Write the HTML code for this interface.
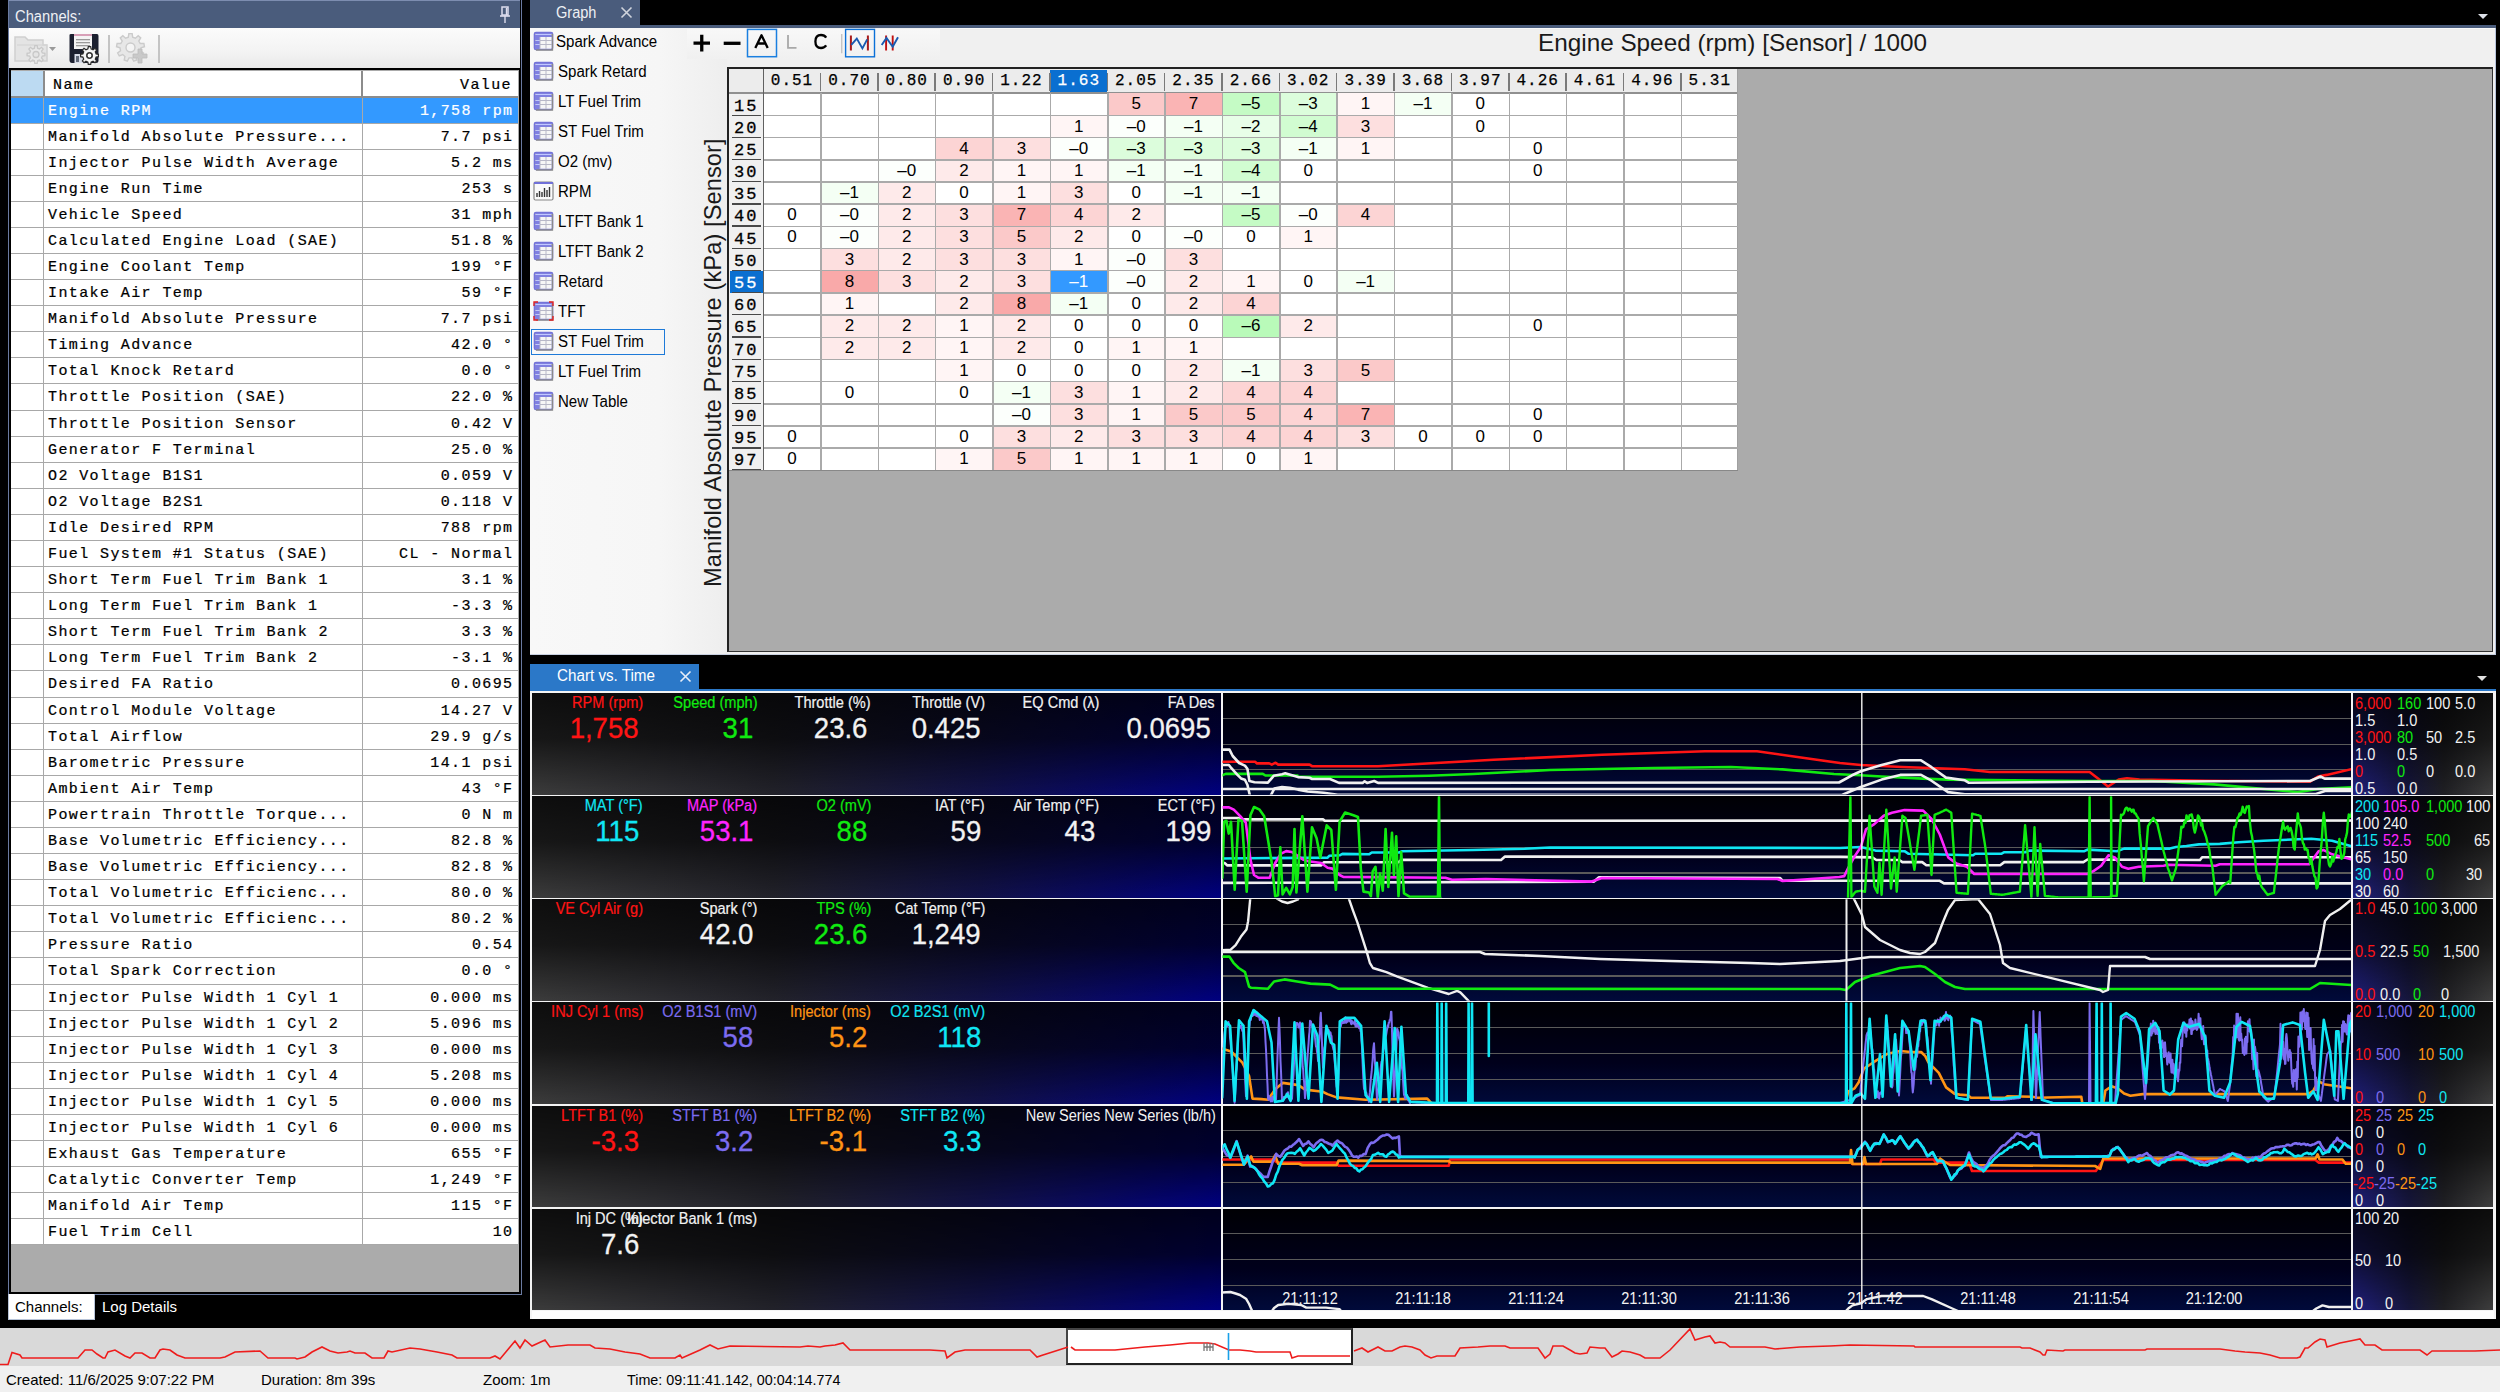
<!DOCTYPE html><html><head><meta charset="utf-8"><style>
*{box-sizing:border-box;margin:0;padding:0}
html,body{width:2500px;height:1392px;overflow:hidden;background:#000;position:relative;font-family:"Liberation Sans",sans-serif}
.a{position:absolute}
.mono{font-family:"Liberation Mono",monospace}
.nw{white-space:pre}
</style></head><body><div class="a" style="left:8px;top:0;width:512px;height:28px;background:#4a5c7c"></div><div class="a" style="left:8.3px;top:0;width:513.7px;height:1295px;border:1.5px solid #6a7aa0;border-top:none"></div><div class="a" style="left:9px;top:0;width:511px;height:1px;background:#7d8db0"></div><div class="a" style="left:9.8px;top:70px;width:510.2px;height:1223.5px;background:#000"></div><div class="a nw" style="left:15px;top:7.5px;font-size:16px;line-height:18px;color:#eef0f4;transform-origin:0 50%;transform:scaleX(0.92)">Channels:</div><svg class="a" style="left:498px;top:6px" width="14" height="18" viewBox="0 0 14 18"><rect x="4" y="1" width="6" height="8" fill="none" stroke="#dde" stroke-width="1.5"/><line x1="2" y1="10" x2="12" y2="10" stroke="#dde" stroke-width="1.6"/><line x1="7" y1="10" x2="7" y2="17" stroke="#dde" stroke-width="1.4"/><line x1="8.5" y1="2" x2="8.5" y2="9" stroke="#dde" stroke-width="1.4"/></svg><div class="a" style="left:9px;top:28px;width:511px;height:39.5px;background:linear-gradient(#fbfbfb,#f3f3f3 60%,#e9e9e9)"></div><div class="a" style="left:9px;top:67.5px;width:511px;height:3.5px;background:#000"></div><div class="a" style="left:11px;top:70px;width:507.8px;height:1221.7px;background:#ababab"></div><div class="a" style="left:11px;top:71px;width:507px;height:26px;background:#fff"></div><div class="a" style="left:11px;top:71px;width:32px;height:25px;background:#bcdaf2"></div><div class="a" style="left:43px;top:71px;width:2px;height:26px;background:#8c8c8c"></div><div class="a" style="left:361px;top:71px;width:2px;height:26px;background:#8c8c8c"></div><div class="a" style="left:11px;top:96px;width:507px;height:2px;background:#8c8c8c"></div><div class="a nw mono" style="left:53px;top:76px;font-size:15px;letter-spacing:1.4px;color:#000;line-height:20px;-webkit-text-stroke:0.22px #000">Name</div><div class="a nw mono" style="right:1988px;top:76px;font-size:15px;letter-spacing:1.4px;color:#000;line-height:20px;-webkit-text-stroke:0.22px #000">Value</div><div class="a" style="left:11px;top:97.50px;width:507px;height:26.09px;background:#3399ff;border-bottom:1px solid #a8a8a8"></div><div class="a" style="left:43px;top:97.50px;width:1px;height:26.09px;background:#a8a8a8"></div><div class="a" style="left:362px;top:97.50px;width:1px;height:26.09px;background:#a8a8a8"></div><div class="a nw mono" style="left:48px;top:101.50px;font-size:15px;letter-spacing:1.4px;color:#fff;line-height:20px;-webkit-text-stroke:0.22px #fff">Engine RPM</div><div class="a nw mono" style="right:1986.5px;top:101.50px;font-size:15px;letter-spacing:1.4px;color:#fff;line-height:20px;text-align:right;-webkit-text-stroke:0.22px #fff">1,758 rpm</div><div class="a" style="left:11px;top:123.59px;width:507px;height:26.09px;background:#fff;border-bottom:1px solid #a8a8a8"></div><div class="a" style="left:43px;top:123.59px;width:1px;height:26.09px;background:#a8a8a8"></div><div class="a" style="left:362px;top:123.59px;width:1px;height:26.09px;background:#a8a8a8"></div><div class="a nw mono" style="left:48px;top:127.59px;font-size:15px;letter-spacing:1.4px;color:#000;line-height:20px;-webkit-text-stroke:0.22px #000">Manifold Absolute Pressure...</div><div class="a nw mono" style="right:1986.5px;top:127.59px;font-size:15px;letter-spacing:1.4px;color:#000;line-height:20px;text-align:right;-webkit-text-stroke:0.22px #000">7.7 psi</div><div class="a" style="left:11px;top:149.68px;width:507px;height:26.09px;background:#fff;border-bottom:1px solid #a8a8a8"></div><div class="a" style="left:43px;top:149.68px;width:1px;height:26.09px;background:#a8a8a8"></div><div class="a" style="left:362px;top:149.68px;width:1px;height:26.09px;background:#a8a8a8"></div><div class="a nw mono" style="left:48px;top:153.68px;font-size:15px;letter-spacing:1.4px;color:#000;line-height:20px;-webkit-text-stroke:0.22px #000">Injector Pulse Width Average</div><div class="a nw mono" style="right:1986.5px;top:153.68px;font-size:15px;letter-spacing:1.4px;color:#000;line-height:20px;text-align:right;-webkit-text-stroke:0.22px #000">5.2 ms</div><div class="a" style="left:11px;top:175.77px;width:507px;height:26.09px;background:#fff;border-bottom:1px solid #a8a8a8"></div><div class="a" style="left:43px;top:175.77px;width:1px;height:26.09px;background:#a8a8a8"></div><div class="a" style="left:362px;top:175.77px;width:1px;height:26.09px;background:#a8a8a8"></div><div class="a nw mono" style="left:48px;top:179.77px;font-size:15px;letter-spacing:1.4px;color:#000;line-height:20px;-webkit-text-stroke:0.22px #000">Engine Run Time</div><div class="a nw mono" style="right:1986.5px;top:179.77px;font-size:15px;letter-spacing:1.4px;color:#000;line-height:20px;text-align:right;-webkit-text-stroke:0.22px #000">253 s</div><div class="a" style="left:11px;top:201.86px;width:507px;height:26.09px;background:#fff;border-bottom:1px solid #a8a8a8"></div><div class="a" style="left:43px;top:201.86px;width:1px;height:26.09px;background:#a8a8a8"></div><div class="a" style="left:362px;top:201.86px;width:1px;height:26.09px;background:#a8a8a8"></div><div class="a nw mono" style="left:48px;top:205.86px;font-size:15px;letter-spacing:1.4px;color:#000;line-height:20px;-webkit-text-stroke:0.22px #000">Vehicle Speed</div><div class="a nw mono" style="right:1986.5px;top:205.86px;font-size:15px;letter-spacing:1.4px;color:#000;line-height:20px;text-align:right;-webkit-text-stroke:0.22px #000">31 mph</div><div class="a" style="left:11px;top:227.95px;width:507px;height:26.09px;background:#fff;border-bottom:1px solid #a8a8a8"></div><div class="a" style="left:43px;top:227.95px;width:1px;height:26.09px;background:#a8a8a8"></div><div class="a" style="left:362px;top:227.95px;width:1px;height:26.09px;background:#a8a8a8"></div><div class="a nw mono" style="left:48px;top:231.95px;font-size:15px;letter-spacing:1.4px;color:#000;line-height:20px;-webkit-text-stroke:0.22px #000">Calculated Engine Load (SAE)</div><div class="a nw mono" style="right:1986.5px;top:231.95px;font-size:15px;letter-spacing:1.4px;color:#000;line-height:20px;text-align:right;-webkit-text-stroke:0.22px #000">51.8 %</div><div class="a" style="left:11px;top:254.04px;width:507px;height:26.09px;background:#fff;border-bottom:1px solid #a8a8a8"></div><div class="a" style="left:43px;top:254.04px;width:1px;height:26.09px;background:#a8a8a8"></div><div class="a" style="left:362px;top:254.04px;width:1px;height:26.09px;background:#a8a8a8"></div><div class="a nw mono" style="left:48px;top:258.04px;font-size:15px;letter-spacing:1.4px;color:#000;line-height:20px;-webkit-text-stroke:0.22px #000">Engine Coolant Temp</div><div class="a nw mono" style="right:1986.5px;top:258.04px;font-size:15px;letter-spacing:1.4px;color:#000;line-height:20px;text-align:right;-webkit-text-stroke:0.22px #000">199 °F</div><div class="a" style="left:11px;top:280.13px;width:507px;height:26.09px;background:#fff;border-bottom:1px solid #a8a8a8"></div><div class="a" style="left:43px;top:280.13px;width:1px;height:26.09px;background:#a8a8a8"></div><div class="a" style="left:362px;top:280.13px;width:1px;height:26.09px;background:#a8a8a8"></div><div class="a nw mono" style="left:48px;top:284.13px;font-size:15px;letter-spacing:1.4px;color:#000;line-height:20px;-webkit-text-stroke:0.22px #000">Intake Air Temp</div><div class="a nw mono" style="right:1986.5px;top:284.13px;font-size:15px;letter-spacing:1.4px;color:#000;line-height:20px;text-align:right;-webkit-text-stroke:0.22px #000">59 °F</div><div class="a" style="left:11px;top:306.22px;width:507px;height:26.09px;background:#fff;border-bottom:1px solid #a8a8a8"></div><div class="a" style="left:43px;top:306.22px;width:1px;height:26.09px;background:#a8a8a8"></div><div class="a" style="left:362px;top:306.22px;width:1px;height:26.09px;background:#a8a8a8"></div><div class="a nw mono" style="left:48px;top:310.22px;font-size:15px;letter-spacing:1.4px;color:#000;line-height:20px;-webkit-text-stroke:0.22px #000">Manifold Absolute Pressure</div><div class="a nw mono" style="right:1986.5px;top:310.22px;font-size:15px;letter-spacing:1.4px;color:#000;line-height:20px;text-align:right;-webkit-text-stroke:0.22px #000">7.7 psi</div><div class="a" style="left:11px;top:332.31px;width:507px;height:26.09px;background:#fff;border-bottom:1px solid #a8a8a8"></div><div class="a" style="left:43px;top:332.31px;width:1px;height:26.09px;background:#a8a8a8"></div><div class="a" style="left:362px;top:332.31px;width:1px;height:26.09px;background:#a8a8a8"></div><div class="a nw mono" style="left:48px;top:336.31px;font-size:15px;letter-spacing:1.4px;color:#000;line-height:20px;-webkit-text-stroke:0.22px #000">Timing Advance</div><div class="a nw mono" style="right:1986.5px;top:336.31px;font-size:15px;letter-spacing:1.4px;color:#000;line-height:20px;text-align:right;-webkit-text-stroke:0.22px #000">42.0 °</div><div class="a" style="left:11px;top:358.40px;width:507px;height:26.09px;background:#fff;border-bottom:1px solid #a8a8a8"></div><div class="a" style="left:43px;top:358.40px;width:1px;height:26.09px;background:#a8a8a8"></div><div class="a" style="left:362px;top:358.40px;width:1px;height:26.09px;background:#a8a8a8"></div><div class="a nw mono" style="left:48px;top:362.40px;font-size:15px;letter-spacing:1.4px;color:#000;line-height:20px;-webkit-text-stroke:0.22px #000">Total Knock Retard</div><div class="a nw mono" style="right:1986.5px;top:362.40px;font-size:15px;letter-spacing:1.4px;color:#000;line-height:20px;text-align:right;-webkit-text-stroke:0.22px #000">0.0 °</div><div class="a" style="left:11px;top:384.49px;width:507px;height:26.09px;background:#fff;border-bottom:1px solid #a8a8a8"></div><div class="a" style="left:43px;top:384.49px;width:1px;height:26.09px;background:#a8a8a8"></div><div class="a" style="left:362px;top:384.49px;width:1px;height:26.09px;background:#a8a8a8"></div><div class="a nw mono" style="left:48px;top:388.49px;font-size:15px;letter-spacing:1.4px;color:#000;line-height:20px;-webkit-text-stroke:0.22px #000">Throttle Position (SAE)</div><div class="a nw mono" style="right:1986.5px;top:388.49px;font-size:15px;letter-spacing:1.4px;color:#000;line-height:20px;text-align:right;-webkit-text-stroke:0.22px #000">22.0 %</div><div class="a" style="left:11px;top:410.58px;width:507px;height:26.09px;background:#fff;border-bottom:1px solid #a8a8a8"></div><div class="a" style="left:43px;top:410.58px;width:1px;height:26.09px;background:#a8a8a8"></div><div class="a" style="left:362px;top:410.58px;width:1px;height:26.09px;background:#a8a8a8"></div><div class="a nw mono" style="left:48px;top:414.58px;font-size:15px;letter-spacing:1.4px;color:#000;line-height:20px;-webkit-text-stroke:0.22px #000">Throttle Position Sensor</div><div class="a nw mono" style="right:1986.5px;top:414.58px;font-size:15px;letter-spacing:1.4px;color:#000;line-height:20px;text-align:right;-webkit-text-stroke:0.22px #000">0.42 V</div><div class="a" style="left:11px;top:436.67px;width:507px;height:26.09px;background:#fff;border-bottom:1px solid #a8a8a8"></div><div class="a" style="left:43px;top:436.67px;width:1px;height:26.09px;background:#a8a8a8"></div><div class="a" style="left:362px;top:436.67px;width:1px;height:26.09px;background:#a8a8a8"></div><div class="a nw mono" style="left:48px;top:440.67px;font-size:15px;letter-spacing:1.4px;color:#000;line-height:20px;-webkit-text-stroke:0.22px #000">Generator F Terminal</div><div class="a nw mono" style="right:1986.5px;top:440.67px;font-size:15px;letter-spacing:1.4px;color:#000;line-height:20px;text-align:right;-webkit-text-stroke:0.22px #000">25.0 %</div><div class="a" style="left:11px;top:462.76px;width:507px;height:26.09px;background:#fff;border-bottom:1px solid #a8a8a8"></div><div class="a" style="left:43px;top:462.76px;width:1px;height:26.09px;background:#a8a8a8"></div><div class="a" style="left:362px;top:462.76px;width:1px;height:26.09px;background:#a8a8a8"></div><div class="a nw mono" style="left:48px;top:466.76px;font-size:15px;letter-spacing:1.4px;color:#000;line-height:20px;-webkit-text-stroke:0.22px #000">O2 Voltage B1S1</div><div class="a nw mono" style="right:1986.5px;top:466.76px;font-size:15px;letter-spacing:1.4px;color:#000;line-height:20px;text-align:right;-webkit-text-stroke:0.22px #000">0.059 V</div><div class="a" style="left:11px;top:488.85px;width:507px;height:26.09px;background:#fff;border-bottom:1px solid #a8a8a8"></div><div class="a" style="left:43px;top:488.85px;width:1px;height:26.09px;background:#a8a8a8"></div><div class="a" style="left:362px;top:488.85px;width:1px;height:26.09px;background:#a8a8a8"></div><div class="a nw mono" style="left:48px;top:492.85px;font-size:15px;letter-spacing:1.4px;color:#000;line-height:20px;-webkit-text-stroke:0.22px #000">O2 Voltage B2S1</div><div class="a nw mono" style="right:1986.5px;top:492.85px;font-size:15px;letter-spacing:1.4px;color:#000;line-height:20px;text-align:right;-webkit-text-stroke:0.22px #000">0.118 V</div><div class="a" style="left:11px;top:514.94px;width:507px;height:26.09px;background:#fff;border-bottom:1px solid #a8a8a8"></div><div class="a" style="left:43px;top:514.94px;width:1px;height:26.09px;background:#a8a8a8"></div><div class="a" style="left:362px;top:514.94px;width:1px;height:26.09px;background:#a8a8a8"></div><div class="a nw mono" style="left:48px;top:518.94px;font-size:15px;letter-spacing:1.4px;color:#000;line-height:20px;-webkit-text-stroke:0.22px #000">Idle Desired RPM</div><div class="a nw mono" style="right:1986.5px;top:518.94px;font-size:15px;letter-spacing:1.4px;color:#000;line-height:20px;text-align:right;-webkit-text-stroke:0.22px #000">788 rpm</div><div class="a" style="left:11px;top:541.03px;width:507px;height:26.09px;background:#fff;border-bottom:1px solid #a8a8a8"></div><div class="a" style="left:43px;top:541.03px;width:1px;height:26.09px;background:#a8a8a8"></div><div class="a" style="left:362px;top:541.03px;width:1px;height:26.09px;background:#a8a8a8"></div><div class="a nw mono" style="left:48px;top:545.03px;font-size:15px;letter-spacing:1.4px;color:#000;line-height:20px;-webkit-text-stroke:0.22px #000">Fuel System #1 Status (SAE)</div><div class="a nw mono" style="right:1986.5px;top:545.03px;font-size:15px;letter-spacing:1.4px;color:#000;line-height:20px;text-align:right;-webkit-text-stroke:0.22px #000">CL - Normal</div><div class="a" style="left:11px;top:567.12px;width:507px;height:26.09px;background:#fff;border-bottom:1px solid #a8a8a8"></div><div class="a" style="left:43px;top:567.12px;width:1px;height:26.09px;background:#a8a8a8"></div><div class="a" style="left:362px;top:567.12px;width:1px;height:26.09px;background:#a8a8a8"></div><div class="a nw mono" style="left:48px;top:571.12px;font-size:15px;letter-spacing:1.4px;color:#000;line-height:20px;-webkit-text-stroke:0.22px #000">Short Term Fuel Trim Bank 1</div><div class="a nw mono" style="right:1986.5px;top:571.12px;font-size:15px;letter-spacing:1.4px;color:#000;line-height:20px;text-align:right;-webkit-text-stroke:0.22px #000">3.1 %</div><div class="a" style="left:11px;top:593.21px;width:507px;height:26.09px;background:#fff;border-bottom:1px solid #a8a8a8"></div><div class="a" style="left:43px;top:593.21px;width:1px;height:26.09px;background:#a8a8a8"></div><div class="a" style="left:362px;top:593.21px;width:1px;height:26.09px;background:#a8a8a8"></div><div class="a nw mono" style="left:48px;top:597.21px;font-size:15px;letter-spacing:1.4px;color:#000;line-height:20px;-webkit-text-stroke:0.22px #000">Long Term Fuel Trim Bank 1</div><div class="a nw mono" style="right:1986.5px;top:597.21px;font-size:15px;letter-spacing:1.4px;color:#000;line-height:20px;text-align:right;-webkit-text-stroke:0.22px #000">-3.3 %</div><div class="a" style="left:11px;top:619.30px;width:507px;height:26.09px;background:#fff;border-bottom:1px solid #a8a8a8"></div><div class="a" style="left:43px;top:619.30px;width:1px;height:26.09px;background:#a8a8a8"></div><div class="a" style="left:362px;top:619.30px;width:1px;height:26.09px;background:#a8a8a8"></div><div class="a nw mono" style="left:48px;top:623.30px;font-size:15px;letter-spacing:1.4px;color:#000;line-height:20px;-webkit-text-stroke:0.22px #000">Short Term Fuel Trim Bank 2</div><div class="a nw mono" style="right:1986.5px;top:623.30px;font-size:15px;letter-spacing:1.4px;color:#000;line-height:20px;text-align:right;-webkit-text-stroke:0.22px #000">3.3 %</div><div class="a" style="left:11px;top:645.39px;width:507px;height:26.09px;background:#fff;border-bottom:1px solid #a8a8a8"></div><div class="a" style="left:43px;top:645.39px;width:1px;height:26.09px;background:#a8a8a8"></div><div class="a" style="left:362px;top:645.39px;width:1px;height:26.09px;background:#a8a8a8"></div><div class="a nw mono" style="left:48px;top:649.39px;font-size:15px;letter-spacing:1.4px;color:#000;line-height:20px;-webkit-text-stroke:0.22px #000">Long Term Fuel Trim Bank 2</div><div class="a nw mono" style="right:1986.5px;top:649.39px;font-size:15px;letter-spacing:1.4px;color:#000;line-height:20px;text-align:right;-webkit-text-stroke:0.22px #000">-3.1 %</div><div class="a" style="left:11px;top:671.48px;width:507px;height:26.09px;background:#fff;border-bottom:1px solid #a8a8a8"></div><div class="a" style="left:43px;top:671.48px;width:1px;height:26.09px;background:#a8a8a8"></div><div class="a" style="left:362px;top:671.48px;width:1px;height:26.09px;background:#a8a8a8"></div><div class="a nw mono" style="left:48px;top:675.48px;font-size:15px;letter-spacing:1.4px;color:#000;line-height:20px;-webkit-text-stroke:0.22px #000">Desired FA Ratio</div><div class="a nw mono" style="right:1986.5px;top:675.48px;font-size:15px;letter-spacing:1.4px;color:#000;line-height:20px;text-align:right;-webkit-text-stroke:0.22px #000">0.0695</div><div class="a" style="left:11px;top:697.57px;width:507px;height:26.09px;background:#fff;border-bottom:1px solid #a8a8a8"></div><div class="a" style="left:43px;top:697.57px;width:1px;height:26.09px;background:#a8a8a8"></div><div class="a" style="left:362px;top:697.57px;width:1px;height:26.09px;background:#a8a8a8"></div><div class="a nw mono" style="left:48px;top:701.57px;font-size:15px;letter-spacing:1.4px;color:#000;line-height:20px;-webkit-text-stroke:0.22px #000">Control Module Voltage</div><div class="a nw mono" style="right:1986.5px;top:701.57px;font-size:15px;letter-spacing:1.4px;color:#000;line-height:20px;text-align:right;-webkit-text-stroke:0.22px #000">14.27 V</div><div class="a" style="left:11px;top:723.66px;width:507px;height:26.09px;background:#fff;border-bottom:1px solid #a8a8a8"></div><div class="a" style="left:43px;top:723.66px;width:1px;height:26.09px;background:#a8a8a8"></div><div class="a" style="left:362px;top:723.66px;width:1px;height:26.09px;background:#a8a8a8"></div><div class="a nw mono" style="left:48px;top:727.66px;font-size:15px;letter-spacing:1.4px;color:#000;line-height:20px;-webkit-text-stroke:0.22px #000">Total Airflow</div><div class="a nw mono" style="right:1986.5px;top:727.66px;font-size:15px;letter-spacing:1.4px;color:#000;line-height:20px;text-align:right;-webkit-text-stroke:0.22px #000">29.9 g/s</div><div class="a" style="left:11px;top:749.75px;width:507px;height:26.09px;background:#fff;border-bottom:1px solid #a8a8a8"></div><div class="a" style="left:43px;top:749.75px;width:1px;height:26.09px;background:#a8a8a8"></div><div class="a" style="left:362px;top:749.75px;width:1px;height:26.09px;background:#a8a8a8"></div><div class="a nw mono" style="left:48px;top:753.75px;font-size:15px;letter-spacing:1.4px;color:#000;line-height:20px;-webkit-text-stroke:0.22px #000">Barometric Pressure</div><div class="a nw mono" style="right:1986.5px;top:753.75px;font-size:15px;letter-spacing:1.4px;color:#000;line-height:20px;text-align:right;-webkit-text-stroke:0.22px #000">14.1 psi</div><div class="a" style="left:11px;top:775.84px;width:507px;height:26.09px;background:#fff;border-bottom:1px solid #a8a8a8"></div><div class="a" style="left:43px;top:775.84px;width:1px;height:26.09px;background:#a8a8a8"></div><div class="a" style="left:362px;top:775.84px;width:1px;height:26.09px;background:#a8a8a8"></div><div class="a nw mono" style="left:48px;top:779.84px;font-size:15px;letter-spacing:1.4px;color:#000;line-height:20px;-webkit-text-stroke:0.22px #000">Ambient Air Temp</div><div class="a nw mono" style="right:1986.5px;top:779.84px;font-size:15px;letter-spacing:1.4px;color:#000;line-height:20px;text-align:right;-webkit-text-stroke:0.22px #000">43 °F</div><div class="a" style="left:11px;top:801.93px;width:507px;height:26.09px;background:#fff;border-bottom:1px solid #a8a8a8"></div><div class="a" style="left:43px;top:801.93px;width:1px;height:26.09px;background:#a8a8a8"></div><div class="a" style="left:362px;top:801.93px;width:1px;height:26.09px;background:#a8a8a8"></div><div class="a nw mono" style="left:48px;top:805.93px;font-size:15px;letter-spacing:1.4px;color:#000;line-height:20px;-webkit-text-stroke:0.22px #000">Powertrain Throttle Torque...</div><div class="a nw mono" style="right:1986.5px;top:805.93px;font-size:15px;letter-spacing:1.4px;color:#000;line-height:20px;text-align:right;-webkit-text-stroke:0.22px #000">0 N m</div><div class="a" style="left:11px;top:828.02px;width:507px;height:26.09px;background:#fff;border-bottom:1px solid #a8a8a8"></div><div class="a" style="left:43px;top:828.02px;width:1px;height:26.09px;background:#a8a8a8"></div><div class="a" style="left:362px;top:828.02px;width:1px;height:26.09px;background:#a8a8a8"></div><div class="a nw mono" style="left:48px;top:832.02px;font-size:15px;letter-spacing:1.4px;color:#000;line-height:20px;-webkit-text-stroke:0.22px #000">Base Volumetric Efficiency...</div><div class="a nw mono" style="right:1986.5px;top:832.02px;font-size:15px;letter-spacing:1.4px;color:#000;line-height:20px;text-align:right;-webkit-text-stroke:0.22px #000">82.8 %</div><div class="a" style="left:11px;top:854.11px;width:507px;height:26.09px;background:#fff;border-bottom:1px solid #a8a8a8"></div><div class="a" style="left:43px;top:854.11px;width:1px;height:26.09px;background:#a8a8a8"></div><div class="a" style="left:362px;top:854.11px;width:1px;height:26.09px;background:#a8a8a8"></div><div class="a nw mono" style="left:48px;top:858.11px;font-size:15px;letter-spacing:1.4px;color:#000;line-height:20px;-webkit-text-stroke:0.22px #000">Base Volumetric Efficiency...</div><div class="a nw mono" style="right:1986.5px;top:858.11px;font-size:15px;letter-spacing:1.4px;color:#000;line-height:20px;text-align:right;-webkit-text-stroke:0.22px #000">82.8 %</div><div class="a" style="left:11px;top:880.20px;width:507px;height:26.09px;background:#fff;border-bottom:1px solid #a8a8a8"></div><div class="a" style="left:43px;top:880.20px;width:1px;height:26.09px;background:#a8a8a8"></div><div class="a" style="left:362px;top:880.20px;width:1px;height:26.09px;background:#a8a8a8"></div><div class="a nw mono" style="left:48px;top:884.20px;font-size:15px;letter-spacing:1.4px;color:#000;line-height:20px;-webkit-text-stroke:0.22px #000">Total Volumetric Efficienc...</div><div class="a nw mono" style="right:1986.5px;top:884.20px;font-size:15px;letter-spacing:1.4px;color:#000;line-height:20px;text-align:right;-webkit-text-stroke:0.22px #000">80.0 %</div><div class="a" style="left:11px;top:906.29px;width:507px;height:26.09px;background:#fff;border-bottom:1px solid #a8a8a8"></div><div class="a" style="left:43px;top:906.29px;width:1px;height:26.09px;background:#a8a8a8"></div><div class="a" style="left:362px;top:906.29px;width:1px;height:26.09px;background:#a8a8a8"></div><div class="a nw mono" style="left:48px;top:910.29px;font-size:15px;letter-spacing:1.4px;color:#000;line-height:20px;-webkit-text-stroke:0.22px #000">Total Volumetric Efficienc...</div><div class="a nw mono" style="right:1986.5px;top:910.29px;font-size:15px;letter-spacing:1.4px;color:#000;line-height:20px;text-align:right;-webkit-text-stroke:0.22px #000">80.2 %</div><div class="a" style="left:11px;top:932.38px;width:507px;height:26.09px;background:#fff;border-bottom:1px solid #a8a8a8"></div><div class="a" style="left:43px;top:932.38px;width:1px;height:26.09px;background:#a8a8a8"></div><div class="a" style="left:362px;top:932.38px;width:1px;height:26.09px;background:#a8a8a8"></div><div class="a nw mono" style="left:48px;top:936.38px;font-size:15px;letter-spacing:1.4px;color:#000;line-height:20px;-webkit-text-stroke:0.22px #000">Pressure Ratio</div><div class="a nw mono" style="right:1986.5px;top:936.38px;font-size:15px;letter-spacing:1.4px;color:#000;line-height:20px;text-align:right;-webkit-text-stroke:0.22px #000">0.54</div><div class="a" style="left:11px;top:958.47px;width:507px;height:26.09px;background:#fff;border-bottom:1px solid #a8a8a8"></div><div class="a" style="left:43px;top:958.47px;width:1px;height:26.09px;background:#a8a8a8"></div><div class="a" style="left:362px;top:958.47px;width:1px;height:26.09px;background:#a8a8a8"></div><div class="a nw mono" style="left:48px;top:962.47px;font-size:15px;letter-spacing:1.4px;color:#000;line-height:20px;-webkit-text-stroke:0.22px #000">Total Spark Correction</div><div class="a nw mono" style="right:1986.5px;top:962.47px;font-size:15px;letter-spacing:1.4px;color:#000;line-height:20px;text-align:right;-webkit-text-stroke:0.22px #000">0.0 °</div><div class="a" style="left:11px;top:984.56px;width:507px;height:26.09px;background:#fff;border-bottom:1px solid #a8a8a8"></div><div class="a" style="left:43px;top:984.56px;width:1px;height:26.09px;background:#a8a8a8"></div><div class="a" style="left:362px;top:984.56px;width:1px;height:26.09px;background:#a8a8a8"></div><div class="a nw mono" style="left:48px;top:988.56px;font-size:15px;letter-spacing:1.4px;color:#000;line-height:20px;-webkit-text-stroke:0.22px #000">Injector Pulse Width 1 Cyl 1</div><div class="a nw mono" style="right:1986.5px;top:988.56px;font-size:15px;letter-spacing:1.4px;color:#000;line-height:20px;text-align:right;-webkit-text-stroke:0.22px #000">0.000 ms</div><div class="a" style="left:11px;top:1010.65px;width:507px;height:26.09px;background:#fff;border-bottom:1px solid #a8a8a8"></div><div class="a" style="left:43px;top:1010.65px;width:1px;height:26.09px;background:#a8a8a8"></div><div class="a" style="left:362px;top:1010.65px;width:1px;height:26.09px;background:#a8a8a8"></div><div class="a nw mono" style="left:48px;top:1014.65px;font-size:15px;letter-spacing:1.4px;color:#000;line-height:20px;-webkit-text-stroke:0.22px #000">Injector Pulse Width 1 Cyl 2</div><div class="a nw mono" style="right:1986.5px;top:1014.65px;font-size:15px;letter-spacing:1.4px;color:#000;line-height:20px;text-align:right;-webkit-text-stroke:0.22px #000">5.096 ms</div><div class="a" style="left:11px;top:1036.74px;width:507px;height:26.09px;background:#fff;border-bottom:1px solid #a8a8a8"></div><div class="a" style="left:43px;top:1036.74px;width:1px;height:26.09px;background:#a8a8a8"></div><div class="a" style="left:362px;top:1036.74px;width:1px;height:26.09px;background:#a8a8a8"></div><div class="a nw mono" style="left:48px;top:1040.74px;font-size:15px;letter-spacing:1.4px;color:#000;line-height:20px;-webkit-text-stroke:0.22px #000">Injector Pulse Width 1 Cyl 3</div><div class="a nw mono" style="right:1986.5px;top:1040.74px;font-size:15px;letter-spacing:1.4px;color:#000;line-height:20px;text-align:right;-webkit-text-stroke:0.22px #000">0.000 ms</div><div class="a" style="left:11px;top:1062.83px;width:507px;height:26.09px;background:#fff;border-bottom:1px solid #a8a8a8"></div><div class="a" style="left:43px;top:1062.83px;width:1px;height:26.09px;background:#a8a8a8"></div><div class="a" style="left:362px;top:1062.83px;width:1px;height:26.09px;background:#a8a8a8"></div><div class="a nw mono" style="left:48px;top:1066.83px;font-size:15px;letter-spacing:1.4px;color:#000;line-height:20px;-webkit-text-stroke:0.22px #000">Injector Pulse Width 1 Cyl 4</div><div class="a nw mono" style="right:1986.5px;top:1066.83px;font-size:15px;letter-spacing:1.4px;color:#000;line-height:20px;text-align:right;-webkit-text-stroke:0.22px #000">5.208 ms</div><div class="a" style="left:11px;top:1088.92px;width:507px;height:26.09px;background:#fff;border-bottom:1px solid #a8a8a8"></div><div class="a" style="left:43px;top:1088.92px;width:1px;height:26.09px;background:#a8a8a8"></div><div class="a" style="left:362px;top:1088.92px;width:1px;height:26.09px;background:#a8a8a8"></div><div class="a nw mono" style="left:48px;top:1092.92px;font-size:15px;letter-spacing:1.4px;color:#000;line-height:20px;-webkit-text-stroke:0.22px #000">Injector Pulse Width 1 Cyl 5</div><div class="a nw mono" style="right:1986.5px;top:1092.92px;font-size:15px;letter-spacing:1.4px;color:#000;line-height:20px;text-align:right;-webkit-text-stroke:0.22px #000">0.000 ms</div><div class="a" style="left:11px;top:1115.01px;width:507px;height:26.09px;background:#fff;border-bottom:1px solid #a8a8a8"></div><div class="a" style="left:43px;top:1115.01px;width:1px;height:26.09px;background:#a8a8a8"></div><div class="a" style="left:362px;top:1115.01px;width:1px;height:26.09px;background:#a8a8a8"></div><div class="a nw mono" style="left:48px;top:1119.01px;font-size:15px;letter-spacing:1.4px;color:#000;line-height:20px;-webkit-text-stroke:0.22px #000">Injector Pulse Width 1 Cyl 6</div><div class="a nw mono" style="right:1986.5px;top:1119.01px;font-size:15px;letter-spacing:1.4px;color:#000;line-height:20px;text-align:right;-webkit-text-stroke:0.22px #000">0.000 ms</div><div class="a" style="left:11px;top:1141.10px;width:507px;height:26.09px;background:#fff;border-bottom:1px solid #a8a8a8"></div><div class="a" style="left:43px;top:1141.10px;width:1px;height:26.09px;background:#a8a8a8"></div><div class="a" style="left:362px;top:1141.10px;width:1px;height:26.09px;background:#a8a8a8"></div><div class="a nw mono" style="left:48px;top:1145.10px;font-size:15px;letter-spacing:1.4px;color:#000;line-height:20px;-webkit-text-stroke:0.22px #000">Exhaust Gas Temperature</div><div class="a nw mono" style="right:1986.5px;top:1145.10px;font-size:15px;letter-spacing:1.4px;color:#000;line-height:20px;text-align:right;-webkit-text-stroke:0.22px #000">655 °F</div><div class="a" style="left:11px;top:1167.19px;width:507px;height:26.09px;background:#fff;border-bottom:1px solid #a8a8a8"></div><div class="a" style="left:43px;top:1167.19px;width:1px;height:26.09px;background:#a8a8a8"></div><div class="a" style="left:362px;top:1167.19px;width:1px;height:26.09px;background:#a8a8a8"></div><div class="a nw mono" style="left:48px;top:1171.19px;font-size:15px;letter-spacing:1.4px;color:#000;line-height:20px;-webkit-text-stroke:0.22px #000">Catalytic Converter Temp</div><div class="a nw mono" style="right:1986.5px;top:1171.19px;font-size:15px;letter-spacing:1.4px;color:#000;line-height:20px;text-align:right;-webkit-text-stroke:0.22px #000">1,249 °F</div><div class="a" style="left:11px;top:1193.28px;width:507px;height:26.09px;background:#fff;border-bottom:1px solid #a8a8a8"></div><div class="a" style="left:43px;top:1193.28px;width:1px;height:26.09px;background:#a8a8a8"></div><div class="a" style="left:362px;top:1193.28px;width:1px;height:26.09px;background:#a8a8a8"></div><div class="a nw mono" style="left:48px;top:1197.28px;font-size:15px;letter-spacing:1.4px;color:#000;line-height:20px;-webkit-text-stroke:0.22px #000">Manifold Air Temp</div><div class="a nw mono" style="right:1986.5px;top:1197.28px;font-size:15px;letter-spacing:1.4px;color:#000;line-height:20px;text-align:right;-webkit-text-stroke:0.22px #000">115 °F</div><div class="a" style="left:11px;top:1219.37px;width:507px;height:26.09px;background:#fff;border-bottom:1px solid #a8a8a8"></div><div class="a" style="left:43px;top:1219.37px;width:1px;height:26.09px;background:#a8a8a8"></div><div class="a" style="left:362px;top:1219.37px;width:1px;height:26.09px;background:#a8a8a8"></div><div class="a nw mono" style="left:48px;top:1223.37px;font-size:15px;letter-spacing:1.4px;color:#000;line-height:20px;-webkit-text-stroke:0.22px #000">Fuel Trim Cell</div><div class="a nw mono" style="right:1986.5px;top:1223.37px;font-size:15px;letter-spacing:1.4px;color:#000;line-height:20px;text-align:right;-webkit-text-stroke:0.22px #000">10</div><svg class="a" style="left:13px;top:33px" width="44" height="32" viewBox="0 0 44 32"><path d="M2,4 L12,4 L15,7 L30,7 L30,12 L34,12 L34,28 L2,28 Z" fill="#e4e4e4" stroke="#cfcfcf" stroke-width="1.5"/><path d="M4,12 L34,12" stroke="#d6d6d6" stroke-width="1.2"/><path d="M21.48,15.18 L21.80,12.58 L24.20,12.58 L24.52,15.18 L26.40,15.96 L28.46,14.35 L30.15,16.04 L28.54,18.10 L29.32,19.98 L31.92,20.30 L31.92,22.70 L29.32,23.02 L28.54,24.90 L30.15,26.96 L28.46,28.65 L26.40,27.04 L24.52,27.82 L24.20,30.42 L21.80,30.42 L21.48,27.82 L19.60,27.04 L17.54,28.65 L15.85,26.96 L17.46,24.90 L16.68,23.02 L14.08,22.70 L14.08,20.30 L16.68,19.98 L17.46,18.10 L15.85,16.04 L17.54,14.35 L19.60,15.96Z M26.00,21.50 A3,3 0 1 0 20.00,21.50 A3,3 0 1 0 26.00,21.50Z" fill="#e9e9e9" stroke="#c8c8c8" stroke-width="1.3" fill-rule="evenodd"/><path d="M36,14 L43,14 L39.5,18 Z" fill="#9a9a9a"/></svg><svg class="a" style="left:68px;top:33px" width="32" height="32" viewBox="0 0 32 32"><path d="M1.5,2 Q1.5,1 3,1 L29,1 Q30.5,1 30.5,3 L30.5,28 Q30.5,30 28,30 L4,30 Q1.5,30 1.5,27 Z" fill="#1c2030"/><rect x="6" y="1" width="18" height="15" fill="#f4f4f4"/><rect x="6" y="1" width="18" height="2" fill="#d8a0b8"/><rect x="8" y="6" width="14" height="1.3" fill="#9a9a9a"/><rect x="8" y="9" width="14" height="1.3" fill="#9a9a9a"/><rect x="8" y="12" width="14" height="1.3" fill="#9a9a9a"/><rect x="6.5" y="21" width="10" height="9" fill="#d8dce8"/><rect x="8" y="23" width="3" height="6" fill="#606878"/><path d="M19.91,15.89 L20.30,13.58 L22.70,13.58 L23.09,15.89 L25.05,16.70 L26.96,15.35 L28.65,17.04 L27.30,18.95 L28.11,20.91 L30.42,21.30 L30.42,23.70 L28.11,24.09 L27.30,26.05 L28.65,27.96 L26.96,29.65 L25.05,28.30 L23.09,29.11 L22.70,31.42 L20.30,31.42 L19.91,29.11 L17.95,28.30 L16.04,29.65 L14.35,27.96 L15.70,26.05 L14.89,24.09 L12.58,23.70 L12.58,21.30 L14.89,20.91 L15.70,18.95 L14.35,17.04 L16.04,15.35 L17.95,16.70Z M24.10,22.50 A2.6,2.6 0 1 0 18.90,22.50 A2.6,2.6 0 1 0 24.10,22.50Z" fill="#f6f6f6" stroke="#2a2a2a" stroke-width="1.2" fill-rule="evenodd"/><circle cx="21.5" cy="22.5" r="2.6" fill="#fff" stroke="#333" stroke-width="1.4"/></svg><div class="a" style="left:108px;top:35px;width:2px;height:28px;background:#c4c4c4"></div><svg class="a" style="left:115px;top:32px" width="36" height="34" viewBox="0 0 36 34"><path d="M13.32,5.23 L13.84,1.60 L17.16,1.60 L17.68,5.23 L20.43,6.23 L23.17,3.79 L25.71,5.92 L23.77,9.04 L25.24,11.57 L28.90,11.45 L29.48,14.72 L25.99,15.87 L25.49,18.74 L28.37,21.02 L26.71,23.89 L23.30,22.53 L21.06,24.40 L21.81,28.00 L18.70,29.13 L16.96,25.90 L14.04,25.90 L12.30,29.13 L9.19,28.00 L9.94,24.40 L7.70,22.53 L4.29,23.89 L2.63,21.02 L5.51,18.74 L5.01,15.87 L1.52,14.72 L2.10,11.45 L5.76,11.57 L7.23,9.04 L5.29,5.92 L7.83,3.79 L10.57,6.23Z M20.00,15.50 A4.5,4.5 0 1 0 11.00,15.50 A4.5,4.5 0 1 0 20.00,15.50Z" fill="#e7e7e7" stroke="#cbcbcb" stroke-width="1.4" fill-rule="evenodd"/><path d="M23,17 L27,17 L27,22 L32,22 L32,26 L27,26 L27,31 L23,31 L23,26 L18,26 L18,22 L23,22 Z" fill="#c9c9c9" stroke="#bdbdbd" stroke-width="0.8"/></svg><div class="a" style="left:158px;top:35px;width:2px;height:28px;background:#c4c4c4"></div><div class="a" style="left:8px;top:1294px;width:87px;height:26px;background:#fff;border:1px solid #b8c4d8;border-top:none"></div><div class="a nw" style="left:15px;top:1298px;font-size:15px;color:#000">Channels:</div><div class="a nw" style="left:102px;top:1298px;font-size:15px;color:#fff">Log Details</div><div class="a" style="left:530px;top:0;width:110px;height:25px;background:#4a5c7c"></div><div class="a nw" style="left:556px;top:4.3px;font-size:16px;color:#eef0f4;transform-origin:0 50%;transform:scaleX(0.91)">Graph</div><svg class="a" style="left:620px;top:6px" width="13" height="13" viewBox="0 0 13 13"><path d="M1.5,1.5 L11.5,11.5 M11.5,1.5 L1.5,11.5" stroke="#d0d4dc" stroke-width="1.6"/></svg><svg class="a" style="left:2477px;top:12.5px" width="12" height="8" viewBox="0 0 12 8"><path d="M1,1 L11,1 L6,6 Z" fill="#dde0e8"/></svg><div class="a" style="left:530px;top:25px;width:1966px;height:2.5px;background:#4a5c7c"></div><div class="a" style="left:530px;top:28px;width:1966px;height:626.5px;background:#f0f0f0;border-right:1.2px solid #b8c4dc;border-bottom:1.2px solid #c8d0e0"></div><div class="a" style="left:940px;top:27.5px;width:1555px;height:1.5px;background:#fafafa"></div><div class="a" style="left:530px;top:28px;width:197px;height:626px;background:linear-gradient(to right,#f8f8f8 0px,#f6f6f6 130px,#eeeeee 195px)"></div><div class="a" style="left:687px;top:29px;width:253px;height:30px;background:linear-gradient(#f8f8f8,#f0f0f0)"></div><div class="a nw" style="left:1538px;top:29px;font-size:24.3px;color:#1a1a1a">Engine Speed (rpm) [Sensor] / 1000</div><div class="a nw" style="left:700px;top:587px;font-size:23.6px;letter-spacing:0.1px;color:#1a1a1a;transform-origin:0 0;transform:rotate(-90deg)">Manifold Absolute Pressure (kPa) [Sensor]</div><div class="a" style="left:727px;top:67px;width:1766px;height:585px;background:#ababab;border-left:2px solid #222;border-top:2px solid #222;border-bottom:1.5px solid #333;border-right:1.5px solid #333"></div><div class="a" style="left:729px;top:69px;width:1009.4px;height:24.3px;background:#ececec"></div><div class="a" style="left:729px;top:93.3px;width:34.3px;height:377.1px;background:#f0f0f0"></div><div class="a" style="left:763.3px;top:93.3px;width:975.1px;height:377.1px;background:#fff"></div><div class="a nw mono" style="left:763.3px;top:70px;width:57.4px;text-align:center;font-size:16px;letter-spacing:1px;line-height:22px;color:#000;-webkit-text-stroke:0.25px #000">0.51</div><div class="a nw mono" style="left:820.7px;top:70px;width:57.4px;text-align:center;font-size:16px;letter-spacing:1px;line-height:22px;color:#000;-webkit-text-stroke:0.25px #000">0.70</div><div class="a" style="left:819.7px;top:73px;width:1.6px;height:18px;background:#7a7a7a"></div><div class="a nw mono" style="left:878.0px;top:70px;width:57.4px;text-align:center;font-size:16px;letter-spacing:1px;line-height:22px;color:#000;-webkit-text-stroke:0.25px #000">0.80</div><div class="a" style="left:877.0px;top:73px;width:1.6px;height:18px;background:#7a7a7a"></div><div class="a nw mono" style="left:935.4px;top:70px;width:57.4px;text-align:center;font-size:16px;letter-spacing:1px;line-height:22px;color:#000;-webkit-text-stroke:0.25px #000">0.90</div><div class="a" style="left:934.4px;top:73px;width:1.6px;height:18px;background:#7a7a7a"></div><div class="a nw mono" style="left:992.7px;top:70px;width:57.4px;text-align:center;font-size:16px;letter-spacing:1px;line-height:22px;color:#000;-webkit-text-stroke:0.25px #000">1.22</div><div class="a" style="left:991.7px;top:73px;width:1.6px;height:18px;background:#7a7a7a"></div><div class="a" style="left:1050.1px;top:70px;width:57.4px;height:23.3px;background:#0a6fd0"></div><div class="a nw mono" style="left:1050.1px;top:70px;width:57.4px;text-align:center;font-size:16px;letter-spacing:1px;line-height:22px;color:#fff;-webkit-text-stroke:0.25px #fff">1.63</div><div class="a" style="left:1049.1px;top:73px;width:1.6px;height:18px;background:#7a7a7a"></div><div class="a nw mono" style="left:1107.5px;top:70px;width:57.4px;text-align:center;font-size:16px;letter-spacing:1px;line-height:22px;color:#000;-webkit-text-stroke:0.25px #000">2.05</div><div class="a" style="left:1106.5px;top:73px;width:1.6px;height:18px;background:#7a7a7a"></div><div class="a nw mono" style="left:1164.8px;top:70px;width:57.4px;text-align:center;font-size:16px;letter-spacing:1px;line-height:22px;color:#000;-webkit-text-stroke:0.25px #000">2.35</div><div class="a" style="left:1163.8px;top:73px;width:1.6px;height:18px;background:#7a7a7a"></div><div class="a nw mono" style="left:1222.2px;top:70px;width:57.4px;text-align:center;font-size:16px;letter-spacing:1px;line-height:22px;color:#000;-webkit-text-stroke:0.25px #000">2.66</div><div class="a" style="left:1221.2px;top:73px;width:1.6px;height:18px;background:#7a7a7a"></div><div class="a nw mono" style="left:1279.5px;top:70px;width:57.4px;text-align:center;font-size:16px;letter-spacing:1px;line-height:22px;color:#000;-webkit-text-stroke:0.25px #000">3.02</div><div class="a" style="left:1278.5px;top:73px;width:1.6px;height:18px;background:#7a7a7a"></div><div class="a nw mono" style="left:1336.9px;top:70px;width:57.4px;text-align:center;font-size:16px;letter-spacing:1px;line-height:22px;color:#000;-webkit-text-stroke:0.25px #000">3.39</div><div class="a" style="left:1335.9px;top:73px;width:1.6px;height:18px;background:#7a7a7a"></div><div class="a nw mono" style="left:1394.3px;top:70px;width:57.4px;text-align:center;font-size:16px;letter-spacing:1px;line-height:22px;color:#000;-webkit-text-stroke:0.25px #000">3.68</div><div class="a" style="left:1393.3px;top:73px;width:1.6px;height:18px;background:#7a7a7a"></div><div class="a nw mono" style="left:1451.6px;top:70px;width:57.4px;text-align:center;font-size:16px;letter-spacing:1px;line-height:22px;color:#000;-webkit-text-stroke:0.25px #000">3.97</div><div class="a" style="left:1450.6px;top:73px;width:1.6px;height:18px;background:#7a7a7a"></div><div class="a nw mono" style="left:1509.0px;top:70px;width:57.4px;text-align:center;font-size:16px;letter-spacing:1px;line-height:22px;color:#000;-webkit-text-stroke:0.25px #000">4.26</div><div class="a" style="left:1508.0px;top:73px;width:1.6px;height:18px;background:#7a7a7a"></div><div class="a nw mono" style="left:1566.3px;top:70px;width:57.4px;text-align:center;font-size:16px;letter-spacing:1px;line-height:22px;color:#000;-webkit-text-stroke:0.25px #000">4.61</div><div class="a" style="left:1565.3px;top:73px;width:1.6px;height:18px;background:#7a7a7a"></div><div class="a nw mono" style="left:1623.7px;top:70px;width:57.4px;text-align:center;font-size:16px;letter-spacing:1px;line-height:22px;color:#000;-webkit-text-stroke:0.25px #000">4.96</div><div class="a" style="left:1622.7px;top:73px;width:1.6px;height:18px;background:#7a7a7a"></div><div class="a nw mono" style="left:1681.1px;top:70px;width:57.4px;text-align:center;font-size:16px;letter-spacing:1px;line-height:22px;color:#000;-webkit-text-stroke:0.25px #000">5.31</div><div class="a" style="left:1680.1px;top:73px;width:1.6px;height:18px;background:#7a7a7a"></div><div class="a" style="left:729px;top:91.8px;width:1009.4px;height:2px;background:#909090"></div><div class="a" style="left:1737.4px;top:69px;width:1px;height:401.4px;background:#a0a0a0"></div><div class="a" style="left:1107.5px;top:93.3px;width:57.4px;height:22.2px;background:#fbc9c9"></div><div class="a nw" style="left:1107.5px;top:94.3px;width:57.4px;text-align:center;font-size:17px;line-height:20px;color:#000">5</div><div class="a" style="left:1164.8px;top:93.3px;width:57.4px;height:22.2px;background:#fab4b4"></div><div class="a nw" style="left:1164.8px;top:94.3px;width:57.4px;text-align:center;font-size:17px;line-height:20px;color:#000">7</div><div class="a" style="left:1222.2px;top:93.3px;width:57.4px;height:22.2px;background:#c5fbc5"></div><div class="a nw" style="left:1222.2px;top:94.3px;width:57.4px;text-align:center;font-size:17px;line-height:20px;color:#000">&#8211;5</div><div class="a" style="left:1279.5px;top:93.3px;width:57.4px;height:22.2px;background:#dcfddc"></div><div class="a nw" style="left:1279.5px;top:94.3px;width:57.4px;text-align:center;font-size:17px;line-height:20px;color:#000">&#8211;3</div><div class="a" style="left:1336.9px;top:93.3px;width:57.4px;height:22.2px;background:#fff5f5"></div><div class="a nw" style="left:1336.9px;top:94.3px;width:57.4px;text-align:center;font-size:17px;line-height:20px;color:#000">1</div><div class="a" style="left:1394.3px;top:93.3px;width:57.4px;height:22.2px;background:#f4fff4"></div><div class="a nw" style="left:1394.3px;top:94.3px;width:57.4px;text-align:center;font-size:17px;line-height:20px;color:#000">&#8211;1</div><div class="a nw" style="left:1451.6px;top:94.3px;width:57.4px;text-align:center;font-size:17px;line-height:20px;color:#000">0</div><div class="a nw mono" style="left:729px;top:95.5px;width:34.3px;text-align:center;font-size:17px;letter-spacing:2px;line-height:21px;color:#000;-webkit-text-stroke:0.3px #000">15</div><div class="a" style="left:732px;top:114.5px;width:29px;height:1.4px;background:#484848"></div><div class="a" style="left:1050.1px;top:115.5px;width:57.4px;height:22.2px;background:#fff5f5"></div><div class="a nw" style="left:1050.1px;top:116.5px;width:57.4px;text-align:center;font-size:17px;line-height:20px;color:#000">1</div><div class="a" style="left:1107.5px;top:115.5px;width:57.4px;height:22.2px;background:#fcfffc"></div><div class="a nw" style="left:1107.5px;top:116.5px;width:57.4px;text-align:center;font-size:17px;line-height:20px;color:#000">&#8211;0</div><div class="a" style="left:1164.8px;top:115.5px;width:57.4px;height:22.2px;background:#f4fff4"></div><div class="a nw" style="left:1164.8px;top:116.5px;width:57.4px;text-align:center;font-size:17px;line-height:20px;color:#000">&#8211;1</div><div class="a" style="left:1222.2px;top:115.5px;width:57.4px;height:22.2px;background:#e8fee8"></div><div class="a nw" style="left:1222.2px;top:116.5px;width:57.4px;text-align:center;font-size:17px;line-height:20px;color:#000">&#8211;2</div><div class="a" style="left:1279.5px;top:115.5px;width:57.4px;height:22.2px;background:#d1fcd1"></div><div class="a nw" style="left:1279.5px;top:116.5px;width:57.4px;text-align:center;font-size:17px;line-height:20px;color:#000">&#8211;4</div><div class="a" style="left:1336.9px;top:115.5px;width:57.4px;height:22.2px;background:#fddfdf"></div><div class="a nw" style="left:1336.9px;top:116.5px;width:57.4px;text-align:center;font-size:17px;line-height:20px;color:#000">3</div><div class="a nw" style="left:1451.6px;top:116.5px;width:57.4px;text-align:center;font-size:17px;line-height:20px;color:#000">0</div><div class="a nw mono" style="left:729px;top:117.7px;width:34.3px;text-align:center;font-size:17px;letter-spacing:2px;line-height:21px;color:#000;-webkit-text-stroke:0.3px #000">20</div><div class="a" style="left:732px;top:136.7px;width:29px;height:1.4px;background:#484848"></div><div class="a" style="left:935.4px;top:137.7px;width:57.4px;height:22.2px;background:#fcd4d4"></div><div class="a nw" style="left:935.4px;top:138.7px;width:57.4px;text-align:center;font-size:17px;line-height:20px;color:#000">4</div><div class="a" style="left:992.7px;top:137.7px;width:57.4px;height:22.2px;background:#fddfdf"></div><div class="a nw" style="left:992.7px;top:138.7px;width:57.4px;text-align:center;font-size:17px;line-height:20px;color:#000">3</div><div class="a" style="left:1050.1px;top:137.7px;width:57.4px;height:22.2px;background:#fcfffc"></div><div class="a nw" style="left:1050.1px;top:138.7px;width:57.4px;text-align:center;font-size:17px;line-height:20px;color:#000">&#8211;0</div><div class="a" style="left:1107.5px;top:137.7px;width:57.4px;height:22.2px;background:#dcfddc"></div><div class="a nw" style="left:1107.5px;top:138.7px;width:57.4px;text-align:center;font-size:17px;line-height:20px;color:#000">&#8211;3</div><div class="a" style="left:1164.8px;top:137.7px;width:57.4px;height:22.2px;background:#dcfddc"></div><div class="a nw" style="left:1164.8px;top:138.7px;width:57.4px;text-align:center;font-size:17px;line-height:20px;color:#000">&#8211;3</div><div class="a" style="left:1222.2px;top:137.7px;width:57.4px;height:22.2px;background:#dcfddc"></div><div class="a nw" style="left:1222.2px;top:138.7px;width:57.4px;text-align:center;font-size:17px;line-height:20px;color:#000">&#8211;3</div><div class="a" style="left:1279.5px;top:137.7px;width:57.4px;height:22.2px;background:#f4fff4"></div><div class="a nw" style="left:1279.5px;top:138.7px;width:57.4px;text-align:center;font-size:17px;line-height:20px;color:#000">&#8211;1</div><div class="a" style="left:1336.9px;top:137.7px;width:57.4px;height:22.2px;background:#fff5f5"></div><div class="a nw" style="left:1336.9px;top:138.7px;width:57.4px;text-align:center;font-size:17px;line-height:20px;color:#000">1</div><div class="a nw" style="left:1509.0px;top:138.7px;width:57.4px;text-align:center;font-size:17px;line-height:20px;color:#000">0</div><div class="a nw mono" style="left:729px;top:139.9px;width:34.3px;text-align:center;font-size:17px;letter-spacing:2px;line-height:21px;color:#000;-webkit-text-stroke:0.3px #000">25</div><div class="a" style="left:732px;top:158.8px;width:29px;height:1.4px;background:#484848"></div><div class="a" style="left:878.0px;top:159.8px;width:57.4px;height:22.2px;background:#fcfffc"></div><div class="a nw" style="left:878.0px;top:160.8px;width:57.4px;text-align:center;font-size:17px;line-height:20px;color:#000">&#8211;0</div><div class="a" style="left:935.4px;top:159.8px;width:57.4px;height:22.2px;background:#feeaea"></div><div class="a nw" style="left:935.4px;top:160.8px;width:57.4px;text-align:center;font-size:17px;line-height:20px;color:#000">2</div><div class="a" style="left:992.7px;top:159.8px;width:57.4px;height:22.2px;background:#fff5f5"></div><div class="a nw" style="left:992.7px;top:160.8px;width:57.4px;text-align:center;font-size:17px;line-height:20px;color:#000">1</div><div class="a" style="left:1050.1px;top:159.8px;width:57.4px;height:22.2px;background:#fff5f5"></div><div class="a nw" style="left:1050.1px;top:160.8px;width:57.4px;text-align:center;font-size:17px;line-height:20px;color:#000">1</div><div class="a" style="left:1107.5px;top:159.8px;width:57.4px;height:22.2px;background:#f4fff4"></div><div class="a nw" style="left:1107.5px;top:160.8px;width:57.4px;text-align:center;font-size:17px;line-height:20px;color:#000">&#8211;1</div><div class="a" style="left:1164.8px;top:159.8px;width:57.4px;height:22.2px;background:#f4fff4"></div><div class="a nw" style="left:1164.8px;top:160.8px;width:57.4px;text-align:center;font-size:17px;line-height:20px;color:#000">&#8211;1</div><div class="a" style="left:1222.2px;top:159.8px;width:57.4px;height:22.2px;background:#d1fcd1"></div><div class="a nw" style="left:1222.2px;top:160.8px;width:57.4px;text-align:center;font-size:17px;line-height:20px;color:#000">&#8211;4</div><div class="a nw" style="left:1279.5px;top:160.8px;width:57.4px;text-align:center;font-size:17px;line-height:20px;color:#000">0</div><div class="a nw" style="left:1509.0px;top:160.8px;width:57.4px;text-align:center;font-size:17px;line-height:20px;color:#000">0</div><div class="a nw mono" style="left:729px;top:162.0px;width:34.3px;text-align:center;font-size:17px;letter-spacing:2px;line-height:21px;color:#000;-webkit-text-stroke:0.3px #000">30</div><div class="a" style="left:732px;top:181.0px;width:29px;height:1.4px;background:#484848"></div><div class="a" style="left:820.7px;top:182.0px;width:57.4px;height:22.2px;background:#f4fff4"></div><div class="a nw" style="left:820.7px;top:183.0px;width:57.4px;text-align:center;font-size:17px;line-height:20px;color:#000">&#8211;1</div><div class="a" style="left:878.0px;top:182.0px;width:57.4px;height:22.2px;background:#feeaea"></div><div class="a nw" style="left:878.0px;top:183.0px;width:57.4px;text-align:center;font-size:17px;line-height:20px;color:#000">2</div><div class="a nw" style="left:935.4px;top:183.0px;width:57.4px;text-align:center;font-size:17px;line-height:20px;color:#000">0</div><div class="a" style="left:992.7px;top:182.0px;width:57.4px;height:22.2px;background:#fff5f5"></div><div class="a nw" style="left:992.7px;top:183.0px;width:57.4px;text-align:center;font-size:17px;line-height:20px;color:#000">1</div><div class="a" style="left:1050.1px;top:182.0px;width:57.4px;height:22.2px;background:#fddfdf"></div><div class="a nw" style="left:1050.1px;top:183.0px;width:57.4px;text-align:center;font-size:17px;line-height:20px;color:#000">3</div><div class="a nw" style="left:1107.5px;top:183.0px;width:57.4px;text-align:center;font-size:17px;line-height:20px;color:#000">0</div><div class="a" style="left:1164.8px;top:182.0px;width:57.4px;height:22.2px;background:#f4fff4"></div><div class="a nw" style="left:1164.8px;top:183.0px;width:57.4px;text-align:center;font-size:17px;line-height:20px;color:#000">&#8211;1</div><div class="a" style="left:1222.2px;top:182.0px;width:57.4px;height:22.2px;background:#f4fff4"></div><div class="a nw" style="left:1222.2px;top:183.0px;width:57.4px;text-align:center;font-size:17px;line-height:20px;color:#000">&#8211;1</div><div class="a nw mono" style="left:729px;top:184.2px;width:34.3px;text-align:center;font-size:17px;letter-spacing:2px;line-height:21px;color:#000;-webkit-text-stroke:0.3px #000">35</div><div class="a" style="left:732px;top:203.2px;width:29px;height:1.4px;background:#484848"></div><div class="a nw" style="left:763.3px;top:205.2px;width:57.4px;text-align:center;font-size:17px;line-height:20px;color:#000">0</div><div class="a" style="left:820.7px;top:204.2px;width:57.4px;height:22.2px;background:#fcfffc"></div><div class="a nw" style="left:820.7px;top:205.2px;width:57.4px;text-align:center;font-size:17px;line-height:20px;color:#000">&#8211;0</div><div class="a" style="left:878.0px;top:204.2px;width:57.4px;height:22.2px;background:#feeaea"></div><div class="a nw" style="left:878.0px;top:205.2px;width:57.4px;text-align:center;font-size:17px;line-height:20px;color:#000">2</div><div class="a" style="left:935.4px;top:204.2px;width:57.4px;height:22.2px;background:#fddfdf"></div><div class="a nw" style="left:935.4px;top:205.2px;width:57.4px;text-align:center;font-size:17px;line-height:20px;color:#000">3</div><div class="a" style="left:992.7px;top:204.2px;width:57.4px;height:22.2px;background:#fab4b4"></div><div class="a nw" style="left:992.7px;top:205.2px;width:57.4px;text-align:center;font-size:17px;line-height:20px;color:#000">7</div><div class="a" style="left:1050.1px;top:204.2px;width:57.4px;height:22.2px;background:#fcd4d4"></div><div class="a nw" style="left:1050.1px;top:205.2px;width:57.4px;text-align:center;font-size:17px;line-height:20px;color:#000">4</div><div class="a" style="left:1107.5px;top:204.2px;width:57.4px;height:22.2px;background:#feeaea"></div><div class="a nw" style="left:1107.5px;top:205.2px;width:57.4px;text-align:center;font-size:17px;line-height:20px;color:#000">2</div><div class="a" style="left:1222.2px;top:204.2px;width:57.4px;height:22.2px;background:#c5fbc5"></div><div class="a nw" style="left:1222.2px;top:205.2px;width:57.4px;text-align:center;font-size:17px;line-height:20px;color:#000">&#8211;5</div><div class="a" style="left:1279.5px;top:204.2px;width:57.4px;height:22.2px;background:#fcfffc"></div><div class="a nw" style="left:1279.5px;top:205.2px;width:57.4px;text-align:center;font-size:17px;line-height:20px;color:#000">&#8211;0</div><div class="a" style="left:1336.9px;top:204.2px;width:57.4px;height:22.2px;background:#fcd4d4"></div><div class="a nw" style="left:1336.9px;top:205.2px;width:57.4px;text-align:center;font-size:17px;line-height:20px;color:#000">4</div><div class="a nw mono" style="left:729px;top:206.4px;width:34.3px;text-align:center;font-size:17px;letter-spacing:2px;line-height:21px;color:#000;-webkit-text-stroke:0.3px #000">40</div><div class="a" style="left:732px;top:225.4px;width:29px;height:1.4px;background:#484848"></div><div class="a nw" style="left:763.3px;top:227.4px;width:57.4px;text-align:center;font-size:17px;line-height:20px;color:#000">0</div><div class="a" style="left:820.7px;top:226.4px;width:57.4px;height:22.2px;background:#fcfffc"></div><div class="a nw" style="left:820.7px;top:227.4px;width:57.4px;text-align:center;font-size:17px;line-height:20px;color:#000">&#8211;0</div><div class="a" style="left:878.0px;top:226.4px;width:57.4px;height:22.2px;background:#feeaea"></div><div class="a nw" style="left:878.0px;top:227.4px;width:57.4px;text-align:center;font-size:17px;line-height:20px;color:#000">2</div><div class="a" style="left:935.4px;top:226.4px;width:57.4px;height:22.2px;background:#fddfdf"></div><div class="a nw" style="left:935.4px;top:227.4px;width:57.4px;text-align:center;font-size:17px;line-height:20px;color:#000">3</div><div class="a" style="left:992.7px;top:226.4px;width:57.4px;height:22.2px;background:#fbc9c9"></div><div class="a nw" style="left:992.7px;top:227.4px;width:57.4px;text-align:center;font-size:17px;line-height:20px;color:#000">5</div><div class="a" style="left:1050.1px;top:226.4px;width:57.4px;height:22.2px;background:#feeaea"></div><div class="a nw" style="left:1050.1px;top:227.4px;width:57.4px;text-align:center;font-size:17px;line-height:20px;color:#000">2</div><div class="a nw" style="left:1107.5px;top:227.4px;width:57.4px;text-align:center;font-size:17px;line-height:20px;color:#000">0</div><div class="a" style="left:1164.8px;top:226.4px;width:57.4px;height:22.2px;background:#fcfffc"></div><div class="a nw" style="left:1164.8px;top:227.4px;width:57.4px;text-align:center;font-size:17px;line-height:20px;color:#000">&#8211;0</div><div class="a nw" style="left:1222.2px;top:227.4px;width:57.4px;text-align:center;font-size:17px;line-height:20px;color:#000">0</div><div class="a" style="left:1279.5px;top:226.4px;width:57.4px;height:22.2px;background:#fff5f5"></div><div class="a nw" style="left:1279.5px;top:227.4px;width:57.4px;text-align:center;font-size:17px;line-height:20px;color:#000">1</div><div class="a nw mono" style="left:729px;top:228.6px;width:34.3px;text-align:center;font-size:17px;letter-spacing:2px;line-height:21px;color:#000;-webkit-text-stroke:0.3px #000">45</div><div class="a" style="left:732px;top:247.6px;width:29px;height:1.4px;background:#484848"></div><div class="a" style="left:820.7px;top:248.6px;width:57.4px;height:22.2px;background:#fddfdf"></div><div class="a nw" style="left:820.7px;top:249.6px;width:57.4px;text-align:center;font-size:17px;line-height:20px;color:#000">3</div><div class="a" style="left:878.0px;top:248.6px;width:57.4px;height:22.2px;background:#feeaea"></div><div class="a nw" style="left:878.0px;top:249.6px;width:57.4px;text-align:center;font-size:17px;line-height:20px;color:#000">2</div><div class="a" style="left:935.4px;top:248.6px;width:57.4px;height:22.2px;background:#fddfdf"></div><div class="a nw" style="left:935.4px;top:249.6px;width:57.4px;text-align:center;font-size:17px;line-height:20px;color:#000">3</div><div class="a" style="left:992.7px;top:248.6px;width:57.4px;height:22.2px;background:#fddfdf"></div><div class="a nw" style="left:992.7px;top:249.6px;width:57.4px;text-align:center;font-size:17px;line-height:20px;color:#000">3</div><div class="a" style="left:1050.1px;top:248.6px;width:57.4px;height:22.2px;background:#fff5f5"></div><div class="a nw" style="left:1050.1px;top:249.6px;width:57.4px;text-align:center;font-size:17px;line-height:20px;color:#000">1</div><div class="a" style="left:1107.5px;top:248.6px;width:57.4px;height:22.2px;background:#fcfffc"></div><div class="a nw" style="left:1107.5px;top:249.6px;width:57.4px;text-align:center;font-size:17px;line-height:20px;color:#000">&#8211;0</div><div class="a" style="left:1164.8px;top:248.6px;width:57.4px;height:22.2px;background:#fddfdf"></div><div class="a nw" style="left:1164.8px;top:249.6px;width:57.4px;text-align:center;font-size:17px;line-height:20px;color:#000">3</div><div class="a nw mono" style="left:729px;top:250.8px;width:34.3px;text-align:center;font-size:17px;letter-spacing:2px;line-height:21px;color:#000;-webkit-text-stroke:0.3px #000">50</div><div class="a" style="left:732px;top:269.7px;width:29px;height:1.4px;background:#484848"></div><div class="a" style="left:820.7px;top:270.7px;width:57.4px;height:22.2px;background:#f9a9a9"></div><div class="a nw" style="left:820.7px;top:271.7px;width:57.4px;text-align:center;font-size:17px;line-height:20px;color:#000">8</div><div class="a" style="left:878.0px;top:270.7px;width:57.4px;height:22.2px;background:#fddfdf"></div><div class="a nw" style="left:878.0px;top:271.7px;width:57.4px;text-align:center;font-size:17px;line-height:20px;color:#000">3</div><div class="a" style="left:935.4px;top:270.7px;width:57.4px;height:22.2px;background:#feeaea"></div><div class="a nw" style="left:935.4px;top:271.7px;width:57.4px;text-align:center;font-size:17px;line-height:20px;color:#000">2</div><div class="a" style="left:992.7px;top:270.7px;width:57.4px;height:22.2px;background:#fddfdf"></div><div class="a nw" style="left:992.7px;top:271.7px;width:57.4px;text-align:center;font-size:17px;line-height:20px;color:#000">3</div><div class="a" style="left:1050.1px;top:270.7px;width:57.4px;height:22.2px;background:#3399ff"></div><div class="a nw" style="left:1050.1px;top:271.7px;width:57.4px;text-align:center;font-size:17px;line-height:20px;color:#fff">&#8211;1</div><div class="a" style="left:1107.5px;top:270.7px;width:57.4px;height:22.2px;background:#fcfffc"></div><div class="a nw" style="left:1107.5px;top:271.7px;width:57.4px;text-align:center;font-size:17px;line-height:20px;color:#000">&#8211;0</div><div class="a" style="left:1164.8px;top:270.7px;width:57.4px;height:22.2px;background:#feeaea"></div><div class="a nw" style="left:1164.8px;top:271.7px;width:57.4px;text-align:center;font-size:17px;line-height:20px;color:#000">2</div><div class="a" style="left:1222.2px;top:270.7px;width:57.4px;height:22.2px;background:#fff5f5"></div><div class="a nw" style="left:1222.2px;top:271.7px;width:57.4px;text-align:center;font-size:17px;line-height:20px;color:#000">1</div><div class="a nw" style="left:1279.5px;top:271.7px;width:57.4px;text-align:center;font-size:17px;line-height:20px;color:#000">0</div><div class="a" style="left:1336.9px;top:270.7px;width:57.4px;height:22.2px;background:#f4fff4"></div><div class="a nw" style="left:1336.9px;top:271.7px;width:57.4px;text-align:center;font-size:17px;line-height:20px;color:#000">&#8211;1</div><div class="a" style="left:730px;top:270.7px;width:33.3px;height:22.2px;background:#0a6fd0"></div><div class="a nw mono" style="left:729px;top:272.9px;width:34.3px;text-align:center;font-size:17px;letter-spacing:2px;line-height:21px;color:#fff;-webkit-text-stroke:0.3px #fff">55</div><div class="a" style="left:732px;top:291.9px;width:29px;height:1.4px;background:#484848"></div><div class="a" style="left:820.7px;top:292.9px;width:57.4px;height:22.2px;background:#fff5f5"></div><div class="a nw" style="left:820.7px;top:293.9px;width:57.4px;text-align:center;font-size:17px;line-height:20px;color:#000">1</div><div class="a" style="left:935.4px;top:292.9px;width:57.4px;height:22.2px;background:#feeaea"></div><div class="a nw" style="left:935.4px;top:293.9px;width:57.4px;text-align:center;font-size:17px;line-height:20px;color:#000">2</div><div class="a" style="left:992.7px;top:292.9px;width:57.4px;height:22.2px;background:#f9a9a9"></div><div class="a nw" style="left:992.7px;top:293.9px;width:57.4px;text-align:center;font-size:17px;line-height:20px;color:#000">8</div><div class="a" style="left:1050.1px;top:292.9px;width:57.4px;height:22.2px;background:#f4fff4"></div><div class="a nw" style="left:1050.1px;top:293.9px;width:57.4px;text-align:center;font-size:17px;line-height:20px;color:#000">&#8211;1</div><div class="a nw" style="left:1107.5px;top:293.9px;width:57.4px;text-align:center;font-size:17px;line-height:20px;color:#000">0</div><div class="a" style="left:1164.8px;top:292.9px;width:57.4px;height:22.2px;background:#feeaea"></div><div class="a nw" style="left:1164.8px;top:293.9px;width:57.4px;text-align:center;font-size:17px;line-height:20px;color:#000">2</div><div class="a" style="left:1222.2px;top:292.9px;width:57.4px;height:22.2px;background:#fcd4d4"></div><div class="a nw" style="left:1222.2px;top:293.9px;width:57.4px;text-align:center;font-size:17px;line-height:20px;color:#000">4</div><div class="a nw mono" style="left:729px;top:295.1px;width:34.3px;text-align:center;font-size:17px;letter-spacing:2px;line-height:21px;color:#000;-webkit-text-stroke:0.3px #000">60</div><div class="a" style="left:732px;top:314.1px;width:29px;height:1.4px;background:#484848"></div><div class="a" style="left:820.7px;top:315.1px;width:57.4px;height:22.2px;background:#feeaea"></div><div class="a nw" style="left:820.7px;top:316.1px;width:57.4px;text-align:center;font-size:17px;line-height:20px;color:#000">2</div><div class="a" style="left:878.0px;top:315.1px;width:57.4px;height:22.2px;background:#feeaea"></div><div class="a nw" style="left:878.0px;top:316.1px;width:57.4px;text-align:center;font-size:17px;line-height:20px;color:#000">2</div><div class="a" style="left:935.4px;top:315.1px;width:57.4px;height:22.2px;background:#fff5f5"></div><div class="a nw" style="left:935.4px;top:316.1px;width:57.4px;text-align:center;font-size:17px;line-height:20px;color:#000">1</div><div class="a" style="left:992.7px;top:315.1px;width:57.4px;height:22.2px;background:#feeaea"></div><div class="a nw" style="left:992.7px;top:316.1px;width:57.4px;text-align:center;font-size:17px;line-height:20px;color:#000">2</div><div class="a nw" style="left:1050.1px;top:316.1px;width:57.4px;text-align:center;font-size:17px;line-height:20px;color:#000">0</div><div class="a nw" style="left:1107.5px;top:316.1px;width:57.4px;text-align:center;font-size:17px;line-height:20px;color:#000">0</div><div class="a nw" style="left:1164.8px;top:316.1px;width:57.4px;text-align:center;font-size:17px;line-height:20px;color:#000">0</div><div class="a" style="left:1222.2px;top:315.1px;width:57.4px;height:22.2px;background:#b9fab9"></div><div class="a nw" style="left:1222.2px;top:316.1px;width:57.4px;text-align:center;font-size:17px;line-height:20px;color:#000">&#8211;6</div><div class="a" style="left:1279.5px;top:315.1px;width:57.4px;height:22.2px;background:#feeaea"></div><div class="a nw" style="left:1279.5px;top:316.1px;width:57.4px;text-align:center;font-size:17px;line-height:20px;color:#000">2</div><div class="a nw" style="left:1509.0px;top:316.1px;width:57.4px;text-align:center;font-size:17px;line-height:20px;color:#000">0</div><div class="a nw mono" style="left:729px;top:317.3px;width:34.3px;text-align:center;font-size:17px;letter-spacing:2px;line-height:21px;color:#000;-webkit-text-stroke:0.3px #000">65</div><div class="a" style="left:732px;top:336.3px;width:29px;height:1.4px;background:#484848"></div><div class="a" style="left:820.7px;top:337.3px;width:57.4px;height:22.2px;background:#feeaea"></div><div class="a nw" style="left:820.7px;top:338.3px;width:57.4px;text-align:center;font-size:17px;line-height:20px;color:#000">2</div><div class="a" style="left:878.0px;top:337.3px;width:57.4px;height:22.2px;background:#feeaea"></div><div class="a nw" style="left:878.0px;top:338.3px;width:57.4px;text-align:center;font-size:17px;line-height:20px;color:#000">2</div><div class="a" style="left:935.4px;top:337.3px;width:57.4px;height:22.2px;background:#fff5f5"></div><div class="a nw" style="left:935.4px;top:338.3px;width:57.4px;text-align:center;font-size:17px;line-height:20px;color:#000">1</div><div class="a" style="left:992.7px;top:337.3px;width:57.4px;height:22.2px;background:#feeaea"></div><div class="a nw" style="left:992.7px;top:338.3px;width:57.4px;text-align:center;font-size:17px;line-height:20px;color:#000">2</div><div class="a nw" style="left:1050.1px;top:338.3px;width:57.4px;text-align:center;font-size:17px;line-height:20px;color:#000">0</div><div class="a" style="left:1107.5px;top:337.3px;width:57.4px;height:22.2px;background:#fff5f5"></div><div class="a nw" style="left:1107.5px;top:338.3px;width:57.4px;text-align:center;font-size:17px;line-height:20px;color:#000">1</div><div class="a" style="left:1164.8px;top:337.3px;width:57.4px;height:22.2px;background:#fff5f5"></div><div class="a nw" style="left:1164.8px;top:338.3px;width:57.4px;text-align:center;font-size:17px;line-height:20px;color:#000">1</div><div class="a nw mono" style="left:729px;top:339.5px;width:34.3px;text-align:center;font-size:17px;letter-spacing:2px;line-height:21px;color:#000;-webkit-text-stroke:0.3px #000">70</div><div class="a" style="left:732px;top:358.5px;width:29px;height:1.4px;background:#484848"></div><div class="a" style="left:935.4px;top:359.5px;width:57.4px;height:22.2px;background:#fff5f5"></div><div class="a nw" style="left:935.4px;top:360.5px;width:57.4px;text-align:center;font-size:17px;line-height:20px;color:#000">1</div><div class="a nw" style="left:992.7px;top:360.5px;width:57.4px;text-align:center;font-size:17px;line-height:20px;color:#000">0</div><div class="a nw" style="left:1050.1px;top:360.5px;width:57.4px;text-align:center;font-size:17px;line-height:20px;color:#000">0</div><div class="a nw" style="left:1107.5px;top:360.5px;width:57.4px;text-align:center;font-size:17px;line-height:20px;color:#000">0</div><div class="a" style="left:1164.8px;top:359.5px;width:57.4px;height:22.2px;background:#feeaea"></div><div class="a nw" style="left:1164.8px;top:360.5px;width:57.4px;text-align:center;font-size:17px;line-height:20px;color:#000">2</div><div class="a" style="left:1222.2px;top:359.5px;width:57.4px;height:22.2px;background:#f4fff4"></div><div class="a nw" style="left:1222.2px;top:360.5px;width:57.4px;text-align:center;font-size:17px;line-height:20px;color:#000">&#8211;1</div><div class="a" style="left:1279.5px;top:359.5px;width:57.4px;height:22.2px;background:#fddfdf"></div><div class="a nw" style="left:1279.5px;top:360.5px;width:57.4px;text-align:center;font-size:17px;line-height:20px;color:#000">3</div><div class="a" style="left:1336.9px;top:359.5px;width:57.4px;height:22.2px;background:#fbc9c9"></div><div class="a nw" style="left:1336.9px;top:360.5px;width:57.4px;text-align:center;font-size:17px;line-height:20px;color:#000">5</div><div class="a nw mono" style="left:729px;top:361.7px;width:34.3px;text-align:center;font-size:17px;letter-spacing:2px;line-height:21px;color:#000;-webkit-text-stroke:0.3px #000">75</div><div class="a" style="left:732px;top:380.6px;width:29px;height:1.4px;background:#484848"></div><div class="a nw" style="left:820.7px;top:382.6px;width:57.4px;text-align:center;font-size:17px;line-height:20px;color:#000">0</div><div class="a nw" style="left:935.4px;top:382.6px;width:57.4px;text-align:center;font-size:17px;line-height:20px;color:#000">0</div><div class="a" style="left:992.7px;top:381.6px;width:57.4px;height:22.2px;background:#f4fff4"></div><div class="a nw" style="left:992.7px;top:382.6px;width:57.4px;text-align:center;font-size:17px;line-height:20px;color:#000">&#8211;1</div><div class="a" style="left:1050.1px;top:381.6px;width:57.4px;height:22.2px;background:#fddfdf"></div><div class="a nw" style="left:1050.1px;top:382.6px;width:57.4px;text-align:center;font-size:17px;line-height:20px;color:#000">3</div><div class="a" style="left:1107.5px;top:381.6px;width:57.4px;height:22.2px;background:#fff5f5"></div><div class="a nw" style="left:1107.5px;top:382.6px;width:57.4px;text-align:center;font-size:17px;line-height:20px;color:#000">1</div><div class="a" style="left:1164.8px;top:381.6px;width:57.4px;height:22.2px;background:#feeaea"></div><div class="a nw" style="left:1164.8px;top:382.6px;width:57.4px;text-align:center;font-size:17px;line-height:20px;color:#000">2</div><div class="a" style="left:1222.2px;top:381.6px;width:57.4px;height:22.2px;background:#fcd4d4"></div><div class="a nw" style="left:1222.2px;top:382.6px;width:57.4px;text-align:center;font-size:17px;line-height:20px;color:#000">4</div><div class="a" style="left:1279.5px;top:381.6px;width:57.4px;height:22.2px;background:#fcd4d4"></div><div class="a nw" style="left:1279.5px;top:382.6px;width:57.4px;text-align:center;font-size:17px;line-height:20px;color:#000">4</div><div class="a nw mono" style="left:729px;top:383.8px;width:34.3px;text-align:center;font-size:17px;letter-spacing:2px;line-height:21px;color:#000;-webkit-text-stroke:0.3px #000">85</div><div class="a" style="left:732px;top:402.8px;width:29px;height:1.4px;background:#484848"></div><div class="a" style="left:992.7px;top:403.8px;width:57.4px;height:22.2px;background:#fcfffc"></div><div class="a nw" style="left:992.7px;top:404.8px;width:57.4px;text-align:center;font-size:17px;line-height:20px;color:#000">&#8211;0</div><div class="a" style="left:1050.1px;top:403.8px;width:57.4px;height:22.2px;background:#fddfdf"></div><div class="a nw" style="left:1050.1px;top:404.8px;width:57.4px;text-align:center;font-size:17px;line-height:20px;color:#000">3</div><div class="a" style="left:1107.5px;top:403.8px;width:57.4px;height:22.2px;background:#fff5f5"></div><div class="a nw" style="left:1107.5px;top:404.8px;width:57.4px;text-align:center;font-size:17px;line-height:20px;color:#000">1</div><div class="a" style="left:1164.8px;top:403.8px;width:57.4px;height:22.2px;background:#fbc9c9"></div><div class="a nw" style="left:1164.8px;top:404.8px;width:57.4px;text-align:center;font-size:17px;line-height:20px;color:#000">5</div><div class="a" style="left:1222.2px;top:403.8px;width:57.4px;height:22.2px;background:#fbc9c9"></div><div class="a nw" style="left:1222.2px;top:404.8px;width:57.4px;text-align:center;font-size:17px;line-height:20px;color:#000">5</div><div class="a" style="left:1279.5px;top:403.8px;width:57.4px;height:22.2px;background:#fcd4d4"></div><div class="a nw" style="left:1279.5px;top:404.8px;width:57.4px;text-align:center;font-size:17px;line-height:20px;color:#000">4</div><div class="a" style="left:1336.9px;top:403.8px;width:57.4px;height:22.2px;background:#fab4b4"></div><div class="a nw" style="left:1336.9px;top:404.8px;width:57.4px;text-align:center;font-size:17px;line-height:20px;color:#000">7</div><div class="a nw" style="left:1509.0px;top:404.8px;width:57.4px;text-align:center;font-size:17px;line-height:20px;color:#000">0</div><div class="a nw mono" style="left:729px;top:406.0px;width:34.3px;text-align:center;font-size:17px;letter-spacing:2px;line-height:21px;color:#000;-webkit-text-stroke:0.3px #000">90</div><div class="a" style="left:732px;top:425.0px;width:29px;height:1.4px;background:#484848"></div><div class="a nw" style="left:763.3px;top:427.0px;width:57.4px;text-align:center;font-size:17px;line-height:20px;color:#000">0</div><div class="a nw" style="left:935.4px;top:427.0px;width:57.4px;text-align:center;font-size:17px;line-height:20px;color:#000">0</div><div class="a" style="left:992.7px;top:426.0px;width:57.4px;height:22.2px;background:#fddfdf"></div><div class="a nw" style="left:992.7px;top:427.0px;width:57.4px;text-align:center;font-size:17px;line-height:20px;color:#000">3</div><div class="a" style="left:1050.1px;top:426.0px;width:57.4px;height:22.2px;background:#feeaea"></div><div class="a nw" style="left:1050.1px;top:427.0px;width:57.4px;text-align:center;font-size:17px;line-height:20px;color:#000">2</div><div class="a" style="left:1107.5px;top:426.0px;width:57.4px;height:22.2px;background:#fddfdf"></div><div class="a nw" style="left:1107.5px;top:427.0px;width:57.4px;text-align:center;font-size:17px;line-height:20px;color:#000">3</div><div class="a" style="left:1164.8px;top:426.0px;width:57.4px;height:22.2px;background:#fddfdf"></div><div class="a nw" style="left:1164.8px;top:427.0px;width:57.4px;text-align:center;font-size:17px;line-height:20px;color:#000">3</div><div class="a" style="left:1222.2px;top:426.0px;width:57.4px;height:22.2px;background:#fcd4d4"></div><div class="a nw" style="left:1222.2px;top:427.0px;width:57.4px;text-align:center;font-size:17px;line-height:20px;color:#000">4</div><div class="a" style="left:1279.5px;top:426.0px;width:57.4px;height:22.2px;background:#fcd4d4"></div><div class="a nw" style="left:1279.5px;top:427.0px;width:57.4px;text-align:center;font-size:17px;line-height:20px;color:#000">4</div><div class="a" style="left:1336.9px;top:426.0px;width:57.4px;height:22.2px;background:#fddfdf"></div><div class="a nw" style="left:1336.9px;top:427.0px;width:57.4px;text-align:center;font-size:17px;line-height:20px;color:#000">3</div><div class="a nw" style="left:1394.3px;top:427.0px;width:57.4px;text-align:center;font-size:17px;line-height:20px;color:#000">0</div><div class="a nw" style="left:1451.6px;top:427.0px;width:57.4px;text-align:center;font-size:17px;line-height:20px;color:#000">0</div><div class="a nw" style="left:1509.0px;top:427.0px;width:57.4px;text-align:center;font-size:17px;line-height:20px;color:#000">0</div><div class="a nw mono" style="left:729px;top:428.2px;width:34.3px;text-align:center;font-size:17px;letter-spacing:2px;line-height:21px;color:#000;-webkit-text-stroke:0.3px #000">95</div><div class="a" style="left:732px;top:447.2px;width:29px;height:1.4px;background:#484848"></div><div class="a nw" style="left:763.3px;top:449.2px;width:57.4px;text-align:center;font-size:17px;line-height:20px;color:#000">0</div><div class="a" style="left:935.4px;top:448.2px;width:57.4px;height:22.2px;background:#fff5f5"></div><div class="a nw" style="left:935.4px;top:449.2px;width:57.4px;text-align:center;font-size:17px;line-height:20px;color:#000">1</div><div class="a" style="left:992.7px;top:448.2px;width:57.4px;height:22.2px;background:#fbc9c9"></div><div class="a nw" style="left:992.7px;top:449.2px;width:57.4px;text-align:center;font-size:17px;line-height:20px;color:#000">5</div><div class="a" style="left:1050.1px;top:448.2px;width:57.4px;height:22.2px;background:#fff5f5"></div><div class="a nw" style="left:1050.1px;top:449.2px;width:57.4px;text-align:center;font-size:17px;line-height:20px;color:#000">1</div><div class="a" style="left:1107.5px;top:448.2px;width:57.4px;height:22.2px;background:#fff5f5"></div><div class="a nw" style="left:1107.5px;top:449.2px;width:57.4px;text-align:center;font-size:17px;line-height:20px;color:#000">1</div><div class="a" style="left:1164.8px;top:448.2px;width:57.4px;height:22.2px;background:#fff5f5"></div><div class="a nw" style="left:1164.8px;top:449.2px;width:57.4px;text-align:center;font-size:17px;line-height:20px;color:#000">1</div><div class="a nw" style="left:1222.2px;top:449.2px;width:57.4px;text-align:center;font-size:17px;line-height:20px;color:#000">0</div><div class="a" style="left:1279.5px;top:448.2px;width:57.4px;height:22.2px;background:#fff5f5"></div><div class="a nw" style="left:1279.5px;top:449.2px;width:57.4px;text-align:center;font-size:17px;line-height:20px;color:#000">1</div><div class="a nw mono" style="left:729px;top:450.4px;width:34.3px;text-align:center;font-size:17px;letter-spacing:2px;line-height:21px;color:#000;-webkit-text-stroke:0.3px #000">97</div><div class="a" style="left:732px;top:469.4px;width:29px;height:1.4px;background:#484848"></div><div class="a" style="left:820.2px;top:93.3px;width:1.6px;height:377.1px;background:#aaaaaa"></div><div class="a" style="left:877.5px;top:93.3px;width:1.6px;height:377.1px;background:#aaaaaa"></div><div class="a" style="left:934.9px;top:93.3px;width:1.6px;height:377.1px;background:#aaaaaa"></div><div class="a" style="left:992.2px;top:93.3px;width:1.6px;height:377.1px;background:#aaaaaa"></div><div class="a" style="left:1049.6px;top:93.3px;width:1.6px;height:377.1px;background:#aaaaaa"></div><div class="a" style="left:1107.0px;top:93.3px;width:1.6px;height:377.1px;background:#aaaaaa"></div><div class="a" style="left:1164.3px;top:93.3px;width:1.6px;height:377.1px;background:#aaaaaa"></div><div class="a" style="left:1221.7px;top:93.3px;width:1.6px;height:377.1px;background:#aaaaaa"></div><div class="a" style="left:1279.0px;top:93.3px;width:1.6px;height:377.1px;background:#aaaaaa"></div><div class="a" style="left:1336.4px;top:93.3px;width:1.6px;height:377.1px;background:#aaaaaa"></div><div class="a" style="left:1393.8px;top:93.3px;width:1.6px;height:377.1px;background:#aaaaaa"></div><div class="a" style="left:1451.1px;top:93.3px;width:1.6px;height:377.1px;background:#aaaaaa"></div><div class="a" style="left:1508.5px;top:93.3px;width:1.6px;height:377.1px;background:#aaaaaa"></div><div class="a" style="left:1565.8px;top:93.3px;width:1.6px;height:377.1px;background:#aaaaaa"></div><div class="a" style="left:1623.2px;top:93.3px;width:1.6px;height:377.1px;background:#aaaaaa"></div><div class="a" style="left:1680.6px;top:93.3px;width:1.6px;height:377.1px;background:#aaaaaa"></div><div class="a" style="left:763.3px;top:114.7px;width:975.1px;height:1.6px;background:#aaaaaa"></div><div class="a" style="left:763.3px;top:136.9px;width:975.1px;height:1.6px;background:#aaaaaa"></div><div class="a" style="left:763.3px;top:159.0px;width:975.1px;height:1.6px;background:#aaaaaa"></div><div class="a" style="left:763.3px;top:181.2px;width:975.1px;height:1.6px;background:#aaaaaa"></div><div class="a" style="left:763.3px;top:203.4px;width:975.1px;height:1.6px;background:#aaaaaa"></div><div class="a" style="left:763.3px;top:225.6px;width:975.1px;height:1.6px;background:#aaaaaa"></div><div class="a" style="left:763.3px;top:247.8px;width:975.1px;height:1.6px;background:#aaaaaa"></div><div class="a" style="left:763.3px;top:269.9px;width:975.1px;height:1.6px;background:#aaaaaa"></div><div class="a" style="left:763.3px;top:292.1px;width:975.1px;height:1.6px;background:#aaaaaa"></div><div class="a" style="left:763.3px;top:314.3px;width:975.1px;height:1.6px;background:#aaaaaa"></div><div class="a" style="left:763.3px;top:336.5px;width:975.1px;height:1.6px;background:#aaaaaa"></div><div class="a" style="left:763.3px;top:358.7px;width:975.1px;height:1.6px;background:#aaaaaa"></div><div class="a" style="left:763.3px;top:380.8px;width:975.1px;height:1.6px;background:#aaaaaa"></div><div class="a" style="left:763.3px;top:403.0px;width:975.1px;height:1.6px;background:#aaaaaa"></div><div class="a" style="left:763.3px;top:425.2px;width:975.1px;height:1.6px;background:#aaaaaa"></div><div class="a" style="left:763.3px;top:447.4px;width:975.1px;height:1.6px;background:#aaaaaa"></div><div class="a" style="left:762.5px;top:69px;width:1.6px;height:401.4px;background:#606060"></div><div class="a" style="left:729px;top:470.4px;width:1009.4px;height:1px;background:#888"></div><svg class="a" style="left:533px;top:31px" width="21" height="20" viewBox="0 0 21 20"><rect x="1.5" y="1.5" width="18" height="17" rx="1.5" fill="#f6f6f6" stroke="#7474d8" stroke-width="1.6"/><rect x="2" y="2" width="17" height="4" fill="#8080e0"/><rect x="2" y="6" width="5" height="12" fill="#8080e0"/><path d="M2,3.5 H19 M2,9.5 H19 M2,13.5 H19 M7,6 V18 M13,6 V18" stroke="#b8b8c8" stroke-width="1"/><path d="M3,3.5 H18 M3,9.5 H6.5 M3,13.5 H6.5" stroke="#c0c8ff" stroke-width="1"/><path d="M3,19 H19.5 V3" stroke="#8a8a8a" stroke-width="1.3" fill="none"/></svg><div class="a nw" style="left:556px;top:32px;font-size:16px;line-height:20px;color:#000;transform-origin:0 50%;transform:scaleX(0.94)">Spark Advance</div><svg class="a" style="left:533px;top:61px" width="21" height="20" viewBox="0 0 21 20"><rect x="1.5" y="1.5" width="18" height="17" rx="1.5" fill="#f6f6f6" stroke="#7474d8" stroke-width="1.6"/><rect x="2" y="2" width="17" height="4" fill="#8080e0"/><rect x="2" y="6" width="5" height="12" fill="#8080e0"/><path d="M2,3.5 H19 M2,9.5 H19 M2,13.5 H19 M7,6 V18 M13,6 V18" stroke="#b8b8c8" stroke-width="1"/><path d="M3,3.5 H18 M3,9.5 H6.5 M3,13.5 H6.5" stroke="#c0c8ff" stroke-width="1"/><path d="M3,19 H19.5 V3" stroke="#8a8a8a" stroke-width="1.3" fill="none"/></svg><div class="a nw" style="left:558px;top:62px;font-size:16px;line-height:20px;color:#000;transform-origin:0 50%;transform:scaleX(0.94)">Spark Retard</div><svg class="a" style="left:533px;top:91px" width="21" height="20" viewBox="0 0 21 20"><rect x="1.5" y="1.5" width="18" height="17" rx="1.5" fill="#f6f6f6" stroke="#7474d8" stroke-width="1.6"/><rect x="2" y="2" width="17" height="4" fill="#8080e0"/><rect x="2" y="6" width="5" height="12" fill="#8080e0"/><path d="M2,3.5 H19 M2,9.5 H19 M2,13.5 H19 M7,6 V18 M13,6 V18" stroke="#b8b8c8" stroke-width="1"/><path d="M3,3.5 H18 M3,9.5 H6.5 M3,13.5 H6.5" stroke="#c0c8ff" stroke-width="1"/><path d="M3,19 H19.5 V3" stroke="#8a8a8a" stroke-width="1.3" fill="none"/></svg><div class="a nw" style="left:558px;top:92px;font-size:16px;line-height:20px;color:#000;transform-origin:0 50%;transform:scaleX(0.94)">LT Fuel Trim</div><svg class="a" style="left:533px;top:121px" width="21" height="20" viewBox="0 0 21 20"><rect x="1.5" y="1.5" width="18" height="17" rx="1.5" fill="#f6f6f6" stroke="#7474d8" stroke-width="1.6"/><rect x="2" y="2" width="17" height="4" fill="#8080e0"/><rect x="2" y="6" width="5" height="12" fill="#8080e0"/><path d="M2,3.5 H19 M2,9.5 H19 M2,13.5 H19 M7,6 V18 M13,6 V18" stroke="#b8b8c8" stroke-width="1"/><path d="M3,3.5 H18 M3,9.5 H6.5 M3,13.5 H6.5" stroke="#c0c8ff" stroke-width="1"/><path d="M3,19 H19.5 V3" stroke="#8a8a8a" stroke-width="1.3" fill="none"/></svg><div class="a nw" style="left:558px;top:122px;font-size:16px;line-height:20px;color:#000;transform-origin:0 50%;transform:scaleX(0.94)">ST Fuel Trim</div><svg class="a" style="left:533px;top:151px" width="21" height="20" viewBox="0 0 21 20"><rect x="1.5" y="1.5" width="18" height="17" rx="1.5" fill="#f6f6f6" stroke="#7474d8" stroke-width="1.6"/><rect x="2" y="2" width="17" height="4" fill="#8080e0"/><rect x="2" y="6" width="5" height="12" fill="#8080e0"/><path d="M2,3.5 H19 M2,9.5 H19 M2,13.5 H19 M7,6 V18 M13,6 V18" stroke="#b8b8c8" stroke-width="1"/><path d="M3,3.5 H18 M3,9.5 H6.5 M3,13.5 H6.5" stroke="#c0c8ff" stroke-width="1"/><path d="M3,19 H19.5 V3" stroke="#8a8a8a" stroke-width="1.3" fill="none"/></svg><div class="a nw" style="left:558px;top:152px;font-size:16px;line-height:20px;color:#000;transform-origin:0 50%;transform:scaleX(0.94)">O2 (mv)</div><svg class="a" style="left:533px;top:181px" width="21" height="20" viewBox="0 0 21 20"><rect x="1" y="1" width="19" height="18" rx="1.5" fill="#fafafa" stroke="#888" stroke-width="1.2"/><rect x="1" y="1" width="19" height="2" fill="#7070d8"/><path d="M4,16 V12 M6.5,16 V10 M9,16 V11 M11.5,16 V7 M14,16 V9 M16.5,16 V6" stroke="#333" stroke-width="1.4"/></svg><div class="a nw" style="left:558px;top:182px;font-size:16px;line-height:20px;color:#000;transform-origin:0 50%;transform:scaleX(0.94)">RPM</div><svg class="a" style="left:533px;top:211px" width="21" height="20" viewBox="0 0 21 20"><rect x="1.5" y="1.5" width="18" height="17" rx="1.5" fill="#f6f6f6" stroke="#7474d8" stroke-width="1.6"/><rect x="2" y="2" width="17" height="4" fill="#8080e0"/><rect x="2" y="6" width="5" height="12" fill="#8080e0"/><path d="M2,3.5 H19 M2,9.5 H19 M2,13.5 H19 M7,6 V18 M13,6 V18" stroke="#b8b8c8" stroke-width="1"/><path d="M3,3.5 H18 M3,9.5 H6.5 M3,13.5 H6.5" stroke="#c0c8ff" stroke-width="1"/><path d="M3,19 H19.5 V3" stroke="#8a8a8a" stroke-width="1.3" fill="none"/></svg><div class="a nw" style="left:558px;top:212px;font-size:16px;line-height:20px;color:#000;transform-origin:0 50%;transform:scaleX(0.94)">LTFT Bank 1</div><svg class="a" style="left:533px;top:241px" width="21" height="20" viewBox="0 0 21 20"><rect x="1.5" y="1.5" width="18" height="17" rx="1.5" fill="#f6f6f6" stroke="#7474d8" stroke-width="1.6"/><rect x="2" y="2" width="17" height="4" fill="#8080e0"/><rect x="2" y="6" width="5" height="12" fill="#8080e0"/><path d="M2,3.5 H19 M2,9.5 H19 M2,13.5 H19 M7,6 V18 M13,6 V18" stroke="#b8b8c8" stroke-width="1"/><path d="M3,3.5 H18 M3,9.5 H6.5 M3,13.5 H6.5" stroke="#c0c8ff" stroke-width="1"/><path d="M3,19 H19.5 V3" stroke="#8a8a8a" stroke-width="1.3" fill="none"/></svg><div class="a nw" style="left:558px;top:242px;font-size:16px;line-height:20px;color:#000;transform-origin:0 50%;transform:scaleX(0.94)">LTFT Bank 2</div><svg class="a" style="left:533px;top:271px" width="21" height="20" viewBox="0 0 21 20"><rect x="1.5" y="1.5" width="18" height="17" rx="1.5" fill="#f6f6f6" stroke="#7474d8" stroke-width="1.6"/><rect x="2" y="2" width="17" height="4" fill="#8080e0"/><rect x="2" y="6" width="5" height="12" fill="#8080e0"/><path d="M2,3.5 H19 M2,9.5 H19 M2,13.5 H19 M7,6 V18 M13,6 V18" stroke="#b8b8c8" stroke-width="1"/><path d="M3,3.5 H18 M3,9.5 H6.5 M3,13.5 H6.5" stroke="#c0c8ff" stroke-width="1"/><path d="M3,19 H19.5 V3" stroke="#8a8a8a" stroke-width="1.3" fill="none"/></svg><div class="a nw" style="left:558px;top:272px;font-size:16px;line-height:20px;color:#000;transform-origin:0 50%;transform:scaleX(0.94)">Retard</div><svg class="a" style="left:533px;top:301px" width="21" height="20" viewBox="0 0 21 20"><rect x="1.5" y="1.5" width="18" height="17" rx="1.5" fill="#f6f6f6" stroke="#7474d8" stroke-width="1.6"/><rect x="2" y="2" width="17" height="4" fill="#8080e0"/><rect x="2" y="6" width="5" height="12" fill="#8080e0"/><path d="M2,3.5 H19 M2,9.5 H19 M2,13.5 H19 M7,6 V18 M13,6 V18" stroke="#b8b8c8" stroke-width="1"/><path d="M3,3.5 H18 M3,9.5 H6.5 M3,13.5 H6.5" stroke="#c0c8ff" stroke-width="1"/><path d="M3,19 H19.5 V3" stroke="#8a8a8a" stroke-width="1.3" fill="none"/><path d="M1,5 V1 H5 M16,1 H20 V5 M1,15 V19 H5 M16,19 H20 V15" stroke="#e02020" stroke-width="1.4" fill="none"/></svg><div class="a nw" style="left:558px;top:302px;font-size:16px;line-height:20px;color:#000;transform-origin:0 50%;transform:scaleX(0.94)">TFT</div><div class="a" style="left:531px;top:329px;width:134px;height:26px;border:1.5px solid #1e7ad8"></div><svg class="a" style="left:533px;top:331px" width="21" height="20" viewBox="0 0 21 20"><rect x="1.5" y="1.5" width="18" height="17" rx="1.5" fill="#f6f6f6" stroke="#7474d8" stroke-width="1.6"/><rect x="2" y="2" width="17" height="4" fill="#8080e0"/><rect x="2" y="6" width="5" height="12" fill="#8080e0"/><path d="M2,3.5 H19 M2,9.5 H19 M2,13.5 H19 M7,6 V18 M13,6 V18" stroke="#b8b8c8" stroke-width="1"/><path d="M3,3.5 H18 M3,9.5 H6.5 M3,13.5 H6.5" stroke="#c0c8ff" stroke-width="1"/><path d="M3,19 H19.5 V3" stroke="#8a8a8a" stroke-width="1.3" fill="none"/></svg><div class="a nw" style="left:558px;top:332px;font-size:16px;line-height:20px;color:#000;transform-origin:0 50%;transform:scaleX(0.94)">ST Fuel Trim</div><svg class="a" style="left:533px;top:361px" width="21" height="20" viewBox="0 0 21 20"><rect x="1.5" y="1.5" width="18" height="17" rx="1.5" fill="#f6f6f6" stroke="#7474d8" stroke-width="1.6"/><rect x="2" y="2" width="17" height="4" fill="#8080e0"/><rect x="2" y="6" width="5" height="12" fill="#8080e0"/><path d="M2,3.5 H19 M2,9.5 H19 M2,13.5 H19 M7,6 V18 M13,6 V18" stroke="#b8b8c8" stroke-width="1"/><path d="M3,3.5 H18 M3,9.5 H6.5 M3,13.5 H6.5" stroke="#c0c8ff" stroke-width="1"/><path d="M3,19 H19.5 V3" stroke="#8a8a8a" stroke-width="1.3" fill="none"/></svg><div class="a nw" style="left:558px;top:362px;font-size:16px;line-height:20px;color:#000;transform-origin:0 50%;transform:scaleX(0.94)">LT Fuel Trim</div><svg class="a" style="left:533px;top:391px" width="21" height="20" viewBox="0 0 21 20"><rect x="1.5" y="1.5" width="18" height="17" rx="1.5" fill="#f6f6f6" stroke="#7474d8" stroke-width="1.6"/><rect x="2" y="2" width="17" height="4" fill="#8080e0"/><rect x="2" y="6" width="5" height="12" fill="#8080e0"/><path d="M2,3.5 H19 M2,9.5 H19 M2,13.5 H19 M7,6 V18 M13,6 V18" stroke="#b8b8c8" stroke-width="1"/><path d="M3,3.5 H18 M3,9.5 H6.5 M3,13.5 H6.5" stroke="#c0c8ff" stroke-width="1"/><path d="M3,19 H19.5 V3" stroke="#8a8a8a" stroke-width="1.3" fill="none"/></svg><div class="a nw" style="left:558px;top:392px;font-size:16px;line-height:20px;color:#000;transform-origin:0 50%;transform:scaleX(0.94)">New Table</div><svg class="a" style="left:690px;top:28px" width="220" height="32" viewBox="0 -4 220 32"><path d="M11.75,2.8 V19.5 M3.5,11.1 H20" stroke="#000" stroke-width="3.3"/><path d="M33.7,11.3 H50.5" stroke="#000" stroke-width="3.3"/><rect x="57.5" y="-2.6" width="29" height="27.3" fill="none" stroke="#1a7fe0" stroke-width="1.5"/><path d="M65.3,16 L71.5,3.2 L77.7,16 M67.6,11.5 H75.4" stroke="#000" stroke-width="2.3" fill="none" stroke-linejoin="round"/><path d="M98,3 V15.8 H106.5" stroke="#a8a8a8" stroke-width="1.8" fill="none"/><path d="M136.2,5.6 Q134.5,3 131,3 Q125.4,3 125.4,9.5 Q125.4,16 131,16 Q134.5,16 136.2,13.4" stroke="#000" stroke-width="2.3" fill="none"/><path d="M151.7,2.1 V21.2" stroke="#c4c4c4" stroke-width="1.4"/><rect x="155.6" y="-2.6" width="28.9" height="27.4" fill="none" stroke="#0a70d8" stroke-width="1.4"/><path d="M160.9,3.5 V18.4 M177.9,3.5 V18.4" stroke="#a81c1c" stroke-width="2"/><path d="M161.3,12.8 L166.8,6.6 L172.4,16.4 L177.2,7.4" stroke="#1a5ab0" stroke-width="1.9" fill="none"/><path d="M196.1,3.5 V18.4 M202.7,3.5 V18.4" stroke="#c01010" stroke-width="1.9"/><path d="M191.7,13 L196.5,6 L202.7,14.7 L208,5.2" stroke="#1a5ab0" stroke-width="1.9" fill="none"/></svg><div class="a" style="left:0;top:1328px;width:2500px;height:38px;background:#d9d9d9"></div><div class="a" style="left:0;top:1366px;width:2500px;height:26px;background:#f0f0f0"></div><div class="a" style="left:1066px;top:1328px;width:287px;height:37px;background:#fff;border:2px solid #222;border-top-color:#444;border-left-color:#444"></div><svg class="a" style="left:0;top:0" width="2500" height="1392" viewBox="0 0 2500 1392"><polyline points="0,1364.5 8,1364.5 12,1352.5 20,1355 22,1358 78,1358 85,1350 92,1350 97,1354 103,1358 105,1358 108,1352 115,1350 125,1356 130,1358 135,1353 142,1353 150,1358 155,1358 160,1350 163,1349 170,1350 177,1355 185,1358 220,1358 225,1357 235,1352 260,1351 268,1358 295,1358 297,1359 305,1357 312,1352 322,1347 330,1351 338,1353 347,1352 350,1351 355,1353 365,1353 372,1358 384,1358 388,1351 392,1352 410,1348 420,1349 437,1352 452,1355 457,1358 490,1358 495,1356 500,1359 510,1347 515,1341 520,1348 525,1340 532,1346 545,1340 550,1347 568,1345 590,1345 595,1348 610,1349 625,1352 640,1354 650,1358 675,1358 680,1355 682,1358 700,1350 710,1345 718,1349 730,1346 800,1347 808,1346 820,1347 825,1346 835,1345 843,1343 850,1350 930,1350 945,1351 947,1358 955,1352 965,1350 1030,1350 1037,1357 1043,1355 1065,1348 1068,1347" fill="none" stroke="#ee1c1c" stroke-width="1.6"/><polyline points="1071,1347 1075,1350 1085,1350 1115,1350 1145,1347 1170,1345 1190,1343 1208,1343 1215,1344 1229,1350 1240,1350 1250,1351 1256,1352 1290,1352 1292,1358 1298,1356 1350,1356" fill="none" stroke="#ee1c1c" stroke-width="1.6"/><polyline points="1354,1351 1362,1348 1368,1352 1378,1347 1385,1351 1392,1351 1400,1347 1405,1346 1412,1347 1420,1350 1425,1355 1431,1358 1437,1356 1455,1356 1460,1348 1478,1347 1490,1346 1505,1346 1510,1348 1538,1348 1545,1358 1550,1354 1553,1346 1563,1346 1570,1350 1575,1353 1580,1354 1587,1353 1590,1347 1600,1348 1605,1348 1612,1357 1618,1354 1622,1351 1630,1352 1640,1355 1645,1358 1660,1358 1670,1350 1690,1329 1695,1340 1705,1337 1710,1336 1715,1343 1720,1342 1725,1343 1730,1347 1765,1347 1775,1349 1800,1347 1830,1346 1850,1345 1914,1346 1915,1347 1985,1347 2020,1347 2022,1348 2030,1348 2040,1352 2043,1355 2045,1355 2047,1350 2063,1351 2065,1350 2145,1350 2147,1349 2220,1349 2235,1351 2245,1352 2260,1353 2270,1355 2280,1358 2297,1358 2300,1357 2305,1348 2308,1348 2315,1342 2320,1339 2325,1340 2327,1347 2340,1343 2355,1340 2360,1339 2365,1345 2375,1345 2382,1350 2420,1350 2427,1355 2432,1351 2475,1351 2500,1350" fill="none" stroke="#ee1c1c" stroke-width="1.6"/><path d="M1228.5,1333 V1360" stroke="#1aa0e8" stroke-width="1.6"/><path d="M1204,1343 V1351 M1207,1343 V1351 M1210,1343 V1351 M1204,1347 H1213 M1213,1343 V1351" stroke="#777" stroke-width="1.3"/></svg><div class="a nw" style="left:6px;top:1371px;font-size:15px;color:#000">Created: 11/6/2025 9:07:22 PM</div><div class="a nw" style="left:261px;top:1371px;font-size:15px;color:#000">Duration: 8m 39s</div><div class="a nw" style="left:483px;top:1371px;font-size:15px;color:#000">Zoom: 1m</div><div class="a nw" style="left:627px;top:1371px;font-size:15px;color:#000;transform-origin:0 50%;transform:scaleX(0.955)">Time: 09:11:41.142, 00:04:14.774</div><div class="a" style="left:530px;top:664px;width:169px;height:25px;background:#2b78c8"></div><div class="a nw" style="left:557px;top:667px;font-size:16px;color:#fff;transform-origin:0 50%;transform:scaleX(0.95)">Chart vs. Time</div><svg class="a" style="left:679px;top:670px" width="13" height="13" viewBox="0 0 13 13"><path d="M1.5,1.5 L11.5,11.5 M11.5,1.5 L1.5,11.5" stroke="#e8eef8" stroke-width="1.6"/></svg><svg class="a" style="left:2476px;top:675px" width="12" height="8" viewBox="0 0 12 8"><path d="M1,1 L11,1 L6,6 Z" fill="#e0e0e0"/></svg><div class="a" style="left:530px;top:689px;width:1966px;height:2px;background:#2b78c8"></div><div class="a" style="left:530px;top:691px;width:1966px;height:628px;background:#f4f4f4"></div><div class="a" style="left:532px;top:1310.5px;width:1962px;height:8px;background:#fdfdfd"></div><div class="a" style="left:532px;top:693.1px;width:689px;height:101.5px;background:linear-gradient(to bottom,rgba(0,0,0,0.78) 0%,rgba(0,0,0,0.62) 45%,rgba(0,0,0,0) 100%),linear-gradient(to right,#3c3c3c 0%,#22222a 35%,#121248 65%,#000080 100%)"></div><div class="a" style="left:1222.5px;top:693.1px;width:1128.5px;height:101.5px;background:linear-gradient(to bottom,#000004 0%,#00001c 60%,#000a3a 100%)"></div><div class="a" style="left:2353px;top:693.1px;width:140px;height:101.5px;background:linear-gradient(to bottom,rgba(0,0,0,0.8) 0%,rgba(0,0,0,0.6) 45%,rgba(0,0,0,0) 100%),linear-gradient(to right,#20207e 0%,#16163c 40%,#202024 65%,#3e3e3e 100%)"></div><div class="a" style="left:1222.5px;top:717.8px;width:1128.5px;height:1.3px;background:#5a5a5a"></div><div class="a" style="left:1222.5px;top:743.5px;width:1128.5px;height:1.3px;background:#5a5a5a"></div><div class="a" style="left:1222.5px;top:769.2px;width:1128.5px;height:1.3px;background:#5a5a5a"></div><div class="a" style="left:532px;top:796.2px;width:689px;height:101.5px;background:linear-gradient(to bottom,rgba(0,0,0,0.78) 0%,rgba(0,0,0,0.62) 45%,rgba(0,0,0,0) 100%),linear-gradient(to right,#3c3c3c 0%,#22222a 35%,#121248 65%,#000080 100%)"></div><div class="a" style="left:1222.5px;top:796.2px;width:1128.5px;height:101.5px;background:linear-gradient(to bottom,#000004 0%,#00001c 60%,#000a3a 100%)"></div><div class="a" style="left:2353px;top:796.2px;width:140px;height:101.5px;background:linear-gradient(to bottom,rgba(0,0,0,0.8) 0%,rgba(0,0,0,0.6) 45%,rgba(0,0,0,0) 100%),linear-gradient(to right,#20207e 0%,#16163c 40%,#202024 65%,#3e3e3e 100%)"></div><div class="a" style="left:1222.5px;top:820.9px;width:1128.5px;height:1.3px;background:#5a5a5a"></div><div class="a" style="left:1222.5px;top:846.6px;width:1128.5px;height:1.3px;background:#5a5a5a"></div><div class="a" style="left:1222.5px;top:872.4px;width:1128.5px;height:1.3px;background:#5a5a5a"></div><div class="a" style="left:532px;top:899.3px;width:689px;height:101.5px;background:linear-gradient(to bottom,rgba(0,0,0,0.78) 0%,rgba(0,0,0,0.62) 45%,rgba(0,0,0,0) 100%),linear-gradient(to right,#3c3c3c 0%,#22222a 35%,#121248 65%,#000080 100%)"></div><div class="a" style="left:1222.5px;top:899.3px;width:1128.5px;height:101.5px;background:linear-gradient(to bottom,#000004 0%,#00001c 60%,#000a3a 100%)"></div><div class="a" style="left:2353px;top:899.3px;width:140px;height:101.5px;background:linear-gradient(to bottom,rgba(0,0,0,0.8) 0%,rgba(0,0,0,0.6) 45%,rgba(0,0,0,0) 100%),linear-gradient(to right,#20207e 0%,#16163c 40%,#202024 65%,#3e3e3e 100%)"></div><div class="a" style="left:1222.5px;top:923.9px;width:1128.5px;height:1.3px;background:#5a5a5a"></div><div class="a" style="left:1222.5px;top:949.7px;width:1128.5px;height:1.3px;background:#5a5a5a"></div><div class="a" style="left:1222.5px;top:975.4px;width:1128.5px;height:1.3px;background:#5a5a5a"></div><div class="a" style="left:532px;top:1002.4px;width:689px;height:101.5px;background:linear-gradient(to bottom,rgba(0,0,0,0.78) 0%,rgba(0,0,0,0.62) 45%,rgba(0,0,0,0) 100%),linear-gradient(to right,#3c3c3c 0%,#22222a 35%,#121248 65%,#000080 100%)"></div><div class="a" style="left:1222.5px;top:1002.4px;width:1128.5px;height:101.5px;background:linear-gradient(to bottom,#000004 0%,#00001c 60%,#000a3a 100%)"></div><div class="a" style="left:2353px;top:1002.4px;width:140px;height:101.5px;background:linear-gradient(to bottom,rgba(0,0,0,0.8) 0%,rgba(0,0,0,0.6) 45%,rgba(0,0,0,0) 100%),linear-gradient(to right,#20207e 0%,#16163c 40%,#202024 65%,#3e3e3e 100%)"></div><div class="a" style="left:1222.5px;top:1027.1px;width:1128.5px;height:1.3px;background:#5a5a5a"></div><div class="a" style="left:1222.5px;top:1052.8px;width:1128.5px;height:1.3px;background:#5a5a5a"></div><div class="a" style="left:1222.5px;top:1078.6px;width:1128.5px;height:1.3px;background:#5a5a5a"></div><div class="a" style="left:532px;top:1105.5px;width:689px;height:101.5px;background:linear-gradient(to bottom,rgba(0,0,0,0.78) 0%,rgba(0,0,0,0.62) 45%,rgba(0,0,0,0) 100%),linear-gradient(to right,#3c3c3c 0%,#22222a 35%,#121248 65%,#000080 100%)"></div><div class="a" style="left:1222.5px;top:1105.5px;width:1128.5px;height:101.5px;background:linear-gradient(to bottom,#000004 0%,#00001c 60%,#000a3a 100%)"></div><div class="a" style="left:2353px;top:1105.5px;width:140px;height:101.5px;background:linear-gradient(to bottom,rgba(0,0,0,0.8) 0%,rgba(0,0,0,0.6) 45%,rgba(0,0,0,0) 100%),linear-gradient(to right,#20207e 0%,#16163c 40%,#202024 65%,#3e3e3e 100%)"></div><div class="a" style="left:1222.5px;top:1130.2px;width:1128.5px;height:1.3px;background:#5a5a5a"></div><div class="a" style="left:1222.5px;top:1155.9px;width:1128.5px;height:1.3px;background:#5a5a5a"></div><div class="a" style="left:1222.5px;top:1181.7px;width:1128.5px;height:1.3px;background:#5a5a5a"></div><div class="a" style="left:532px;top:1208.6px;width:689px;height:101.5px;background:linear-gradient(to bottom,rgba(0,0,0,0.78) 0%,rgba(0,0,0,0.62) 45%,rgba(0,0,0,0) 100%),linear-gradient(to right,#3c3c3c 0%,#22222a 35%,#121248 65%,#000080 100%)"></div><div class="a" style="left:1222.5px;top:1208.6px;width:1128.5px;height:101.5px;background:linear-gradient(to bottom,#000004 0%,#00001c 60%,#000a3a 100%)"></div><div class="a" style="left:2353px;top:1208.6px;width:140px;height:101.5px;background:linear-gradient(to bottom,rgba(0,0,0,0.8) 0%,rgba(0,0,0,0.6) 45%,rgba(0,0,0,0) 100%),linear-gradient(to right,#20207e 0%,#16163c 40%,#202024 65%,#3e3e3e 100%)"></div><div class="a" style="left:1222.5px;top:1233.2px;width:1128.5px;height:1.3px;background:#5a5a5a"></div><div class="a" style="left:1222.5px;top:1259.0px;width:1128.5px;height:1.3px;background:#5a5a5a"></div><div class="a" style="left:1222.5px;top:1284.8px;width:1128.5px;height:1.3px;background:#5a5a5a"></div><div class="a nw" style="right:1857px;top:695.1px;font-size:16px;line-height:16px;color:#ff1414;transform-origin:100% 50%;transform:scaleX(0.91);-webkit-text-stroke:0.2px #ff1414">RPM (rpm)</div><div class="a nw" style="right:1861px;top:714.1px;font-size:29px;line-height:29px;color:#ff1414;transform-origin:100% 50%;transform:scaleX(0.95);-webkit-text-stroke:0.3px #ff1414">1,758</div><div class="a nw" style="right:1743px;top:695.1px;font-size:16px;line-height:16px;color:#10ea10;transform-origin:100% 50%;transform:scaleX(0.91);-webkit-text-stroke:0.2px #10ea10">Speed (mph)</div><div class="a nw" style="right:1747px;top:714.1px;font-size:29px;line-height:29px;color:#10ea10;transform-origin:100% 50%;transform:scaleX(0.95);-webkit-text-stroke:0.3px #10ea10">31</div><div class="a nw" style="right:1629px;top:695.1px;font-size:16px;line-height:16px;color:#f2f2f2;transform-origin:100% 50%;transform:scaleX(0.91);-webkit-text-stroke:0.2px #f2f2f2">Throttle (%)</div><div class="a nw" style="right:1633px;top:714.1px;font-size:29px;line-height:29px;color:#f2f2f2;transform-origin:100% 50%;transform:scaleX(0.95);-webkit-text-stroke:0.3px #f2f2f2">23.6</div><div class="a nw" style="right:1515px;top:695.1px;font-size:16px;line-height:16px;color:#f2f2f2;transform-origin:100% 50%;transform:scaleX(0.91);-webkit-text-stroke:0.2px #f2f2f2">Throttle (V)</div><div class="a nw" style="right:1519px;top:714.1px;font-size:29px;line-height:29px;color:#f2f2f2;transform-origin:100% 50%;transform:scaleX(0.95);-webkit-text-stroke:0.3px #f2f2f2">0.425</div><div class="a nw" style="right:1401px;top:695.1px;font-size:16px;line-height:16px;color:#f2f2f2;transform-origin:100% 50%;transform:scaleX(0.91);-webkit-text-stroke:0.2px #f2f2f2">EQ Cmd (λ)</div><div class="a nw" style="right:1285px;top:695.1px;font-size:16px;line-height:16px;color:#f2f2f2;transform-origin:100% 50%;transform:scaleX(0.91);-webkit-text-stroke:0.2px #f2f2f2">FA Des</div><div class="a nw" style="right:1289px;top:714.1px;font-size:29px;line-height:29px;color:#f2f2f2;transform-origin:100% 50%;transform:scaleX(0.95);-webkit-text-stroke:0.3px #f2f2f2">0.0695</div><div class="a nw" style="right:1857px;top:798.2px;font-size:16px;line-height:16px;color:#10e6f4;transform-origin:100% 50%;transform:scaleX(0.91);-webkit-text-stroke:0.2px #10e6f4">MAT (°F)</div><div class="a nw" style="right:1861px;top:817.2px;font-size:29px;line-height:29px;color:#10e6f4;transform-origin:100% 50%;transform:scaleX(0.95);-webkit-text-stroke:0.3px #10e6f4">115</div><div class="a nw" style="right:1743px;top:798.2px;font-size:16px;line-height:16px;color:#ff24ff;transform-origin:100% 50%;transform:scaleX(0.91);-webkit-text-stroke:0.2px #ff24ff">MAP (kPa)</div><div class="a nw" style="right:1747px;top:817.2px;font-size:29px;line-height:29px;color:#ff24ff;transform-origin:100% 50%;transform:scaleX(0.95);-webkit-text-stroke:0.3px #ff24ff">53.1</div><div class="a nw" style="right:1629px;top:798.2px;font-size:16px;line-height:16px;color:#10ea10;transform-origin:100% 50%;transform:scaleX(0.91);-webkit-text-stroke:0.2px #10ea10">O2 (mV)</div><div class="a nw" style="right:1633px;top:817.2px;font-size:29px;line-height:29px;color:#10ea10;transform-origin:100% 50%;transform:scaleX(0.95);-webkit-text-stroke:0.3px #10ea10">88</div><div class="a nw" style="right:1515px;top:798.2px;font-size:16px;line-height:16px;color:#f2f2f2;transform-origin:100% 50%;transform:scaleX(0.91);-webkit-text-stroke:0.2px #f2f2f2">IAT (°F)</div><div class="a nw" style="right:1519px;top:817.2px;font-size:29px;line-height:29px;color:#f2f2f2;transform-origin:100% 50%;transform:scaleX(0.95);-webkit-text-stroke:0.3px #f2f2f2">59</div><div class="a nw" style="right:1401px;top:798.2px;font-size:16px;line-height:16px;color:#f2f2f2;transform-origin:100% 50%;transform:scaleX(0.91);-webkit-text-stroke:0.2px #f2f2f2">Air Temp (°F)</div><div class="a nw" style="right:1405px;top:817.2px;font-size:29px;line-height:29px;color:#f2f2f2;transform-origin:100% 50%;transform:scaleX(0.95);-webkit-text-stroke:0.3px #f2f2f2">43</div><div class="a nw" style="right:1285px;top:798.2px;font-size:16px;line-height:16px;color:#f2f2f2;transform-origin:100% 50%;transform:scaleX(0.91);-webkit-text-stroke:0.2px #f2f2f2">ECT (°F)</div><div class="a nw" style="right:1289px;top:817.2px;font-size:29px;line-height:29px;color:#f2f2f2;transform-origin:100% 50%;transform:scaleX(0.95);-webkit-text-stroke:0.3px #f2f2f2">199</div><div class="a nw" style="right:1857px;top:901.3px;font-size:16px;line-height:16px;color:#ff1414;transform-origin:100% 50%;transform:scaleX(0.91);-webkit-text-stroke:0.2px #ff1414">VE Cyl Air (g)</div><div class="a nw" style="right:1743px;top:901.3px;font-size:16px;line-height:16px;color:#f2f2f2;transform-origin:100% 50%;transform:scaleX(0.91);-webkit-text-stroke:0.2px #f2f2f2">Spark (°)</div><div class="a nw" style="right:1747px;top:920.3px;font-size:29px;line-height:29px;color:#f2f2f2;transform-origin:100% 50%;transform:scaleX(0.95);-webkit-text-stroke:0.3px #f2f2f2">42.0</div><div class="a nw" style="right:1629px;top:901.3px;font-size:16px;line-height:16px;color:#10ea10;transform-origin:100% 50%;transform:scaleX(0.91);-webkit-text-stroke:0.2px #10ea10">TPS (%)</div><div class="a nw" style="right:1633px;top:920.3px;font-size:29px;line-height:29px;color:#10ea10;transform-origin:100% 50%;transform:scaleX(0.95);-webkit-text-stroke:0.3px #10ea10">23.6</div><div class="a nw" style="right:1515px;top:901.3px;font-size:16px;line-height:16px;color:#f2f2f2;transform-origin:100% 50%;transform:scaleX(0.91);-webkit-text-stroke:0.2px #f2f2f2">Cat Temp (°F)</div><div class="a nw" style="right:1519px;top:920.3px;font-size:29px;line-height:29px;color:#f2f2f2;transform-origin:100% 50%;transform:scaleX(0.95);-webkit-text-stroke:0.3px #f2f2f2">1,249</div><div class="a nw" style="right:1857px;top:1004.4px;font-size:16px;line-height:16px;color:#ff1414;transform-origin:100% 50%;transform:scaleX(0.91);-webkit-text-stroke:0.2px #ff1414">INJ Cyl 1 (ms)</div><div class="a nw" style="right:1743px;top:1004.4px;font-size:16px;line-height:16px;color:#7c6cf0;transform-origin:100% 50%;transform:scaleX(0.91);-webkit-text-stroke:0.2px #7c6cf0">O2 B1S1 (mV)</div><div class="a nw" style="right:1747px;top:1023.4px;font-size:29px;line-height:29px;color:#7c6cf0;transform-origin:100% 50%;transform:scaleX(0.95);-webkit-text-stroke:0.3px #7c6cf0">58</div><div class="a nw" style="right:1629px;top:1004.4px;font-size:16px;line-height:16px;color:#ff9414;transform-origin:100% 50%;transform:scaleX(0.91);-webkit-text-stroke:0.2px #ff9414">Injector (ms)</div><div class="a nw" style="right:1633px;top:1023.4px;font-size:29px;line-height:29px;color:#ff9414;transform-origin:100% 50%;transform:scaleX(0.95);-webkit-text-stroke:0.3px #ff9414">5.2</div><div class="a nw" style="right:1515px;top:1004.4px;font-size:16px;line-height:16px;color:#10e6f4;transform-origin:100% 50%;transform:scaleX(0.91);-webkit-text-stroke:0.2px #10e6f4">O2 B2S1 (mV)</div><div class="a nw" style="right:1519px;top:1023.4px;font-size:29px;line-height:29px;color:#10e6f4;transform-origin:100% 50%;transform:scaleX(0.95);-webkit-text-stroke:0.3px #10e6f4">118</div><div class="a nw" style="right:1857px;top:1107.5px;font-size:16px;line-height:16px;color:#ff1414;transform-origin:100% 50%;transform:scaleX(0.91);-webkit-text-stroke:0.2px #ff1414">LTFT B1 (%)</div><div class="a nw" style="right:1861px;top:1126.5px;font-size:29px;line-height:29px;color:#ff1414;transform-origin:100% 50%;transform:scaleX(0.95);-webkit-text-stroke:0.3px #ff1414">-3.3</div><div class="a nw" style="right:1743px;top:1107.5px;font-size:16px;line-height:16px;color:#7c6cf0;transform-origin:100% 50%;transform:scaleX(0.91);-webkit-text-stroke:0.2px #7c6cf0">STFT B1 (%)</div><div class="a nw" style="right:1747px;top:1126.5px;font-size:29px;line-height:29px;color:#7c6cf0;transform-origin:100% 50%;transform:scaleX(0.95);-webkit-text-stroke:0.3px #7c6cf0">3.2</div><div class="a nw" style="right:1629px;top:1107.5px;font-size:16px;line-height:16px;color:#ff9414;transform-origin:100% 50%;transform:scaleX(0.91);-webkit-text-stroke:0.2px #ff9414">LTFT B2 (%)</div><div class="a nw" style="right:1633px;top:1126.5px;font-size:29px;line-height:29px;color:#ff9414;transform-origin:100% 50%;transform:scaleX(0.95);-webkit-text-stroke:0.3px #ff9414">-3.1</div><div class="a nw" style="right:1515px;top:1107.5px;font-size:16px;line-height:16px;color:#10e6f4;transform-origin:100% 50%;transform:scaleX(0.91);-webkit-text-stroke:0.2px #10e6f4">STFT B2 (%)</div><div class="a nw" style="right:1519px;top:1126.5px;font-size:29px;line-height:29px;color:#10e6f4;transform-origin:100% 50%;transform:scaleX(0.95);-webkit-text-stroke:0.3px #10e6f4">3.3</div><div class="a nw" style="right:1284px;top:1107.5px;font-size:16px;line-height:16px;color:#f2f2f2;transform-origin:100% 50%;transform:scaleX(0.91)">New Series New Series (lb/h)</div><div class="a nw" style="right:1857px;top:1210.6px;font-size:16px;line-height:16px;color:#f2f2f2;transform-origin:100% 50%;transform:scaleX(0.91);-webkit-text-stroke:0.2px #f2f2f2">Inj DC (%)</div><div class="a nw" style="right:1861px;top:1229.6px;font-size:29px;line-height:29px;color:#f2f2f2;transform-origin:100% 50%;transform:scaleX(0.95);-webkit-text-stroke:0.3px #f2f2f2">7.6</div><div class="a nw" style="right:1743px;top:1210.6px;font-size:16px;line-height:16px;color:#f2f2f2;transform-origin:100% 50%;transform:scaleX(0.91);-webkit-text-stroke:0.2px #f2f2f2">Injector Bank 1 (ms)</div><div class="a nw" style="left:2355.0px;top:696.1px;font-size:16px;line-height:16px;color:#ff1414;transform-origin:0 50%;transform:scaleX(0.91)">6,000</div><div class="a nw" style="left:2397.0px;top:696.1px;font-size:16px;line-height:16px;color:#10ea10;transform-origin:0 50%;transform:scaleX(0.91)">160</div><div class="a nw" style="left:2426.0px;top:696.1px;font-size:16px;line-height:16px;color:#f2f2f2;transform-origin:0 50%;transform:scaleX(0.91)">100</div><div class="a nw" style="left:2455.0px;top:696.1px;font-size:16px;line-height:16px;color:#f2f2f2;transform-origin:0 50%;transform:scaleX(0.91)">5.0</div><div class="a nw" style="left:2355.0px;top:713.1px;font-size:16px;line-height:16px;color:#f2f2f2;transform-origin:0 50%;transform:scaleX(0.91)">1.5</div><div class="a nw" style="left:2397.0px;top:713.1px;font-size:16px;line-height:16px;color:#f2f2f2;transform-origin:0 50%;transform:scaleX(0.91)">1.0</div><div class="a nw" style="left:2355.0px;top:730.1px;font-size:16px;line-height:16px;color:#ff1414;transform-origin:0 50%;transform:scaleX(0.91)">3,000</div><div class="a nw" style="left:2397.0px;top:730.1px;font-size:16px;line-height:16px;color:#10ea10;transform-origin:0 50%;transform:scaleX(0.91)">80</div><div class="a nw" style="left:2426.0px;top:730.1px;font-size:16px;line-height:16px;color:#f2f2f2;transform-origin:0 50%;transform:scaleX(0.91)">50</div><div class="a nw" style="left:2455.0px;top:730.1px;font-size:16px;line-height:16px;color:#f2f2f2;transform-origin:0 50%;transform:scaleX(0.91)">2.5</div><div class="a nw" style="left:2355.0px;top:747.1px;font-size:16px;line-height:16px;color:#f2f2f2;transform-origin:0 50%;transform:scaleX(0.91)">1.0</div><div class="a nw" style="left:2397.0px;top:747.1px;font-size:16px;line-height:16px;color:#f2f2f2;transform-origin:0 50%;transform:scaleX(0.91)">0.5</div><div class="a nw" style="left:2355.0px;top:764.1px;font-size:16px;line-height:16px;color:#ff1414;transform-origin:0 50%;transform:scaleX(0.91)">0</div><div class="a nw" style="left:2397.0px;top:764.1px;font-size:16px;line-height:16px;color:#10ea10;transform-origin:0 50%;transform:scaleX(0.91)">0</div><div class="a nw" style="left:2426.0px;top:764.1px;font-size:16px;line-height:16px;color:#f2f2f2;transform-origin:0 50%;transform:scaleX(0.91)">0</div><div class="a nw" style="left:2455.0px;top:764.1px;font-size:16px;line-height:16px;color:#f2f2f2;transform-origin:0 50%;transform:scaleX(0.91)">0.0</div><div class="a nw" style="left:2355.0px;top:781.1px;font-size:16px;line-height:16px;color:#f2f2f2;transform-origin:0 50%;transform:scaleX(0.91)">0.5</div><div class="a nw" style="left:2397.0px;top:781.1px;font-size:16px;line-height:16px;color:#f2f2f2;transform-origin:0 50%;transform:scaleX(0.91)">0.0</div><div class="a nw" style="left:2355.0px;top:799.2px;font-size:16px;line-height:16px;color:#10e6f4;transform-origin:0 50%;transform:scaleX(0.91)">200</div><div class="a nw" style="left:2383.0px;top:799.2px;font-size:16px;line-height:16px;color:#ff24ff;transform-origin:0 50%;transform:scaleX(0.91)">105.0</div><div class="a nw" style="left:2426.0px;top:799.2px;font-size:16px;line-height:16px;color:#10ea10;transform-origin:0 50%;transform:scaleX(0.91)">1,000</div><div class="a nw" style="left:2466.0px;top:799.2px;font-size:16px;line-height:16px;color:#f2f2f2;transform-origin:0 50%;transform:scaleX(0.91)">100</div><div class="a nw" style="left:2355.0px;top:816.2px;font-size:16px;line-height:16px;color:#f2f2f2;transform-origin:0 50%;transform:scaleX(0.91)">100</div><div class="a nw" style="left:2383.0px;top:816.2px;font-size:16px;line-height:16px;color:#f2f2f2;transform-origin:0 50%;transform:scaleX(0.91)">240</div><div class="a nw" style="left:2355.0px;top:833.2px;font-size:16px;line-height:16px;color:#10e6f4;transform-origin:0 50%;transform:scaleX(0.91)">115</div><div class="a nw" style="left:2383.0px;top:833.2px;font-size:16px;line-height:16px;color:#ff24ff;transform-origin:0 50%;transform:scaleX(0.91)">52.5</div><div class="a nw" style="left:2426.0px;top:833.2px;font-size:16px;line-height:16px;color:#10ea10;transform-origin:0 50%;transform:scaleX(0.91)">500</div><div class="a nw" style="left:2474.0px;top:833.2px;font-size:16px;line-height:16px;color:#f2f2f2;transform-origin:0 50%;transform:scaleX(0.91)">65</div><div class="a nw" style="left:2355.0px;top:850.2px;font-size:16px;line-height:16px;color:#f2f2f2;transform-origin:0 50%;transform:scaleX(0.91)">65</div><div class="a nw" style="left:2383.0px;top:850.2px;font-size:16px;line-height:16px;color:#f2f2f2;transform-origin:0 50%;transform:scaleX(0.91)">150</div><div class="a nw" style="left:2355.0px;top:867.2px;font-size:16px;line-height:16px;color:#10e6f4;transform-origin:0 50%;transform:scaleX(0.91)">30</div><div class="a nw" style="left:2383.0px;top:867.2px;font-size:16px;line-height:16px;color:#ff24ff;transform-origin:0 50%;transform:scaleX(0.91)">0.0</div><div class="a nw" style="left:2426.0px;top:867.2px;font-size:16px;line-height:16px;color:#10ea10;transform-origin:0 50%;transform:scaleX(0.91)">0</div><div class="a nw" style="left:2466.0px;top:867.2px;font-size:16px;line-height:16px;color:#f2f2f2;transform-origin:0 50%;transform:scaleX(0.91)">30</div><div class="a nw" style="left:2355.0px;top:884.2px;font-size:16px;line-height:16px;color:#f2f2f2;transform-origin:0 50%;transform:scaleX(0.91)">30</div><div class="a nw" style="left:2383.0px;top:884.2px;font-size:16px;line-height:16px;color:#f2f2f2;transform-origin:0 50%;transform:scaleX(0.91)">60</div><div class="a nw" style="left:2355.0px;top:901.3px;font-size:16px;line-height:16px;color:#ff1414;transform-origin:0 50%;transform:scaleX(0.91)">1.0</div><div class="a nw" style="left:2380.0px;top:901.3px;font-size:16px;line-height:16px;color:#f2f2f2;transform-origin:0 50%;transform:scaleX(0.91)">45.0</div><div class="a nw" style="left:2413.0px;top:901.3px;font-size:16px;line-height:16px;color:#10ea10;transform-origin:0 50%;transform:scaleX(0.91)">100</div><div class="a nw" style="left:2441.0px;top:901.3px;font-size:16px;line-height:16px;color:#f2f2f2;transform-origin:0 50%;transform:scaleX(0.91)">3,000</div><div class="a nw" style="left:2355.0px;top:943.9px;font-size:16px;line-height:16px;color:#ff1414;transform-origin:0 50%;transform:scaleX(0.91)">0.5</div><div class="a nw" style="left:2380.0px;top:943.9px;font-size:16px;line-height:16px;color:#f2f2f2;transform-origin:0 50%;transform:scaleX(0.91)">22.5</div><div class="a nw" style="left:2413.0px;top:943.9px;font-size:16px;line-height:16px;color:#10ea10;transform-origin:0 50%;transform:scaleX(0.91)">50</div><div class="a nw" style="left:2443.0px;top:943.9px;font-size:16px;line-height:16px;color:#f2f2f2;transform-origin:0 50%;transform:scaleX(0.91)">1,500</div><div class="a nw" style="left:2355.0px;top:986.5px;font-size:16px;line-height:16px;color:#ff1414;transform-origin:0 50%;transform:scaleX(0.91)">0.0</div><div class="a nw" style="left:2380.0px;top:986.5px;font-size:16px;line-height:16px;color:#f2f2f2;transform-origin:0 50%;transform:scaleX(0.91)">0.0</div><div class="a nw" style="left:2413.0px;top:986.5px;font-size:16px;line-height:16px;color:#10ea10;transform-origin:0 50%;transform:scaleX(0.91)">0</div><div class="a nw" style="left:2441.0px;top:986.5px;font-size:16px;line-height:16px;color:#f2f2f2;transform-origin:0 50%;transform:scaleX(0.91)">0</div><div class="a nw" style="left:2355.0px;top:1004.4px;font-size:16px;line-height:16px;color:#ff1414;transform-origin:0 50%;transform:scaleX(0.91)">20</div><div class="a nw" style="left:2376.0px;top:1004.4px;font-size:16px;line-height:16px;color:#7c6cf0;transform-origin:0 50%;transform:scaleX(0.91)">1,000</div><div class="a nw" style="left:2418.0px;top:1004.4px;font-size:16px;line-height:16px;color:#ff9414;transform-origin:0 50%;transform:scaleX(0.91)">20</div><div class="a nw" style="left:2439.0px;top:1004.4px;font-size:16px;line-height:16px;color:#10e6f4;transform-origin:0 50%;transform:scaleX(0.91)">1,000</div><div class="a nw" style="left:2355.0px;top:1047.0px;font-size:16px;line-height:16px;color:#ff1414;transform-origin:0 50%;transform:scaleX(0.91)">10</div><div class="a nw" style="left:2376.0px;top:1047.0px;font-size:16px;line-height:16px;color:#7c6cf0;transform-origin:0 50%;transform:scaleX(0.91)">500</div><div class="a nw" style="left:2418.0px;top:1047.0px;font-size:16px;line-height:16px;color:#ff9414;transform-origin:0 50%;transform:scaleX(0.91)">10</div><div class="a nw" style="left:2439.0px;top:1047.0px;font-size:16px;line-height:16px;color:#10e6f4;transform-origin:0 50%;transform:scaleX(0.91)">500</div><div class="a nw" style="left:2355.0px;top:1089.6px;font-size:16px;line-height:16px;color:#ff1414;transform-origin:0 50%;transform:scaleX(0.91)">0</div><div class="a nw" style="left:2376.0px;top:1089.6px;font-size:16px;line-height:16px;color:#7c6cf0;transform-origin:0 50%;transform:scaleX(0.91)">0</div><div class="a nw" style="left:2418.0px;top:1089.6px;font-size:16px;line-height:16px;color:#ff9414;transform-origin:0 50%;transform:scaleX(0.91)">0</div><div class="a nw" style="left:2439.0px;top:1089.6px;font-size:16px;line-height:16px;color:#10e6f4;transform-origin:0 50%;transform:scaleX(0.91)">0</div><div class="a nw" style="left:2355.0px;top:1107.5px;font-size:16px;line-height:16px;color:#ff1414;transform-origin:0 50%;transform:scaleX(0.91)">25</div><div class="a nw" style="left:2376.0px;top:1107.5px;font-size:16px;line-height:16px;color:#7c6cf0;transform-origin:0 50%;transform:scaleX(0.91)">25</div><div class="a nw" style="left:2397.0px;top:1107.5px;font-size:16px;line-height:16px;color:#ff9414;transform-origin:0 50%;transform:scaleX(0.91)">25</div><div class="a nw" style="left:2418.0px;top:1107.5px;font-size:16px;line-height:16px;color:#10e6f4;transform-origin:0 50%;transform:scaleX(0.91)">25</div><div class="a nw" style="left:2355.0px;top:1124.5px;font-size:16px;line-height:16px;color:#f2f2f2;transform-origin:0 50%;transform:scaleX(0.91)">0</div><div class="a nw" style="left:2376.0px;top:1124.5px;font-size:16px;line-height:16px;color:#f2f2f2;transform-origin:0 50%;transform:scaleX(0.91)">0</div><div class="a nw" style="left:2355.0px;top:1141.5px;font-size:16px;line-height:16px;color:#ff1414;transform-origin:0 50%;transform:scaleX(0.91)">0</div><div class="a nw" style="left:2376.0px;top:1141.5px;font-size:16px;line-height:16px;color:#7c6cf0;transform-origin:0 50%;transform:scaleX(0.91)">0</div><div class="a nw" style="left:2397.0px;top:1141.5px;font-size:16px;line-height:16px;color:#ff9414;transform-origin:0 50%;transform:scaleX(0.91)">0</div><div class="a nw" style="left:2418.0px;top:1141.5px;font-size:16px;line-height:16px;color:#10e6f4;transform-origin:0 50%;transform:scaleX(0.91)">0</div><div class="a nw" style="left:2355.0px;top:1158.5px;font-size:16px;line-height:16px;color:#f2f2f2;transform-origin:0 50%;transform:scaleX(0.91)">0</div><div class="a nw" style="left:2376.0px;top:1158.5px;font-size:16px;line-height:16px;color:#f2f2f2;transform-origin:0 50%;transform:scaleX(0.91)">0</div><div class="a nw" style="left:2353.0px;top:1175.5px;font-size:16px;line-height:16px;color:#ff1414;transform-origin:0 50%;transform:scaleX(0.91)">-25</div><div class="a nw" style="left:2374.0px;top:1175.5px;font-size:16px;line-height:16px;color:#7c6cf0;transform-origin:0 50%;transform:scaleX(0.91)">-25</div><div class="a nw" style="left:2395.0px;top:1175.5px;font-size:16px;line-height:16px;color:#ff9414;transform-origin:0 50%;transform:scaleX(0.91)">-25</div><div class="a nw" style="left:2416.0px;top:1175.5px;font-size:16px;line-height:16px;color:#10e6f4;transform-origin:0 50%;transform:scaleX(0.91)">-25</div><div class="a nw" style="left:2355.0px;top:1192.5px;font-size:16px;line-height:16px;color:#f2f2f2;transform-origin:0 50%;transform:scaleX(0.91)">0</div><div class="a nw" style="left:2376.0px;top:1192.5px;font-size:16px;line-height:16px;color:#f2f2f2;transform-origin:0 50%;transform:scaleX(0.91)">0</div><div class="a nw" style="left:2355.0px;top:1210.6px;font-size:16px;line-height:16px;color:#f2f2f2;transform-origin:0 50%;transform:scaleX(0.91)">100</div><div class="a nw" style="left:2383.0px;top:1210.6px;font-size:16px;line-height:16px;color:#f2f2f2;transform-origin:0 50%;transform:scaleX(0.91)">20</div><div class="a nw" style="left:2355.0px;top:1253.2px;font-size:16px;line-height:16px;color:#f2f2f2;transform-origin:0 50%;transform:scaleX(0.91)">50</div><div class="a nw" style="left:2385.0px;top:1253.2px;font-size:16px;line-height:16px;color:#f2f2f2;transform-origin:0 50%;transform:scaleX(0.91)">10</div><div class="a nw" style="left:2355.0px;top:1295.8px;font-size:16px;line-height:16px;color:#f2f2f2;transform-origin:0 50%;transform:scaleX(0.91)">0</div><div class="a nw" style="left:2385.0px;top:1295.8px;font-size:16px;line-height:16px;color:#f2f2f2;transform-origin:0 50%;transform:scaleX(0.91)">0</div><div class="a nw" style="left:1270.0px;width:80px;text-align:center;top:1291px;font-size:16px;line-height:16px;color:#f2f2f2;transform:scaleX(0.91)">21:11:12</div><div class="a nw" style="left:1383.0px;width:80px;text-align:center;top:1291px;font-size:16px;line-height:16px;color:#f2f2f2;transform:scaleX(0.91)">21:11:18</div><div class="a nw" style="left:1496.0px;width:80px;text-align:center;top:1291px;font-size:16px;line-height:16px;color:#f2f2f2;transform:scaleX(0.91)">21:11:24</div><div class="a nw" style="left:1609.0px;width:80px;text-align:center;top:1291px;font-size:16px;line-height:16px;color:#f2f2f2;transform:scaleX(0.91)">21:11:30</div><div class="a nw" style="left:1722.0px;width:80px;text-align:center;top:1291px;font-size:16px;line-height:16px;color:#f2f2f2;transform:scaleX(0.91)">21:11:36</div><div class="a nw" style="left:1835.0px;width:80px;text-align:center;top:1291px;font-size:16px;line-height:16px;color:#f2f2f2;transform:scaleX(0.91)">21:11:42</div><div class="a nw" style="left:1948.0px;width:80px;text-align:center;top:1291px;font-size:16px;line-height:16px;color:#f2f2f2;transform:scaleX(0.91)">21:11:48</div><div class="a nw" style="left:2061.0px;width:80px;text-align:center;top:1291px;font-size:16px;line-height:16px;color:#f2f2f2;transform:scaleX(0.91)">21:11:54</div><div class="a nw" style="left:2174.0px;width:80px;text-align:center;top:1291px;font-size:16px;line-height:16px;color:#f2f2f2;transform:scaleX(0.91)">21:12:00</div><svg class="a" style="left:0;top:0" width="2500" height="1392" viewBox="0 0 2500 1392"><defs><clipPath id="cp0"><rect x="1222.5" y="693.1" width="1128.5" height="101.5"/></clipPath><clipPath id="cp1"><rect x="1222.5" y="796.2" width="1128.5" height="101.5"/></clipPath><clipPath id="cp2"><rect x="1222.5" y="899.3" width="1128.5" height="101.5"/></clipPath><clipPath id="cp3"><rect x="1222.5" y="1002.4" width="1128.5" height="101.5"/></clipPath><clipPath id="cp4"><rect x="1222.5" y="1105.5" width="1128.5" height="101.5"/></clipPath><clipPath id="cp5"><rect x="1222.5" y="1208.6" width="1128.5" height="101.5"/></clipPath></defs><polyline clip-path="url(#cp0)" points="1221,761.8 1255.1,761.8 1257,763.4 1269.2,763.4 1271.8,764.6 1275.6,762.7 1278.2,764.6 1309.5,764.6 1312.1,766.2 1378,766.2 1400,765 1493.6,759.8 1602,754.7 1705,751.3 1757,751.3 1808,758.5 1840,763 1860.8,765 1902,767 1964.8,769.2 1989.8,772 2089.6,772 2098,778.6 2108,786.5 2118.7,779.6 2127,778.2 2139.5,779.6 2206,780.7 2310,781.7 2318,776.5 2326.7,774.9 2352,769" fill="none" stroke="#ff1414" stroke-width="2.6" stroke-linejoin="round" stroke-linecap="round"/><polyline clip-path="url(#cp0)" points="1221,775.8 1225.7,773.9 1262.8,773.9 1265.4,775.5 1297.4,775.5 1298.6,776.8 1378,776.8 1429,775.8 1473,774 1550,770 1653.6,768 1731,767 1782.6,769.4 1834,774 1860,775.3 1881.6,776.5 1923,778.6 1948,779.6 2089.6,781 2152,781 2214,784.4 2297.6,792.1 2318,789 2352,787.3" fill="none" stroke="#10ea10" stroke-width="2.6" stroke-linejoin="round" stroke-linecap="round"/><polyline clip-path="url(#cp0)" points="1221,749.6 1229.5,749.6 1232.7,756 1239.1,763 1244.9,765.6 1247.4,768.8 1249.4,781 1254.5,782.2 1267.9,782.6 1273.7,775.8 1282,774.2 1285.2,773.3 1298,777.1 1309.5,777.8 1312.1,779 1330,779 1339,782.9 1362.6,782.9 1364.6,781.3 1367.1,782.9 1374.2,781 1378,782.9 1839,782.5 1852,775.3 1860.8,771.3 1881.6,765 1900.3,760.3 1921,760.3 1931.5,767.2 1946,777.6 1964.8,780.3 1969,782.8 2089.6,781.7 2310,781 2320.5,776.5 2324.6,778.6 2352,778.6" fill="none" stroke="#f0f0f0" stroke-width="2.6" stroke-linejoin="round" stroke-linecap="round"/><polyline clip-path="url(#cp0)" points="1221,765 1228.9,765 1231.4,768.2 1237.2,774.6 1241,778.4 1244.9,779.7 1247.4,784.8 1250,796" fill="none" stroke="#f0f0f0" stroke-width="2.6" stroke-linejoin="round" stroke-linecap="round"/><polyline clip-path="url(#cp0)" points="1221,789 2352,789" fill="none" stroke="#f0f0f0" stroke-width="2.6" stroke-linejoin="round" stroke-linecap="round"/><polyline clip-path="url(#cp0)" points="1270.5,796 1274.3,788.6 1282,787 1289.7,787.7 1298,789.6 1307.6,791.5 1323.6,792.8 1337.7,794.7 1842,795 1860.8,787 1881.6,779.6 1900.3,774.9 1921,774.9 1931.5,780.7 1948,792.1 1964.8,794.2 2316,794 2325,791 2352,791" fill="none" stroke="#f0f0f0" stroke-width="2.6" stroke-linejoin="round" stroke-linecap="round"/><polyline clip-path="url(#cp1)" points="1221,818 1238.4,818 1242,819.4 1323,819.4 1324.9,820.8 2352,820.5" fill="none" stroke="#f0f0f0" stroke-width="2.6" stroke-linejoin="round" stroke-linecap="round"/><polyline clip-path="url(#cp1)" points="1221,862.6 1224.6,863 1227.4,865.4 1321.2,865.4 1324,862.2 1398.5,862.2 1401.2,859.9 1501,860 1505,856.6 1840,856.9 1872.2,857.4 1876.4,860 1899.3,860 1902.4,862.1 1922.2,862.1 1926.3,865.2 2000.2,865.2 2004.3,862.1 2083.4,862.1 2087.5,859.5 2200,860 2202.1,857.2 2352,857.2" fill="none" stroke="#f0f0f0" stroke-width="2.6" stroke-linejoin="round" stroke-linecap="round"/><polyline clip-path="url(#cp1)" points="1221,882.9 1594,881.6 1599,877.2 1780,878 1782.6,880.6 1840,880.8 1939.8,880.8 1944,883.4 2352,883.4" fill="none" stroke="#f0f0f0" stroke-width="2.6" stroke-linejoin="round" stroke-linecap="round"/><polyline clip-path="url(#cp1)" points="1221,858.5 1327.6,857.6 1329.5,855.7 1339.6,855.3 1342.4,853.9 1369,854.3 1371.8,852.5 1399.4,852.5 1401.7,851.3 1473,850 1524.6,848.8 1550,847.5 1840,848 1860.8,847 1875.4,850.6 1904.5,851.2 1908.6,853.8 1973.1,855.3 1975.2,853.8 2001.2,853.8 2004.3,852.2 2025.1,852.2 2029.3,850.6 2084.4,851.2 2087.5,849.6 2116.8,851.2 2124.1,848.6 2169.9,848.6 2176.1,847 2186.5,846 2199,844.4 2219.8,843.9 2238.5,842.3 2263.5,840.8 2311.3,838.7 2332.1,840.8 2352,846.5" fill="none" stroke="#10e6f4" stroke-width="2.6" stroke-linejoin="round" stroke-linecap="round"/><polyline clip-path="url(#cp1)" points="1221,807.4 1229,807.4 1233.8,809.7 1240.2,816.2 1245.8,822.6 1250.4,859.4 1254,875 1258.6,877.8 1269.7,877.8 1275.2,863 1280.7,853.9 1286.2,851.1 1291.8,852 1297.3,855.7 1302.8,859.4 1308.3,861.2 1321.2,863 1324.9,865.8 1327.6,867.7 1332.2,868.6 1339.6,875 1343.3,876.9 1445.4,877.8 1452,879.8 1486,879 1591.7,881.6 1602,878 1777.4,879 1782.6,881 1839.4,877 1844.2,876.1 1848.3,867.8 1854.6,856.4 1860.8,847 1866,829.3 1874.3,824.1 1883.7,815.8 1892,812.7 1904.5,810.1 1923.2,810.6 1931.5,818.9 1939.8,834.5 1948.2,857.4 1956.5,863.6 1966.9,866.8 1974.2,874 2087.5,874 2093.8,870.9 2101.2,865.7 2108.5,855.3 2114.8,857.4 2122,866.8 2128.3,868.8 2138.7,866.8 2163.6,865.7 2167.8,864.7 2215.6,865.7 2219.8,864.2 2309.2,864.2 2318.6,851.2 2323.8,850.1 2332.1,854.3 2340.5,856.4 2352,859.5" fill="none" stroke="#ff24ff" stroke-width="2.6" stroke-linejoin="round" stroke-linecap="round"/><polyline clip-path="url(#cp1)" points="1222.3,877.8 1224.1,821.7 1226.4,820.8 1228.7,833.6 1231,821.7 1234.7,889.8 1238.4,819.8 1242,820.8 1246.7,891.6 1250.4,815.2 1254,807 1259.6,809.7 1264.2,816.2 1271.5,861.2 1275.2,896.2 1278,895.3 1280.3,847.4 1282.6,894.4 1286.2,887.9 1289.9,894.4 1292.7,887 1294.5,829 1296.4,892.5 1302.3,816.2 1306.5,877.8 1307.4,891.6 1312,827.2 1316.6,838.2 1320.3,857.6 1326.7,825.4 1331.3,830 1335.9,889.8 1339.6,821.7 1345.1,812.5 1353.4,815.2 1358,817 1360.8,868.6 1363.5,891.6 1369,892.5 1370.9,896.2 1372.7,871.4 1375.5,866.8 1377.8,897.1 1380,873.2 1382.8,890.7 1385.6,829 1388.3,887 1392,832.7 1393.9,875 1396.2,836.4 1398.5,896.2 1401.2,852 1404,893.4 1409.5,896.7 1438,896.7 1439,797 1439.9,896.7 1440.5,898" fill="none" stroke="#10ea10" stroke-width="2.6" stroke-linejoin="round" stroke-linecap="round"/><polyline clip-path="url(#cp1)" points="1848.0,898.0 1849.2,847.5 1850.4,797.0 1851.4,897.0 1852.5,895.7 1853.5,894.4 1854.5,893.0 1855.6,891.7 1856.6,891.5 1857.7,891.3 1858.7,891.1 1859.8,890.9 1860.8,890.7 1861.8,891.0 1862.9,891.2 1864.0,891.5 1865.0,891.7 1865.9,876.5 1866.8,861.3 1867.8,846.2 1868.7,831.0 1869.6,815.8 1870.5,829.9 1871.5,844.1 1872.4,858.2 1873.4,872.4 1874.3,886.5 1875.3,888.6 1876.4,890.7 1877.4,892.8 1878.5,877.7 1879.5,862.6 1880.5,878.7 1881.6,894.8 1882.5,877.8 1883.5,860.7 1884.4,843.7 1885.4,826.6 1886.3,809.6 1887.2,825.4 1888.2,841.2 1889.1,857.0 1890.1,872.8 1891.0,888.6 1892.2,878.2 1893.4,867.8 1894.6,857.4 1895.7,874.5 1896.7,891.7 1897.7,879.1 1898.6,866.4 1899.6,853.8 1900.5,841.1 1901.5,828.4 1902.4,815.8 1903.4,816.5 1904.5,817.2 1905.5,817.9 1906.5,823.7 1907.5,829.5 1908.5,835.2 1909.5,841.0 1910.4,846.8 1911.4,852.6 1912.4,858.3 1913.4,864.1 1914.4,869.9 1915.4,862.2 1916.3,854.4 1917.3,846.7 1918.2,839.0 1919.2,831.3 1920.1,823.5 1921.1,815.8 1922.0,815.7 1922.9,815.5 1923.8,815.4 1924.7,815.2 1925.6,815.1 1926.5,814.9 1927.4,814.8 1928.4,829.8 1929.5,844.9 1930.5,860.0 1931.5,875.0 1932.5,854.9 1933.6,834.9 1934.6,814.8 1935.6,814.4 1936.7,814.0 1937.7,813.5 1938.8,813.1 1939.8,812.7 1940.8,812.2 1941.9,811.7 1942.9,811.2 1944.0,810.6 1945.0,810.1 1946.1,809.6 1947.1,810.2 1948.2,810.8 1949.2,811.5 1950.3,812.1 1951.3,812.7 1952.3,828.7 1953.4,844.7 1954.4,860.8 1955.5,876.8 1956.5,892.8 1957.5,892.9 1958.4,893.0 1959.3,893.0 1960.3,893.1 1961.2,893.2 1962.2,893.3 1963.2,893.4 1964.1,893.5 1965.1,893.5 1966.0,893.6 1967.0,893.7 1967.9,893.8 1969.0,873.8 1970.0,853.8 1971.0,833.7 1972.1,813.7 1973.0,813.9 1973.9,814.2 1974.9,814.4 1975.8,814.6 1976.7,814.9 1977.6,815.1 1978.6,815.3 1979.5,815.6 1980.4,815.8 1981.4,822.5 1982.5,829.1 1983.5,835.8 1984.6,842.4 1985.6,849.1 1986.6,858.0 1987.7,867.0 1988.7,875.9 1989.8,884.9 1990.8,893.8 1991.8,893.9 1992.7,894.0 1993.7,894.0 1994.6,894.1 1995.5,894.2 1996.5,894.3 1997.5,894.4 1998.4,894.5 1999.3,894.5 2000.3,894.6 2001.2,894.7 2002.2,894.8 2003.1,894.6 2004.1,894.5 2005.0,894.3 2005.9,894.1 2006.9,894.0 2007.8,893.8 2008.7,893.7 2009.7,893.5 2010.6,893.3 2011.5,893.2 2012.4,893.0 2013.4,892.8 2014.3,892.7 2015.2,892.5 2016.2,892.4 2017.1,892.2 2018.0,892.0 2019.0,891.9 2019.9,891.7 2020.9,878.4 2022.0,865.1 2023.0,851.8 2024.1,838.5 2025.1,825.2 2026.0,835.4 2026.9,845.7 2027.8,855.9 2028.7,866.2 2029.6,876.4 2030.5,886.7 2031.4,896.9 2032.4,873.7 2033.5,850.4 2034.5,827.2 2035.5,850.1 2036.6,873.0 2037.6,895.9 2038.9,869.9 2040.2,843.9 2041.1,854.3 2042.1,864.7 2043.0,875.1 2044.0,885.5 2044.9,895.9 2045.8,896.0 2046.7,896.1 2047.6,896.2 2048.5,896.3 2049.4,896.4 2050.3,896.5 2051.2,896.6 2052.1,896.7 2053.0,896.8 2053.9,896.9 2054.8,897.0 2055.7,897.1 2056.6,897.2 2057.5,897.3 2058.4,897.4 2059.3,897.4 2060.2,897.4 2061.1,897.4 2062.1,897.4 2063.0,897.4 2063.9,897.4 2064.8,897.4 2065.7,897.4 2066.6,897.4 2067.6,897.4 2068.5,897.4 2069.4,897.4 2070.3,897.4 2071.2,897.4 2072.1,897.4 2073.0,897.4 2074.0,897.4 2074.9,897.4 2075.8,897.4 2076.7,897.4 2077.6,897.4 2078.5,897.4 2079.4,897.4 2080.4,897.4 2081.3,897.4 2082.2,897.4 2083.1,897.4 2084.0,897.4 2084.9,897.4 2085.9,897.4 2086.8,897.4 2087.7,897.4 2088.6,897.4 2089.6,797.0 2090.7,897.4 2091.6,897.4 2092.6,897.4 2093.5,897.3 2094.4,897.3 2095.3,897.3 2096.3,897.3 2097.2,897.3 2098.1,897.3 2099.0,897.2 2100.0,897.2 2100.9,897.2 2101.8,897.2 2102.8,897.2 2103.7,897.1 2104.6,897.1 2105.5,897.1 2106.5,897.1 2107.4,897.1 2108.3,897.1 2109.2,897.0 2110.2,897.0 2111.1,897.0 2111.1,797.0 2111.6,895.9 2112.6,895.9 2113.7,895.9 2114.7,895.9 2115.8,895.9 2116.8,895.9 2117.9,875.9 2118.9,855.8 2119.9,835.8 2121.0,814.8 2122.0,815.2 2123.1,814.4 2124.1,812.8 2125.1,809.2 2126.2,807.8 2127.2,808.0 2128.1,810.5 2129.0,809.1 2129.9,808.7 2130.8,809.9 2131.8,811.7 2132.7,809.7 2133.6,809.7 2134.5,813.3 2135.6,813.4 2136.6,815.6 2137.6,817.1 2138.7,819.0 2139.7,833.7 2140.8,844.5 2141.8,856.8 2142.9,869.0 2143.9,881.3 2144.9,867.2 2146.0,853.2 2147.0,839.7 2148.0,826.2 2149.0,824.5 2150.1,822.9 2151.1,821.2 2152.2,819.6 2153.2,817.9 2154.2,819.5 2155.3,821.0 2156.3,822.5 2157.4,824.1 2158.4,828.7 2159.5,833.3 2160.5,837.8 2161.6,842.4 2162.6,847.0 2163.6,851.2 2164.7,855.3 2165.7,859.5 2166.8,863.6 2167.8,867.8 2168.9,870.9 2169.9,874.0 2170.9,877.2 2172.0,880.3 2173.0,877.2 2174.1,874.0 2175.1,870.9 2176.1,867.8 2177.1,859.9 2178.2,852.0 2179.2,844.1 2180.3,838.0 2181.3,826.8 2182.3,827.6 2183.4,826.7 2184.4,821.6 2185.5,822.9 2186.5,815.4 2187.5,819.5 2188.6,819.2 2189.6,815.2 2190.7,814.9 2191.7,814.4 2192.7,818.8 2193.8,828.1 2194.8,832.6 2195.9,828.3 2196.9,822.5 2198.0,815.4 2199.0,816.7 2200.1,820.1 2201.1,825.6 2202.1,823.3 2203.1,829.5 2204.2,831.4 2205.2,834.3 2206.3,837.7 2207.3,842.3 2208.3,845.0 2209.4,850.2 2210.4,857.4 2211.5,862.6 2212.5,867.8 2213.5,876.8 2214.6,885.8 2215.6,894.8 2216.5,893.6 2217.4,892.4 2218.3,891.2 2219.2,890.1 2220.1,888.9 2221.0,887.7 2221.9,886.5 2222.8,885.8 2223.7,885.1 2224.7,884.4 2225.6,883.7 2226.5,883.1 2227.4,882.4 2228.4,881.7 2229.3,881.0 2230.2,883.1 2231.2,868.8 2232.3,852.1 2233.3,837.7 2234.4,826.9 2235.4,827.1 2236.4,823.3 2237.5,817.9 2238.5,816.9 2239.6,813.4 2240.6,814.9 2241.6,812.0 2242.7,806.8 2243.7,811.6 2244.8,812.9 2245.8,809.4 2246.8,806.5 2247.9,807.3 2248.9,806.0 2249.9,822.2 2251.0,832.3 2252.0,836.3 2253.1,843.8 2254.1,849.9 2255.2,859.8 2256.2,871.6 2257.2,873.6 2258.3,878.8 2259.3,875.6 2260.4,882.8 2261.4,886.5 2262.4,887.9 2263.5,889.3 2264.5,890.6 2265.5,892.0 2266.6,893.4 2267.6,894.8 2268.5,894.5 2269.4,894.2 2270.3,893.9 2271.2,893.7 2272.1,893.4 2273.0,893.1 2273.9,892.8 2274.9,883.4 2276.0,874.1 2277.0,864.7 2278.0,855.3 2279.1,846.0 2280.1,840.0 2281.1,833.7 2282.2,826.6 2283.1,821.7 2284.0,828.2 2285.0,829.7 2285.9,828.3 2286.8,827.1 2287.7,826.3 2288.7,831.2 2289.6,829.5 2290.5,827.9 2291.6,831.4 2292.6,836.4 2293.6,847.3 2294.7,849.6 2295.7,835.8 2296.8,824.7 2297.8,813.4 2298.8,822.1 2299.9,824.7 2300.9,827.6 2302.0,838.8 2303.0,843.2 2303.9,844.5 2304.8,849.6 2305.8,848.0 2306.7,850.1 2307.6,849.8 2308.5,857.2 2309.5,859.0 2310.4,863.9 2311.3,858.7 2312.4,866.6 2313.4,871.5 2314.4,876.0 2315.5,877.7 2316.6,888.5 2317.6,887.0 2318.6,878.8 2319.7,863.2 2320.7,851.1 2321.7,841.4 2322.8,823.3 2323.8,812.8 2324.8,821.9 2325.9,835.6 2326.9,846.1 2328.0,858.1 2329.0,864.6 2330.0,866.4 2331.1,864.1 2332.1,856.8 2333.2,861.6 2334.2,858.1 2335.2,854.9 2336.3,852.2 2337.3,847.2 2338.4,847.8 2339.4,839.0 2340.4,850.3 2341.5,858.8 2342.5,858.1 2343.4,856.4 2344.3,852.6 2345.2,839.5 2346.1,836.5 2347.0,832.8 2347.9,821.3 2348.8,814.5 2349.9,816.9 2350.9,816.0 2352.0,812.0" fill="none" stroke="#10ea10" stroke-width="2.4" stroke-linejoin="round" stroke-linecap="round"/><polyline clip-path="url(#cp2)" points="1221,950.3 1230.4,949.8 1235.6,945.1 1240.8,936.8 1246.5,929.5 1248.1,921.2 1250.2,899" fill="none" stroke="#f0f0f0" stroke-width="2.4" stroke-linejoin="round" stroke-linecap="round"/><polyline clip-path="url(#cp2)" points="1277.2,898.8 1282,901.5 1287.6,903 1293,901.5 1298,899.5" fill="none" stroke="#f0f0f0" stroke-width="2.4" stroke-linejoin="round" stroke-linecap="round"/><polyline clip-path="url(#cp2)" points="1349,899 1353.1,910.8 1357.3,922.2 1366.6,951.4 1369.8,962.8 1372.9,968 1386.4,972.2 1396.8,976.3 1428,987.8 1448.8,994 1457.1,990.9 1460.3,992.4 1469.6,1002" fill="none" stroke="#f0f0f0" stroke-width="2.4" stroke-linejoin="round" stroke-linecap="round"/><polyline clip-path="url(#cp2)" points="1221,952 1480,952 1485,954 1540,956 1600,959 1670,961 1750,963 1780,964 1840,961 1870,957 2145,957 2150,959 2352,959" fill="none" stroke="#f0f0f0" stroke-width="2.6" stroke-linejoin="round" stroke-linecap="round"/><polyline clip-path="url(#cp2)" points="1221,956.6 1229.4,956.6 1233.5,962.8 1238.7,968 1245,972.2 1249.1,986.7 1251.2,987.8 1267.8,988.8 1274.1,981.5 1284.5,979.4 1297,981.5 1310.5,983.6 1330.2,984.6 1338.6,988.8 1460,988.8 1840,989 1846,990 1855,982 1870,976 1900,968 1920,966 1925,967 1935,974 1945,982 1955,987 1965,989 2310,989 2320,983 2352,985" fill="none" stroke="#10ea10" stroke-width="2.6" stroke-linejoin="round" stroke-linecap="round"/><polyline clip-path="url(#cp2)" points="1846.5,899 1846.5,1002" fill="none" stroke="#f0f0f0" stroke-width="2.0" stroke-linejoin="round" stroke-linecap="round"/><polyline clip-path="url(#cp2)" points="1854,899 1862,915 1865,927 1880,940 1900,950 1910,953 1920,954 1925,952 1935,943 1938,935 1943,922 1948,910 1955,900 1978,899 1990,914 2000,945 2003,963 2010,968 2100,990 2103,992 2108,990 2110,966 2315,966 2320,950 2325,921 2330,915 2340,909 2352,899" fill="none" stroke="#f0f0f0" stroke-width="2.4" stroke-linejoin="round" stroke-linecap="round"/><polyline clip-path="url(#cp3)" points="1221,1048.2 1231.2,1051.5 1242.4,1062.7 1249.1,1076.2 1252.5,1098.6 1261.4,1099.1 1268.2,1099.7 1274.9,1089.6 1282.7,1082.9 1298.4,1085.1 1305.1,1089.6 1323,1091.8 1327.5,1094.1 1336.5,1097.4 1365.6,1099.7 1427.2,1098.6 1431.7,1103.3 1845.2,1103.3 1848.3,1091.5 1854.6,1088.4 1858.7,1082.2 1863.9,1068.6 1870.2,1064.5 1876.4,1060.3 1886.8,1054.1 1900.3,1051 1910.7,1052 1921.1,1052 1925.3,1056.2 1928.4,1062.4 1938.8,1072.8 1946.1,1087.4 1954.4,1093.6 1959.6,1094.6 1967.9,1095.2 1971,1097.8 2005.4,1097.8 2007.4,1096.2 2032.4,1096.7 2037.6,1097.8 2081.3,1096.7 2082.3,1103.3 2103.3,1103 2105.4,1090.5 2111.6,1086.3 2117.9,1088.4 2124.1,1093.6 2130.4,1095.7 2142.8,1094.1 2308.2,1094.1 2313.4,1090.5 2318.6,1081.1 2323.8,1084.2 2334.2,1085.8 2352,1088.4" fill="none" stroke="#ff9414" stroke-width="2.6" stroke-linejoin="round" stroke-linecap="round"/><polyline clip-path="url(#cp3)" points="1221.0,1080.0 1221.5,1073.8 1222.0,1067.0 1222.5,1058.3 1223.0,1057.0 1223.5,1047.5 1224.0,1041.7 1224.5,1034.4 1225.0,1030.4 1225.5,1027.0 1226.0,1025.7 1226.5,1026.6 1227.0,1026.4 1227.5,1023.0 1228.0,1024.3 1228.5,1022.1 1229.0,1024.7 1229.5,1025.9 1230.0,1037.5 1230.5,1040.5 1231.0,1047.4 1231.5,1051.6 1232.0,1061.3 1232.5,1066.1 1233.0,1075.0 1233.6,1081.1 1234.1,1091.0 1234.6,1102.8 1235.1,1094.4 1235.6,1084.6 1236.1,1071.7 1236.6,1068.9 1237.0,1060.0 1237.5,1051.0 1238.0,1039.0 1238.5,1030.0 1239.0,1023.5 1239.5,1027.1 1240.0,1026.0 1240.5,1027.7 1241.0,1025.4 1241.5,1027.9 1242.0,1029.8 1242.5,1031.2 1243.0,1031.8 1243.5,1039.7 1244.0,1054.9 1244.5,1062.3 1245.0,1077.1 1245.5,1087.0 1246.0,1096.1 1246.5,1086.4 1247.0,1073.8 1247.5,1064.3 1248.0,1046.6 1248.5,1035.2 1249.0,1027.9 1249.5,1025.7 1249.9,1020.3 1250.4,1019.5 1250.8,1020.0 1251.3,1016.4 1251.8,1016.1 1252.2,1013.2 1252.7,1015.9 1253.1,1010.8 1253.6,1015.0 1254.1,1014.9 1254.5,1014.5 1255.0,1014.8 1255.5,1012.8 1255.9,1015.1 1256.4,1016.0 1256.9,1014.7 1257.4,1012.6 1257.8,1016.4 1258.3,1015.0 1258.8,1017.1 1259.2,1016.3 1259.7,1019.9 1260.2,1015.8 1260.7,1019.6 1261.1,1019.6 1261.6,1019.1 1262.1,1016.7 1262.5,1017.6 1263.0,1022.8 1263.5,1020.9 1264.0,1023.0 1264.5,1026.2 1265.0,1030.2 1265.5,1041.5 1266.0,1049.7 1266.5,1061.0 1267.0,1075.3 1267.5,1084.8 1268.0,1098.6 1268.5,1099.9 1268.9,1095.8 1269.4,1098.4 1269.9,1097.9 1270.4,1100.3 1270.8,1101.4 1271.3,1098.3 1271.8,1097.4 1272.2,1101.3 1272.7,1096.3 1273.2,1098.3 1273.6,1098.8 1274.1,1097.6 1274.6,1100.7 1275.1,1099.9 1275.5,1098.4 1276.0,1099.5 1276.5,1087.3 1277.0,1071.3 1277.5,1055.9 1278.0,1044.4 1278.5,1029.0 1279.0,1017.7 1279.5,1029.0 1280.0,1042.5 1280.5,1060.9 1281.0,1071.3 1281.5,1084.9 1282.0,1100.2 1282.5,1100.8 1282.9,1100.3 1283.4,1100.6 1283.8,1097.0 1284.3,1097.6 1284.8,1096.9 1285.2,1097.4 1285.7,1097.4 1286.2,1097.3 1286.6,1093.6 1287.1,1095.0 1287.5,1096.6 1288.0,1092.2 1288.5,1097.1 1289.0,1097.4 1289.5,1096.3 1290.0,1097.2 1290.5,1096.7 1291.0,1100.2 1291.5,1099.3 1292.0,1098.6 1292.5,1087.8 1293.0,1080.3 1293.5,1074.4 1294.0,1063.6 1294.5,1053.9 1295.0,1046.4 1295.5,1031.6 1296.0,1025.6 1296.5,1023.1 1297.0,1024.4 1297.5,1023.1 1298.0,1024.1 1298.5,1027.4 1299.0,1026.4 1299.5,1027.1 1300.0,1022.5 1300.5,1030.4 1300.9,1040.0 1301.4,1042.2 1301.8,1049.7 1302.3,1055.7 1302.7,1066.7 1303.2,1069.8 1303.6,1077.6 1304.1,1081.8 1304.5,1089.0 1305.0,1098.1 1305.5,1092.8 1305.9,1083.2 1306.4,1076.2 1306.8,1067.6 1307.3,1061.1 1307.7,1054.4 1308.2,1047.9 1308.6,1043.1 1309.1,1035.0 1309.5,1031.8 1310.0,1020.7 1310.5,1025.1 1311.0,1021.6 1311.5,1025.2 1312.0,1026.3 1312.5,1027.9 1313.0,1027.5 1313.5,1029.1 1314.0,1031.7 1314.5,1031.7 1315.0,1037.7 1315.5,1041.8 1316.0,1046.7 1316.5,1046.7 1317.0,1052.0 1317.5,1053.4 1318.0,1061.0 1318.5,1054.4 1318.9,1043.5 1319.4,1038.4 1319.9,1029.6 1320.3,1017.9 1320.8,1012.8 1321.3,1024.5 1321.9,1040.4 1322.5,1057.6 1323.0,1067.8 1323.5,1063.7 1324.0,1054.0 1324.5,1047.7 1325.0,1046.0 1325.5,1034.2 1326.0,1028.0 1326.5,1033.1 1326.9,1029.8 1327.4,1029.7 1327.8,1029.4 1328.3,1032.3 1328.7,1030.1 1329.2,1031.5 1329.6,1032.0 1330.1,1035.6 1330.5,1032.5 1331.0,1035.5 1331.5,1036.0 1332.0,1043.0 1332.5,1045.4 1333.0,1047.5 1333.5,1049.9 1334.0,1050.3 1334.5,1059.4 1335.0,1064.6 1335.5,1068.5 1336.1,1078.8 1336.6,1086.4 1337.1,1088.2 1337.6,1096.2 1338.1,1084.9 1338.6,1070.0 1339.0,1054.0 1339.5,1036.5 1340.0,1022.6 1340.5,1022.1 1340.9,1026.2 1341.4,1021.3 1341.8,1021.8 1342.3,1023.3 1342.7,1022.8 1343.2,1021.8 1343.6,1022.0 1344.1,1022.9 1344.5,1022.8 1345.0,1017.7 1345.5,1017.3 1345.9,1022.7 1346.3,1022.8 1346.8,1019.6 1347.2,1019.9 1347.7,1021.7 1348.2,1020.2 1348.6,1018.5 1349.0,1019.4 1349.5,1019.8 1350.0,1021.5 1350.4,1019.2 1350.8,1022.7 1351.3,1024.2 1351.8,1020.8 1352.2,1022.0 1352.7,1022.5 1353.1,1023.6 1353.5,1022.7 1354.0,1022.1 1354.5,1023.9 1354.9,1020.2 1355.4,1026.2 1355.9,1026.5 1356.3,1025.8 1356.8,1023.4 1357.3,1026.5 1357.7,1023.4 1358.2,1026.2 1358.7,1025.6 1359.1,1028.2 1359.6,1026.9 1360.1,1026.5 1360.5,1031.2 1361.0,1028.5 1361.5,1040.4 1362.0,1047.1 1362.5,1060.4 1363.0,1071.7 1363.5,1081.7 1364.0,1089.0 1364.5,1088.7 1364.9,1092.5 1365.4,1091.6 1365.8,1092.4 1366.3,1092.8 1366.7,1094.8 1367.2,1097.5 1367.6,1096.7 1368.1,1099.1 1368.5,1100.5 1369.0,1101.9 1369.5,1095.2 1369.9,1092.4 1370.4,1084.2 1370.8,1079.1 1371.3,1074.6 1371.7,1071.2 1372.2,1064.3 1372.6,1060.3 1373.1,1050.5 1373.5,1046.8 1374.0,1043.2 1374.5,1053.1 1375.0,1063.3 1375.5,1069.6 1376.0,1079.6 1376.5,1089.8 1377.0,1099.4 1377.5,1093.9 1377.9,1092.1 1378.4,1089.9 1378.8,1086.9 1379.3,1080.2 1379.7,1078.9 1380.2,1076.1 1380.6,1068.8 1381.1,1064.4 1381.5,1061.6 1382.0,1061.1 1382.5,1059.4 1383.0,1053.1 1383.5,1049.5 1384.0,1048.3 1384.5,1043.3 1385.0,1038.5 1385.5,1036.6 1386.0,1035.6 1386.5,1032.8 1386.9,1030.2 1387.3,1028.6 1387.8,1025.2 1388.2,1027.0 1388.7,1022.7 1389.2,1022.7 1389.6,1020.1 1390.1,1020.2 1390.5,1017.6 1391.0,1011.7 1391.4,1011.7 1391.9,1026.3 1392.4,1047.9 1393.0,1062.0 1393.5,1083.7 1394.0,1096.4 1394.5,1086.7 1395.0,1075.3 1395.5,1066.0 1396.0,1053.2 1396.5,1043.6 1397.0,1028.9 1397.5,1029.3 1398.0,1031.4 1398.5,1032.3 1399.0,1037.9 1399.5,1039.4 1400.0,1041.5 1400.5,1048.4 1401.0,1051.3 1401.5,1057.6 1402.0,1068.0 1402.5,1070.8 1403.0,1079.5 1403.5,1087.8 1404.0,1094.9 1404.5,1095.3 1404.9,1097.9 1405.4,1098.7 1405.8,1095.3 1406.3,1096.0 1406.8,1094.8 1407.2,1096.0 1407.7,1098.6 1408.2,1100.4 1408.6,1098.6 1409.1,1098.4 1409.5,1102.5 1410.0,1103.0 1410.5,1102.0 1410.9,1102.1 1411.4,1102.1 1411.8,1102.1 1412.3,1102.1 1412.8,1102.2 1413.2,1102.2 1413.7,1102.2 1414.1,1102.2 1414.6,1102.3 1415.1,1102.3 1415.5,1102.3 1416.0,1102.4 1416.4,1102.4 1416.9,1102.4 1417.4,1102.4 1417.8,1102.5 1418.3,1102.5 1418.7,1102.5 1419.2,1102.5 1419.6,1102.6 1420.1,1102.6 1420.6,1102.6 1421.0,1102.6 1421.5,1102.7 1421.9,1102.7 1422.4,1102.7 1422.9,1102.8 1423.3,1102.8 1423.8,1102.8 1424.2,1102.8 1424.7,1102.9 1425.2,1102.9 1425.6,1102.9 1426.1,1102.9 1426.5,1103.0 1427.0,1103.0 1427.5,1103.0 1427.9,1103.0 1428.4,1103.0 1428.8,1103.0 1429.3,1103.0 1429.7,1103.0 1430.2,1103.0 1430.6,1103.0 1431.1,1103.0 1431.5,1103.0 1432.0,1103.0 1432.4,1103.0 1432.9,1103.0 1433.3,1103.0 1433.8,1103.0 1434.2,1103.0 1434.7,1103.0 1435.1,1103.0 1435.6,1103.0 1436.0,1103.0 1436.5,1103.0 1436.9,1103.0 1437.4,1103.0 1437.8,1103.0 1438.3,1103.0 1438.7,1103.0 1439.2,1103.0 1439.6,1103.0 1440.1,1103.0 1440.5,1103.0 1441.0,1103.0 1441.4,1103.0 1441.9,1103.0 1442.3,1103.0 1442.8,1103.0 1443.2,1103.0 1443.7,1103.0 1444.1,1103.0 1444.6,1103.0 1445.0,1103.0 1445.5,1103.0 1445.9,1103.0 1446.4,1103.0 1446.8,1103.0 1447.3,1103.0 1447.7,1103.0 1448.2,1103.0 1448.6,1103.0 1449.1,1103.0 1449.5,1103.0 1450.0,1103.0 1450.4,1103.0 1450.9,1103.0 1451.3,1103.0 1451.8,1103.0 1452.2,1103.0 1452.7,1103.0 1453.1,1103.0 1453.6,1103.0 1454.0,1103.0 1454.5,1103.0 1454.9,1103.0 1455.4,1103.0 1455.8,1103.0 1456.3,1103.0 1456.7,1103.0 1457.2,1103.0 1457.6,1103.0 1458.1,1103.0 1458.5,1103.0 1459.0,1103.0 1459.4,1103.0 1459.9,1103.0 1460.3,1103.0 1460.8,1103.0 1461.2,1103.0 1461.7,1103.0 1462.1,1103.0 1462.6,1103.0 1463.0,1103.0 1463.5,1103.0 1463.9,1103.0 1464.4,1103.0 1464.8,1103.0 1465.3,1103.0 1465.7,1103.0 1466.2,1103.0 1466.6,1103.0 1467.1,1103.0 1467.5,1103.0 1468.0,1103.0 1468.4,1103.0 1468.9,1103.0 1469.3,1103.0 1469.8,1103.0 1470.2,1103.0 1470.7,1103.0 1471.1,1103.0 1471.6,1103.0 1472.0,1103.0 1472.5,1103.0 1472.9,1103.0 1473.4,1103.0 1473.8,1103.0 1474.3,1103.0 1474.7,1103.0 1475.2,1103.0 1475.6,1103.0 1476.1,1103.0 1476.5,1103.0 1477.0,1103.0 1477.4,1103.0 1477.9,1103.0 1478.3,1103.0 1478.8,1103.0 1479.2,1103.0 1479.7,1103.0 1480.1,1103.0 1480.6,1103.0 1481.0,1103.0 1481.5,1103.0 1481.9,1103.0 1482.4,1103.0 1482.8,1103.0 1483.3,1103.0 1483.7,1103.0 1484.2,1103.0 1484.6,1103.0 1485.1,1103.0 1485.5,1103.0 1486.0,1103.0 1486.5,1103.0 1486.9,1103.0 1487.4,1103.0 1487.8,1103.0 1488.3,1103.0 1488.7,1103.0 1489.2,1103.0 1489.6,1103.0 1490.1,1103.0 1490.5,1103.0 1491.0,1103.0 1491.4,1103.0 1491.9,1103.0 1492.3,1103.0 1492.8,1103.0 1493.2,1103.0 1493.7,1103.0 1494.1,1103.0 1494.6,1103.0 1495.0,1103.0 1495.5,1103.0 1495.9,1103.0 1496.4,1103.0 1496.8,1103.0 1497.3,1103.0 1497.7,1103.0 1498.2,1103.0 1498.6,1103.0 1499.1,1103.0 1499.5,1103.0 1500.0,1103.0 1500.4,1103.0 1500.9,1103.0 1501.3,1103.0 1501.8,1103.0 1502.2,1103.0 1502.7,1103.0 1503.1,1103.0 1503.6,1103.0 1504.0,1103.0 1504.5,1103.0 1504.9,1103.0 1505.4,1103.0 1505.8,1103.0 1506.3,1103.0 1506.7,1103.0 1507.2,1103.0 1507.6,1103.0 1508.1,1103.0 1508.5,1103.0 1509.0,1103.0 1509.4,1103.0 1509.9,1103.0 1510.3,1103.0 1510.8,1103.0 1511.2,1103.0 1511.7,1103.0 1512.1,1103.0 1512.6,1103.0 1513.0,1103.0 1513.5,1103.0 1513.9,1103.0 1514.4,1103.0 1514.8,1103.0 1515.3,1103.0 1515.7,1103.0 1516.2,1103.0 1516.6,1103.0 1517.1,1103.0 1517.5,1103.0 1518.0,1103.0 1518.4,1103.0 1518.9,1103.0 1519.3,1103.0 1519.8,1103.0 1520.2,1103.0 1520.7,1103.0 1521.1,1103.0 1521.6,1103.0 1522.0,1103.0 1522.5,1103.0 1522.9,1103.0 1523.4,1103.0 1523.8,1103.0 1524.3,1103.0 1524.7,1103.0 1525.2,1103.0 1525.6,1103.0 1526.1,1103.0 1526.5,1103.0 1527.0,1103.0 1527.4,1103.0 1527.9,1103.0 1528.3,1103.0 1528.8,1103.0 1529.2,1103.0 1529.7,1103.0 1530.1,1103.0 1530.6,1103.0 1531.0,1103.0 1531.5,1103.0 1531.9,1103.0 1532.4,1103.0 1532.8,1103.0 1533.3,1103.0 1533.7,1103.0 1534.2,1103.0 1534.6,1103.0 1535.1,1103.0 1535.5,1103.0 1536.0,1103.0 1536.4,1103.0 1536.9,1103.0 1537.3,1103.0 1537.8,1103.0 1538.2,1103.0 1538.7,1103.0 1539.1,1103.0 1539.6,1103.0 1540.0,1103.0 1540.5,1103.0 1540.9,1103.0 1541.4,1103.0 1541.8,1103.0 1542.3,1103.0 1542.7,1103.0 1543.2,1103.0 1543.6,1103.0 1544.1,1103.0 1544.5,1103.0 1545.0,1103.0 1545.5,1103.0 1545.9,1103.0 1546.4,1103.0 1546.8,1103.0 1547.3,1103.0 1547.7,1103.0 1548.2,1103.0 1548.6,1103.0 1549.1,1103.0 1549.5,1103.0 1550.0,1103.0 1550.4,1103.0 1550.9,1103.0 1551.3,1103.0 1551.8,1103.0 1552.2,1103.0 1552.7,1103.0 1553.1,1103.0 1553.6,1103.0 1554.0,1103.0 1554.5,1103.0 1554.9,1103.0 1555.4,1103.0 1555.8,1103.0 1556.3,1103.0 1556.7,1103.0 1557.2,1103.0 1557.6,1103.0 1558.1,1103.0 1558.5,1103.0 1559.0,1103.0 1559.4,1103.0 1559.9,1103.0 1560.3,1103.0 1560.8,1103.0 1561.2,1103.0 1561.7,1103.0 1562.1,1103.0 1562.6,1103.0 1563.0,1103.0 1563.5,1103.0 1563.9,1103.0 1564.4,1103.0 1564.8,1103.0 1565.3,1103.0 1565.7,1103.0 1566.2,1103.0 1566.6,1103.0 1567.1,1103.0 1567.5,1103.0 1568.0,1103.0 1568.4,1103.0 1568.9,1103.0 1569.3,1103.0 1569.8,1103.0 1570.2,1103.0 1570.7,1103.0 1571.1,1103.0 1571.6,1103.0 1572.0,1103.0 1572.5,1103.0 1572.9,1103.0 1573.4,1103.0 1573.8,1103.0 1574.3,1103.0 1574.7,1103.0 1575.2,1103.0 1575.6,1103.0 1576.1,1103.0 1576.5,1103.0 1577.0,1103.0 1577.4,1103.0 1577.9,1103.0 1578.3,1103.0 1578.8,1103.0 1579.2,1103.0 1579.7,1103.0 1580.1,1103.0 1580.6,1103.0 1581.0,1103.0 1581.5,1103.0 1581.9,1103.0 1582.4,1103.0 1582.8,1103.0 1583.3,1103.0 1583.7,1103.0 1584.2,1103.0 1584.6,1103.0 1585.1,1103.0 1585.5,1103.0 1586.0,1103.0 1586.4,1103.0 1586.9,1103.0 1587.3,1103.0 1587.8,1103.0 1588.2,1103.0 1588.7,1103.0 1589.1,1103.0 1589.6,1103.0 1590.0,1103.0 1590.5,1103.0 1590.9,1103.0 1591.4,1103.0 1591.8,1103.0 1592.3,1103.0 1592.7,1103.0 1593.2,1103.0 1593.6,1103.0 1594.1,1103.0 1594.5,1103.0 1595.0,1103.0 1595.4,1103.0 1595.9,1103.0 1596.3,1103.0 1596.8,1103.0 1597.2,1103.0 1597.7,1103.0 1598.1,1103.0 1598.6,1103.0 1599.0,1103.0 1599.5,1103.0 1599.9,1103.0 1600.4,1103.0 1600.8,1103.0 1601.3,1103.0 1601.7,1103.0 1602.2,1103.0 1602.6,1103.0 1603.1,1103.0 1603.5,1103.0 1604.0,1103.0 1604.5,1103.0 1604.9,1103.0 1605.4,1103.0 1605.8,1103.0 1606.3,1103.0 1606.7,1103.0 1607.2,1103.0 1607.6,1103.0 1608.1,1103.0 1608.5,1103.0 1609.0,1103.0 1609.4,1103.0 1609.9,1103.0 1610.3,1103.0 1610.8,1103.0 1611.2,1103.0 1611.7,1103.0 1612.1,1103.0 1612.6,1103.0 1613.0,1103.0 1613.5,1103.0 1613.9,1103.0 1614.4,1103.0 1614.8,1103.0 1615.3,1103.0 1615.7,1103.0 1616.2,1103.0 1616.6,1103.0 1617.1,1103.0 1617.5,1103.0 1618.0,1103.0 1618.4,1103.0 1618.9,1103.0 1619.3,1103.0 1619.8,1103.0 1620.2,1103.0 1620.7,1103.0 1621.1,1103.0 1621.6,1103.0 1622.0,1103.0 1622.5,1103.0 1622.9,1103.0 1623.4,1103.0 1623.8,1103.0 1624.3,1103.0 1624.7,1103.0 1625.2,1103.0 1625.6,1103.0 1626.1,1103.0 1626.5,1103.0 1627.0,1103.0 1627.4,1103.0 1627.9,1103.0 1628.3,1103.0 1628.8,1103.0 1629.2,1103.0 1629.7,1103.0 1630.1,1103.0 1630.6,1103.0 1631.0,1103.0 1631.5,1103.0 1631.9,1103.0 1632.4,1103.0 1632.8,1103.0 1633.3,1103.0 1633.7,1103.0 1634.2,1103.0 1634.6,1103.0 1635.1,1103.0 1635.5,1103.0 1636.0,1103.0 1636.4,1103.0 1636.9,1103.0 1637.3,1103.0 1637.8,1103.0 1638.2,1103.0 1638.7,1103.0 1639.1,1103.0 1639.6,1103.0 1640.0,1103.0 1640.5,1103.0 1640.9,1103.0 1641.4,1103.0 1641.8,1103.0 1642.3,1103.0 1642.7,1103.0 1643.2,1103.0 1643.6,1103.0 1644.1,1103.0 1644.5,1103.0 1645.0,1103.0 1645.4,1103.0 1645.9,1103.0 1646.3,1103.0 1646.8,1103.0 1647.2,1103.0 1647.7,1103.0 1648.1,1103.0 1648.6,1103.0 1649.0,1103.0 1649.5,1103.0 1649.9,1103.0 1650.4,1103.0 1650.8,1103.0 1651.3,1103.0 1651.7,1103.0 1652.2,1103.0 1652.6,1103.0 1653.1,1103.0 1653.5,1103.0 1654.0,1103.0 1654.4,1103.0 1654.9,1103.0 1655.3,1103.0 1655.8,1103.0 1656.2,1103.0 1656.7,1103.0 1657.1,1103.0 1657.6,1103.0 1658.0,1103.0 1658.5,1103.0 1658.9,1103.0 1659.4,1103.0 1659.8,1103.0 1660.3,1103.0 1660.7,1103.0 1661.2,1103.0 1661.6,1103.0 1662.1,1103.0 1662.5,1103.0 1663.0,1103.0 1663.5,1103.0 1663.9,1103.0 1664.4,1103.0 1664.8,1103.0 1665.3,1103.0 1665.7,1103.0 1666.2,1103.0 1666.6,1103.0 1667.1,1103.0 1667.5,1103.0 1668.0,1103.0 1668.4,1103.0 1668.9,1103.0 1669.3,1103.0 1669.8,1103.0 1670.2,1103.0 1670.7,1103.0 1671.1,1103.0 1671.6,1103.0 1672.0,1103.0 1672.5,1103.0 1672.9,1103.0 1673.4,1103.0 1673.8,1103.0 1674.3,1103.0 1674.7,1103.0 1675.2,1103.0 1675.6,1103.0 1676.1,1103.0 1676.5,1103.0 1677.0,1103.0 1677.4,1103.0 1677.9,1103.0 1678.3,1103.0 1678.8,1103.0 1679.2,1103.0 1679.7,1103.0 1680.1,1103.0 1680.6,1103.0 1681.0,1103.0 1681.5,1103.0 1681.9,1103.0 1682.4,1103.0 1682.8,1103.0 1683.3,1103.0 1683.7,1103.0 1684.2,1103.0 1684.6,1103.0 1685.1,1103.0 1685.5,1103.0 1686.0,1103.0 1686.4,1103.0 1686.9,1103.0 1687.3,1103.0 1687.8,1103.0 1688.2,1103.0 1688.7,1103.0 1689.1,1103.0 1689.6,1103.0 1690.0,1103.0 1690.5,1103.0 1690.9,1103.0 1691.4,1103.0 1691.8,1103.0 1692.3,1103.0 1692.7,1103.0 1693.2,1103.0 1693.6,1103.0 1694.1,1103.0 1694.5,1103.0 1695.0,1103.0 1695.4,1103.0 1695.9,1103.0 1696.3,1103.0 1696.8,1103.0 1697.2,1103.0 1697.7,1103.0 1698.1,1103.0 1698.6,1103.0 1699.0,1103.0 1699.5,1103.0 1699.9,1103.0 1700.4,1103.0 1700.8,1103.0 1701.3,1103.0 1701.7,1103.0 1702.2,1103.0 1702.6,1103.0 1703.1,1103.0 1703.5,1103.0 1704.0,1103.0 1704.4,1103.0 1704.9,1103.0 1705.3,1103.0 1705.8,1103.0 1706.2,1103.0 1706.7,1103.0 1707.1,1103.0 1707.6,1103.0 1708.0,1103.0 1708.5,1103.0 1708.9,1103.0 1709.4,1103.0 1709.8,1103.0 1710.3,1103.0 1710.7,1103.0 1711.2,1103.0 1711.6,1103.0 1712.1,1103.0 1712.5,1103.0 1713.0,1103.0 1713.4,1103.0 1713.9,1103.0 1714.3,1103.0 1714.8,1103.0 1715.2,1103.0 1715.7,1103.0 1716.1,1103.0 1716.6,1103.0 1717.0,1103.0 1717.5,1103.0 1717.9,1103.0 1718.4,1103.0 1718.8,1103.0 1719.3,1103.0 1719.7,1103.0 1720.2,1103.0 1720.6,1103.0 1721.1,1103.0 1721.5,1103.0 1722.0,1103.0 1722.5,1103.0 1722.9,1103.0 1723.4,1103.0 1723.8,1103.0 1724.3,1103.0 1724.7,1103.0 1725.2,1103.0 1725.6,1103.0 1726.1,1103.0 1726.5,1103.0 1727.0,1103.0 1727.4,1103.0 1727.9,1103.0 1728.3,1103.0 1728.8,1103.0 1729.2,1103.0 1729.7,1103.0 1730.1,1103.0 1730.6,1103.0 1731.0,1103.0 1731.5,1103.0 1731.9,1103.0 1732.4,1103.0 1732.8,1103.0 1733.3,1103.0 1733.7,1103.0 1734.2,1103.0 1734.6,1103.0 1735.1,1103.0 1735.5,1103.0 1736.0,1103.0 1736.4,1103.0 1736.9,1103.0 1737.3,1103.0 1737.8,1103.0 1738.2,1103.0 1738.7,1103.0 1739.1,1103.0 1739.6,1103.0 1740.0,1103.0 1740.5,1103.0 1740.9,1103.0 1741.4,1103.0 1741.8,1103.0 1742.3,1103.0 1742.7,1103.0 1743.2,1103.0 1743.6,1103.0 1744.1,1103.0 1744.5,1103.0 1745.0,1103.0 1745.4,1103.0 1745.9,1103.0 1746.3,1103.0 1746.8,1103.0 1747.2,1103.0 1747.7,1103.0 1748.1,1103.0 1748.6,1103.0 1749.0,1103.0 1749.5,1103.0 1749.9,1103.0 1750.4,1103.0 1750.8,1103.0 1751.3,1103.0 1751.7,1103.0 1752.2,1103.0 1752.6,1103.0 1753.1,1103.0 1753.5,1103.0 1754.0,1103.0 1754.4,1103.0 1754.9,1103.0 1755.3,1103.0 1755.8,1103.0 1756.2,1103.0 1756.7,1103.0 1757.1,1103.0 1757.6,1103.0 1758.0,1103.0 1758.5,1103.0 1758.9,1103.0 1759.4,1103.0 1759.8,1103.0 1760.3,1103.0 1760.7,1103.0 1761.2,1103.0 1761.6,1103.0 1762.1,1103.0 1762.5,1103.0 1763.0,1103.0 1763.4,1103.0 1763.9,1103.0 1764.3,1103.0 1764.8,1103.0 1765.2,1103.0 1765.7,1103.0 1766.1,1103.0 1766.6,1103.0 1767.0,1103.0 1767.5,1103.0 1767.9,1103.0 1768.4,1103.0 1768.8,1103.0 1769.3,1103.0 1769.7,1103.0 1770.2,1103.0 1770.6,1103.0 1771.1,1103.0 1771.5,1103.0 1772.0,1103.0 1772.4,1103.0 1772.9,1103.0 1773.3,1103.0 1773.8,1103.0 1774.2,1103.0 1774.7,1103.0 1775.1,1103.0 1775.6,1103.0 1776.0,1103.0 1776.5,1103.0 1776.9,1103.0 1777.4,1103.0 1777.8,1103.0 1778.3,1103.0 1778.7,1103.0 1779.2,1103.0 1779.6,1103.0 1780.1,1103.0 1780.5,1103.0 1781.0,1103.0 1781.5,1103.0 1781.9,1103.0 1782.4,1103.0 1782.8,1103.0 1783.3,1103.0 1783.7,1103.0 1784.2,1103.0 1784.6,1103.0 1785.1,1103.0 1785.5,1103.0 1786.0,1103.0 1786.4,1103.0 1786.9,1103.0 1787.3,1103.0 1787.8,1103.0 1788.2,1103.0 1788.7,1103.0 1789.1,1103.0 1789.6,1103.0 1790.0,1103.0 1790.5,1103.0 1790.9,1103.0 1791.4,1103.0 1791.8,1103.0 1792.3,1103.0 1792.7,1103.0 1793.2,1103.0 1793.6,1103.0 1794.1,1103.0 1794.5,1103.0 1795.0,1103.0 1795.4,1103.0 1795.9,1103.0 1796.3,1103.0 1796.8,1103.0 1797.2,1103.0 1797.7,1103.0 1798.1,1103.0 1798.6,1103.0 1799.0,1103.0 1799.5,1103.0 1799.9,1103.0 1800.4,1103.0 1800.8,1103.0 1801.3,1103.0 1801.7,1103.0 1802.2,1103.0 1802.6,1103.0 1803.1,1103.0 1803.5,1103.0 1804.0,1103.0 1804.4,1103.0 1804.9,1103.0 1805.3,1103.0 1805.8,1103.0 1806.2,1103.0 1806.7,1103.0 1807.1,1103.0 1807.6,1103.0 1808.0,1103.0 1808.5,1103.0 1808.9,1103.0 1809.4,1103.0 1809.8,1103.0 1810.3,1103.0 1810.7,1103.0 1811.2,1103.0 1811.6,1103.0 1812.1,1103.0 1812.5,1103.0 1813.0,1103.0 1813.4,1103.0 1813.9,1103.0 1814.3,1103.0 1814.8,1103.0 1815.2,1103.0 1815.7,1103.0 1816.1,1103.0 1816.6,1103.0 1817.0,1103.0 1817.5,1103.0 1817.9,1103.0 1818.4,1103.0 1818.8,1103.0 1819.3,1103.0 1819.7,1103.0 1820.2,1103.0 1820.6,1103.0 1821.1,1103.0 1821.5,1103.0 1822.0,1103.0 1822.4,1103.0 1822.9,1103.0 1823.3,1103.0 1823.8,1103.0 1824.2,1103.0 1824.7,1103.0 1825.1,1103.0 1825.6,1103.0 1826.0,1103.0 1826.5,1103.0 1826.9,1103.0 1827.4,1103.0 1827.8,1103.0 1828.3,1103.0 1828.7,1103.0 1829.2,1103.0 1829.6,1103.0 1830.1,1103.0 1830.5,1103.0 1831.0,1103.0 1831.4,1103.0 1831.9,1103.0 1832.3,1103.0 1832.8,1103.0 1833.2,1103.0 1833.7,1103.0 1834.1,1103.0 1834.6,1103.0 1835.0,1103.0 1835.5,1103.0 1835.9,1103.0 1836.4,1103.0 1836.8,1103.0 1837.3,1103.0 1837.7,1103.0 1838.2,1103.0 1838.6,1103.0 1839.1,1103.0 1839.5,1103.0 1840.0,1103.0 1840.5,1102.9 1840.9,1102.7 1841.4,1102.6 1841.8,1102.5 1842.3,1102.3 1842.7,1102.2 1843.2,1102.0 1843.6,1101.9 1844.1,1101.8 1844.5,1101.6 1845.0,1101.5 1845.5,1101.4 1845.9,1101.2 1846.4,1101.1 1846.8,1101.0 1847.3,1100.8 1847.7,1100.7 1848.2,1100.5 1848.6,1100.4 1849.1,1100.3 1849.5,1100.1 1850.0,1100.0 1850.5,1099.8 1850.9,1099.5 1851.4,1099.3 1851.8,1099.1 1852.3,1098.9 1852.7,1098.6 1853.2,1098.4 1853.6,1098.2 1854.1,1098.0 1854.5,1097.7 1855.0,1097.5 1855.5,1097.3 1855.9,1097.0 1856.4,1096.8 1856.8,1096.6 1857.3,1096.4 1857.7,1096.1 1858.2,1095.9 1858.6,1095.7 1859.1,1095.5 1859.5,1095.2 1860.0,1095.0 1860.5,1090.8 1860.9,1086.5 1861.4,1082.3 1861.8,1078.1 1862.3,1073.8 1862.8,1069.6 1863.2,1065.4 1863.7,1061.2 1864.2,1056.9 1864.6,1052.7 1865.1,1048.5 1865.5,1044.2 1866.0,1040.0 1866.5,1035.3 1867.0,1033.8 1867.5,1032.5 1868.0,1035.3 1868.5,1034.0 1869.0,1025.1 1869.5,1030.4 1870.0,1028.3 1870.5,1032.7 1870.9,1033.6 1871.4,1044.9 1871.8,1049.0 1872.3,1049.0 1872.8,1053.6 1873.2,1061.7 1873.7,1068.7 1874.2,1069.7 1874.6,1082.5 1875.1,1085.6 1875.5,1089.7 1876.0,1094.9 1876.5,1091.8 1876.9,1097.0 1877.4,1096.9 1877.8,1091.2 1878.3,1097.5 1878.8,1093.8 1879.2,1098.5 1879.7,1093.7 1880.2,1092.7 1880.6,1092.6 1881.1,1093.7 1881.5,1091.6 1882.0,1092.3 1882.5,1088.0 1882.9,1081.8 1883.4,1075.0 1883.8,1064.8 1884.3,1057.1 1884.7,1051.3 1885.2,1050.5 1885.6,1037.5 1886.1,1035.1 1886.5,1027.3 1887.0,1020.8 1887.5,1029.9 1887.9,1030.8 1888.4,1040.7 1888.8,1045.6 1889.3,1050.8 1889.7,1057.4 1890.2,1062.2 1890.6,1067.7 1891.1,1080.6 1891.5,1084.8 1892.0,1087.4 1892.5,1085.9 1893.0,1074.5 1893.5,1071.8 1894.0,1064.7 1894.5,1059.9 1895.0,1050.3 1895.5,1048.1 1896.0,1039.8 1896.5,1046.8 1897.0,1053.3 1897.5,1063.6 1898.0,1071.7 1898.5,1084.0 1899.0,1095.4 1899.5,1086.3 1900.0,1076.8 1900.5,1066.5 1901.0,1056.7 1901.5,1052.3 1902.0,1042.6 1902.5,1033.9 1903.0,1024.5 1903.5,1027.2 1903.9,1026.4 1904.4,1024.6 1904.8,1026.4 1905.3,1026.7 1905.8,1027.4 1906.2,1033.1 1906.7,1032.5 1907.2,1032.5 1907.6,1032.1 1908.1,1033.2 1908.5,1031.0 1909.0,1034.8 1909.5,1042.6 1910.0,1047.6 1910.4,1055.7 1910.9,1066.5 1911.4,1072.7 1911.8,1072.9 1912.3,1086.7 1912.8,1092.4 1913.3,1088.2 1913.7,1083.9 1914.2,1074.8 1914.6,1069.9 1915.1,1069.7 1915.5,1066.9 1916.0,1056.8 1916.5,1052.8 1916.9,1057.0 1917.4,1053.5 1917.8,1045.0 1918.3,1046.3 1918.7,1038.8 1919.2,1039.8 1919.6,1029.9 1920.1,1031.4 1920.5,1025.1 1921.0,1025.1 1921.5,1020.0 1921.9,1024.8 1922.4,1020.3 1922.8,1022.8 1923.3,1019.7 1923.7,1022.0 1924.2,1020.0 1924.6,1021.2 1925.1,1022.1 1925.5,1023.5 1926.0,1023.1 1926.5,1027.5 1926.9,1035.4 1927.4,1037.1 1927.8,1040.2 1928.3,1049.8 1928.7,1052.5 1929.2,1062.4 1929.6,1063.3 1930.1,1065.6 1930.5,1073.5 1931.0,1083.7 1931.5,1072.9 1932.0,1068.8 1932.5,1058.3 1933.0,1053.4 1933.5,1042.2 1934.0,1036.4 1934.5,1028.7 1935.0,1024.2 1935.5,1023.3 1935.9,1024.9 1936.4,1025.4 1936.8,1021.8 1937.3,1021.8 1937.7,1019.6 1938.2,1020.1 1938.6,1021.9 1939.1,1025.7 1939.5,1019.8 1940.0,1021.3 1940.5,1017.6 1940.9,1021.8 1941.4,1020.0 1941.8,1018.8 1942.3,1018.8 1942.8,1017.4 1943.2,1018.0 1943.7,1015.8 1944.2,1019.5 1944.6,1020.8 1945.1,1020.2 1945.5,1015.4 1946.0,1012.1 1946.5,1018.5 1946.9,1016.4 1947.4,1017.5 1947.8,1018.7 1948.3,1020.3 1948.7,1018.3 1949.2,1018.0 1949.6,1016.0 1950.1,1015.6 1950.5,1017.0 1951.0,1017.2 1951.5,1030.6 1951.9,1034.7 1952.4,1037.5 1952.8,1046.9 1953.3,1054.8 1953.7,1065.2 1954.2,1068.9 1954.6,1077.1 1955.1,1083.8 1955.5,1090.9 1956.0,1098.0 1956.5,1098.1 1956.9,1098.2 1957.4,1098.2 1957.8,1098.3 1958.3,1098.4 1958.8,1098.5 1959.2,1098.5 1959.7,1098.6 1960.2,1098.7 1960.6,1098.8 1961.1,1098.8 1961.5,1098.9 1962.0,1099.0 1962.5,1099.1 1962.9,1099.2 1963.4,1099.2 1963.8,1099.3 1964.3,1099.4 1964.8,1099.5 1965.2,1099.5 1965.7,1099.6 1966.2,1099.7 1966.6,1099.8 1967.1,1099.8 1967.5,1099.9 1968.0,1100.0 1968.5,1090.0 1969.0,1080.0 1969.5,1070.0 1970.0,1060.0 1970.5,1050.0 1971.0,1040.0 1971.5,1030.0 1972.0,1020.0 1972.5,1020.2 1972.9,1020.5 1973.4,1020.7 1973.9,1020.9 1974.4,1021.2 1974.8,1021.4 1975.3,1021.6 1975.8,1021.9 1976.2,1022.1 1976.7,1022.4 1977.2,1022.6 1977.6,1022.8 1978.1,1023.1 1978.6,1023.3 1979.1,1023.5 1979.5,1023.8 1980.0,1024.0 1980.5,1027.3 1980.9,1030.5 1981.4,1033.8 1981.8,1037.1 1982.3,1040.4 1982.7,1043.6 1983.2,1046.9 1983.6,1050.2 1984.1,1053.5 1984.5,1056.7 1985.0,1060.0 1985.5,1063.1 1985.9,1066.2 1986.4,1069.2 1986.8,1072.3 1987.3,1075.4 1987.8,1078.5 1988.2,1081.5 1988.7,1084.6 1989.2,1087.7 1989.6,1090.8 1990.1,1093.8 1990.5,1096.9 1991.0,1100.0 1991.5,1100.0 1991.9,1100.0 1992.4,1100.0 1992.8,1100.0 1993.3,1100.0 1993.8,1100.0 1994.2,1100.0 1994.7,1100.0 1995.1,1100.0 1995.6,1100.0 1996.0,1100.0 1996.5,1100.0 1997.0,1100.0 1997.4,1100.0 1997.9,1100.0 1998.3,1100.0 1998.8,1100.0 1999.2,1100.0 1999.7,1100.0 2000.2,1100.0 2000.6,1100.0 2001.1,1100.0 2001.5,1100.0 2002.0,1100.0 2002.5,1100.0 2002.9,1099.9 2003.3,1099.8 2003.8,1099.8 2004.2,1099.8 2004.7,1099.7 2005.2,1099.7 2005.6,1099.6 2006.0,1099.5 2006.5,1099.5 2007.0,1099.5 2007.4,1099.4 2007.8,1099.3 2008.3,1099.3 2008.8,1099.2 2009.2,1099.2 2009.7,1099.2 2010.1,1099.1 2010.5,1099.0 2011.0,1099.0 2011.5,1099.0 2011.9,1098.9 2012.3,1098.8 2012.8,1098.8 2013.2,1098.8 2013.7,1098.7 2014.2,1098.7 2014.6,1098.6 2015.0,1098.5 2015.5,1098.5 2016.0,1098.5 2016.4,1098.4 2016.8,1098.3 2017.3,1098.3 2017.8,1098.2 2018.2,1098.2 2018.7,1098.2 2019.1,1098.1 2019.5,1098.0 2020.0,1098.0 2020.5,1092.8 2020.9,1087.5 2021.4,1082.3 2021.8,1077.1 2022.3,1071.8 2022.8,1066.6 2023.2,1061.4 2023.7,1056.2 2024.2,1050.9 2024.6,1045.7 2025.1,1040.5 2025.5,1035.2 2026.0,1030.0 2026.5,1035.4 2026.9,1040.8 2027.4,1046.2 2027.8,1051.5 2028.3,1056.9 2028.8,1062.3 2029.2,1067.7 2029.7,1073.1 2030.2,1078.5 2030.6,1083.8 2031.1,1089.2 2031.5,1094.6 2032.0,1100.0 2032.5,1070.3 2032.9,1040.7 2033.4,1011.0 2033.9,1028.4 2034.4,1045.8 2035.0,1063.2 2035.5,1080.6 2036.0,1098.0 2036.5,1087.2 2036.9,1076.5 2037.4,1065.8 2037.8,1055.0 2038.3,1044.2 2038.8,1033.5 2039.2,1022.8 2039.7,1012.0 2040.2,1024.6 2040.6,1037.1 2041.1,1049.7 2041.6,1062.3 2042.1,1074.9 2042.5,1087.4 2043.0,1100.0 2043.5,1100.1 2043.9,1100.3 2044.4,1100.4 2044.8,1100.5 2045.3,1100.7 2045.7,1100.8 2046.2,1101.0 2046.6,1101.1 2047.1,1101.2 2047.5,1101.4 2048.0,1101.5 2048.5,1101.6 2048.9,1101.8 2049.4,1101.9 2049.8,1102.0 2050.3,1102.2 2050.7,1102.3 2051.2,1102.5 2051.6,1102.6 2052.1,1102.7 2052.5,1102.9 2053.0,1103.0 2053.4,1103.0 2053.9,1103.0 2054.3,1103.0 2054.8,1103.0 2055.2,1103.0 2055.7,1103.0 2056.2,1103.0 2056.6,1103.0 2057.1,1103.0 2057.5,1103.0 2057.9,1103.0 2058.4,1103.0 2058.8,1103.0 2059.3,1103.0 2059.8,1103.0 2060.2,1103.0 2060.7,1103.0 2061.1,1103.0 2061.6,1103.0 2062.0,1103.0 2062.4,1103.0 2062.9,1103.0 2063.3,1103.0 2063.8,1103.0 2064.2,1103.0 2064.7,1103.0 2065.2,1103.0 2065.6,1103.0 2066.1,1103.0 2066.5,1103.0 2066.9,1103.0 2067.4,1103.0 2067.8,1103.0 2068.3,1103.0 2068.8,1103.0 2069.2,1103.0 2069.7,1103.0 2070.1,1103.0 2070.6,1103.0 2071.0,1103.0 2071.4,1103.0 2071.9,1103.0 2072.3,1103.0 2072.8,1103.0 2073.2,1103.0 2073.7,1103.0 2074.2,1103.0 2074.6,1103.0 2075.1,1103.0 2075.5,1103.0 2075.9,1103.0 2076.4,1103.0 2076.8,1103.0 2077.3,1103.0 2077.8,1103.0 2078.2,1103.0 2078.7,1103.0 2079.1,1103.0 2079.6,1103.0 2080.0,1103.0 2080.4,1103.0 2080.9,1103.0 2081.3,1103.0 2081.8,1103.0 2082.2,1103.0 2082.7,1103.0 2083.2,1103.0 2083.6,1103.0 2084.1,1103.0 2084.5,1103.0 2084.9,1103.0 2085.4,1103.0 2085.8,1103.0 2086.3,1103.0 2086.8,1103.0 2087.2,1103.0 2087.7,1103.0 2088.1,1103.0 2088.6,1103.0 2089.0,1103.0 2089.6,1003.0 2090.1,1053.0 2090.5,1103.0 2091.0,1103.0 2091.4,1103.0 2091.9,1103.0 2092.3,1103.0 2092.8,1103.0 2093.2,1103.0 2093.7,1103.0 2094.1,1103.0 2094.6,1103.0 2095.0,1103.0 2095.5,1103.0 2095.9,1103.0 2096.4,1103.0 2096.9,1103.0 2097.3,1103.0 2097.8,1103.0 2098.2,1103.0 2098.7,1103.0 2099.1,1103.0 2099.6,1103.0 2100.0,1103.0 2100.5,1103.0 2100.9,1103.0 2101.4,1103.0 2101.8,1103.0 2102.3,1103.0 2102.8,1103.0 2103.2,1103.0 2103.7,1103.0 2104.1,1103.0 2104.6,1103.0 2105.0,1103.0 2105.5,1103.0 2105.9,1103.0 2106.4,1103.0 2106.8,1103.0 2107.3,1103.0 2107.7,1103.0 2108.2,1103.0 2108.6,1103.0 2109.1,1103.0 2109.6,1103.0 2110.0,1103.0 2110.5,1103.0 2110.9,1103.0 2111.4,1103.0 2111.8,1103.0 2112.3,1103.0 2112.7,1103.0 2113.2,1103.0 2113.6,1103.0 2114.1,1103.0 2114.5,1103.0 2115.0,1103.0 2115.5,1096.6 2115.9,1090.2 2116.4,1083.8 2116.8,1077.5 2117.3,1071.1 2117.8,1064.7 2118.2,1058.3 2118.7,1051.9 2119.2,1045.5 2119.6,1039.2 2120.1,1032.8 2120.5,1026.4 2121.0,1020.0 2121.5,1019.6 2121.9,1019.3 2122.4,1018.9 2122.8,1018.5 2123.3,1018.2 2123.7,1017.8 2124.2,1017.5 2124.6,1017.1 2125.1,1016.7 2125.5,1016.4 2126.0,1016.0 2126.4,1016.3 2126.9,1016.6 2127.3,1016.9 2127.8,1017.2 2128.2,1017.5 2128.7,1017.8 2129.2,1018.1 2129.6,1018.4 2130.1,1018.7 2130.5,1019.0 2130.9,1019.3 2131.4,1019.6 2131.8,1019.9 2132.3,1020.2 2132.8,1020.5 2133.2,1020.8 2133.7,1021.1 2134.1,1021.4 2134.6,1021.7 2135.0,1022.0 2135.5,1023.2 2135.9,1024.4 2136.4,1025.5 2136.8,1026.7 2137.3,1027.9 2137.7,1029.1 2138.2,1030.3 2138.6,1031.5 2139.1,1032.6 2139.5,1033.8 2140.0,1035.0 2140.5,1040.8 2140.9,1046.6 2141.4,1052.5 2141.8,1058.3 2142.3,1064.1 2142.7,1069.9 2143.2,1075.7 2143.6,1081.5 2144.1,1087.4 2144.5,1093.2 2145.0,1099.0 2145.5,1092.9 2145.9,1086.8 2146.4,1080.7 2146.8,1074.6 2147.3,1068.5 2147.7,1062.5 2148.2,1056.4 2148.6,1050.3 2149.1,1044.2 2149.5,1038.1 2150.0,1027.8 2150.5,1028.3 2150.9,1023.4 2151.4,1035.5 2151.8,1029.6 2152.3,1033.5 2152.8,1030.1 2153.2,1020.8 2153.7,1023.5 2154.2,1023.9 2154.6,1031.7 2155.1,1023.3 2155.5,1033.9 2156.0,1030.3 2156.5,1030.3 2157.0,1029.3 2157.5,1034.1 2158.0,1029.6 2158.5,1027.2 2159.0,1042.7 2159.5,1037.4 2160.0,1048.2 2160.5,1045.2 2160.9,1043.3 2161.4,1041.7 2161.8,1047.4 2162.3,1040.4 2162.8,1043.4 2163.2,1043.8 2163.7,1053.7 2164.1,1057.1 2164.6,1042.7 2165.0,1042.4 2165.5,1049.3 2166.0,1056.3 2166.4,1052.9 2166.9,1059.7 2167.3,1064.4 2167.8,1060.0 2168.3,1060.8 2168.7,1052.2 2169.2,1061.0 2169.7,1062.6 2170.1,1055.6 2170.6,1053.4 2171.0,1065.9 2171.5,1072.4 2172.0,1067.0 2172.4,1059.8 2172.9,1072.7 2173.4,1063.5 2173.8,1064.8 2174.3,1074.1 2174.8,1074.6 2175.2,1077.9 2175.7,1077.8 2176.1,1062.8 2176.6,1067.7 2177.1,1074.9 2177.5,1069.4 2178.0,1081.3 2178.5,1075.2 2178.9,1071.4 2179.4,1070.7 2179.8,1062.4 2180.3,1062.9 2180.7,1049.9 2181.2,1039.8 2181.6,1042.6 2182.1,1046.3 2182.5,1036.1 2183.0,1026.8 2183.5,1022.5 2183.9,1022.9 2184.4,1022.4 2184.9,1032.7 2185.3,1025.6 2185.8,1027.2 2186.3,1036.7 2186.7,1024.8 2187.2,1030.4 2187.7,1024.6 2188.1,1025.0 2188.6,1025.5 2189.1,1025.5 2189.5,1019.4 2190.0,1028.6 2190.4,1026.8 2190.9,1018.6 2191.3,1033.9 2191.8,1034.0 2192.2,1020.9 2192.7,1021.9 2193.2,1029.7 2193.6,1024.5 2194.1,1025.4 2194.5,1028.8 2194.9,1028.3 2195.4,1019.4 2195.8,1023.2 2196.3,1028.8 2196.8,1029.9 2197.2,1029.4 2197.7,1028.0 2198.1,1025.2 2198.6,1013.7 2199.0,1019.6 2199.5,1027.1 2199.9,1020.1 2200.4,1018.3 2200.8,1029.2 2201.3,1033.8 2201.8,1039.2 2202.2,1035.8 2202.7,1032.2 2203.2,1026.0 2203.6,1039.1 2204.1,1044.3 2204.5,1038.9 2205.0,1041.1 2205.5,1035.4 2205.9,1042.2 2206.4,1049.8 2206.8,1056.4 2207.3,1050.5 2207.7,1062.3 2208.2,1059.1 2208.6,1061.8 2209.1,1064.5 2209.5,1067.3 2210.0,1070.0 2210.5,1072.3 2210.9,1074.5 2211.4,1076.8 2211.8,1079.1 2212.3,1081.4 2212.7,1083.6 2213.2,1085.9 2213.6,1088.2 2214.1,1090.5 2214.5,1092.7 2215.0,1095.0 2215.5,1094.5 2215.9,1093.9 2216.4,1093.4 2216.8,1092.8 2217.3,1092.3 2217.7,1091.7 2218.2,1091.2 2218.6,1090.6 2219.1,1090.1 2219.5,1089.5 2220.0,1089.0 2220.5,1089.2 2220.9,1089.5 2221.4,1089.8 2221.9,1090.0 2222.3,1090.2 2222.8,1090.5 2223.3,1090.8 2223.8,1091.0 2224.2,1091.2 2224.7,1091.5 2225.2,1093.1 2225.7,1094.7 2226.2,1096.2 2226.8,1097.8 2227.3,1099.4 2227.8,1101.0 2228.4,1097.0 2228.9,1093.0 2229.4,1089.0 2230.0,1085.0 2230.5,1079.5 2230.9,1074.0 2231.4,1068.5 2231.8,1063.0 2232.3,1060.3 2232.7,1053.8 2233.2,1036.9 2233.7,1048.0 2234.1,1025.5 2234.6,1029.9 2235.0,1040.1 2235.5,1034.8 2236.0,1037.5 2236.5,1013.8 2236.9,1036.9 2237.4,1023.2 2237.9,1013.8 2238.4,1037.5 2238.8,1039.6 2239.3,1040.6 2239.8,1021.2 2240.3,1017.3 2240.7,1040.0 2241.2,1033.5 2241.7,1040.6 2242.2,1039.6 2242.8,1053.0 2243.3,1050.1 2243.8,1052.3 2244.3,1054.9 2244.9,1038.5 2245.4,1053.5 2245.9,1036.7 2246.4,1053.6 2246.9,1039.5 2247.4,1042.0 2247.9,1021.2 2248.5,1031.1 2249.0,1028.3 2249.5,1019.3 2250.0,1031.5 2250.5,1032.3 2251.1,1030.1 2251.6,1037.4 2252.1,1059.3 2252.6,1041.3 2253.1,1058.4 2253.5,1069.3 2254.0,1039.4 2254.4,1063.4 2254.9,1046.5 2255.4,1049.7 2255.8,1055.2 2256.3,1076.3 2256.7,1076.5 2257.2,1052.9 2257.7,1077.2 2258.2,1069.9 2258.8,1071.8 2259.3,1073.7 2259.8,1075.7 2260.3,1077.6 2260.8,1080.8 2261.3,1084.1 2261.9,1087.3 2262.4,1090.5 2262.9,1093.8 2263.4,1097.0 2263.9,1097.5 2264.3,1097.9 2264.8,1098.4 2265.3,1098.8 2265.8,1099.3 2266.2,1099.8 2266.7,1100.2 2267.2,1100.7 2267.6,1101.1 2268.1,1101.6 2268.6,1101.2 2269.1,1100.9 2269.5,1100.5 2270.0,1100.2 2270.5,1099.8 2271.0,1099.5 2271.4,1099.1 2271.9,1098.8 2272.4,1098.4 2272.9,1098.1 2273.3,1097.7 2273.8,1097.4 2274.3,1097.0 2274.8,1092.5 2275.3,1087.9 2275.9,1083.4 2276.4,1078.9 2276.9,1074.3 2277.4,1069.8 2277.9,1064.6 2278.4,1059.5 2278.9,1054.3 2279.5,1049.1 2280.0,1044.0 2280.5,1023.8 2280.9,1034.7 2281.4,1058.7 2281.8,1055.4 2282.3,1028.6 2282.8,1046.0 2283.2,1041.7 2283.7,1051.9 2284.1,1059.4 2284.6,1049.6 2285.0,1064.0 2285.5,1063.7 2285.9,1038.3 2286.4,1034.0 2286.9,1038.6 2287.4,1049.2 2287.9,1055.5 2288.3,1060.7 2288.8,1055.8 2289.3,1052.5 2289.8,1050.1 2290.3,1056.9 2290.8,1052.6 2291.3,1066.9 2291.8,1078.0 2292.2,1083.6 2292.7,1083.5 2293.2,1086.8 2293.7,1069.9 2294.2,1077.8 2294.7,1081.1 2295.2,1074.5 2295.8,1069.3 2296.3,1074.4 2296.8,1089.6 2297.3,1061.5 2297.8,1077.7 2298.4,1036.5 2298.9,1043.7 2299.4,1046.7 2299.9,1040.2 2300.4,1012.5 2300.9,1015.2 2301.4,1012.7 2301.9,1029.5 2302.3,1011.6 2302.8,1021.5 2303.3,1016.4 2303.8,1009.0 2304.3,1019.8 2304.8,1022.9 2305.3,1029.0 2305.8,1021.6 2306.2,1012.6 2306.7,1022.9 2307.2,1037.0 2307.7,1013.1 2308.2,1033.7 2308.6,1017.6 2309.1,1049.9 2309.6,1027.8 2310.1,1041.9 2310.6,1027.9 2311.0,1046.3 2311.5,1057.0 2312.0,1064.0 2312.5,1062.1 2313.1,1068.4 2313.6,1039.1 2314.1,1070.4 2314.6,1045.8 2315.1,1080.5 2315.6,1090.2 2316.1,1077.5 2316.7,1082.7 2317.2,1087.9 2317.7,1093.1 2318.2,1094.2 2318.6,1095.3 2319.1,1096.4 2319.5,1097.6 2320.0,1098.7 2320.4,1099.8 2320.9,1100.9 2321.4,1097.3 2321.9,1093.7 2322.3,1090.1 2322.8,1086.6 2323.3,1083.0 2323.8,1079.4 2324.2,1075.8 2324.7,1072.2 2325.2,1068.6 2325.7,1065.1 2326.1,1061.5 2326.6,1057.9 2327.1,1054.3 2327.6,1053.7 2328.1,1053.0 2328.6,1052.3 2329.2,1051.7 2329.7,1051.1 2330.2,1050.4 2330.7,1055.3 2331.1,1060.2 2331.6,1065.1 2332.0,1070.0 2332.5,1074.8 2333.0,1079.7 2333.4,1084.6 2333.9,1089.5 2334.3,1094.4 2334.8,1099.3 2335.3,1099.6 2335.8,1099.8 2336.4,1100.1 2336.9,1100.4 2337.4,1100.6 2337.9,1100.9 2338.4,1090.6 2338.9,1080.2 2339.4,1069.8 2340.0,1059.5 2340.5,1054.4 2341.0,1041.4 2341.5,1042.5 2342.0,1025.0 2342.6,1041.7 2343.1,1021.2 2343.6,1022.9 2344.1,1021.7 2344.6,1031.6 2345.0,1024.4 2345.5,1024.0 2346.0,1026.7 2346.4,1032.6 2346.9,1034.5 2347.4,1034.5 2347.8,1020.9 2348.3,1015.2 2348.7,1016.1 2349.2,1016.4 2349.7,1031.4 2350.1,1015.4 2350.6,1031.4 2351.1,1013.1 2351.5,1029.4 2352.0,1024.8" fill="none" stroke="#7c6cf0" stroke-width="2.0" stroke-linejoin="round" stroke-linecap="round"/><polyline clip-path="url(#cp3)" points="1222.2,1097.4 1225.6,1021.3 1230.1,1025.8 1234.6,1100.8 1239,1020.2 1243.5,1025.8 1246.9,1098.6 1249.1,1021.3 1253.6,1010.1 1267,1021.3 1271.5,1042.6 1274.9,1101.9 1282.7,1100.8 1287.2,1094.1 1290.6,1100.8 1294.5,1022.4 1298.4,1100.8 1302.3,1023.5 1308.5,1098.6 1313,1024.6 1317.4,1035.8 1321.4,1101.9 1326.4,1025.8 1330.9,1042.6 1334.2,1044.8 1337.6,1098.6 1339.8,1021.3 1345.4,1017.9 1354.4,1017.9 1361.1,1025.8 1365.6,1095.2 1371.2,1101.9 1376.8,1062.7 1380.2,1101.9 1384.6,1021.3 1389.1,1101.9 1394.7,1028 1398.1,1101.9 1401.4,1026.9 1405.9,1094.1 1410.4,1101.9 1427.2,1102.5 1437,1103 1437.3,1003 1438,1103 1441.4,1103 1441.7,1003 1442.2,1103 1445.9,1103 1446.2,1003 1446.7,1103 1468.3,1103 1468.6,1003 1469.2,1103 1471.7,1103 1472,1003 1472.6,1103 1846,1103 1846.3,1003 1846.8,1103 1850.4,1103 1851,1003 1851.4,1103 1855.6,1095.7 1860.8,1093.6 1865,1098.8 1869.6,1018.7 1875.4,1097.8 1880,1054.1 1882.6,1096.7 1886.3,1015.6 1891,1086.3 1895.1,1034.3 1897.7,1091.5 1902.4,1020.8 1908.6,1031.2 1913.8,1069.7 1920.6,1020.8 1925.3,1020.8 1930.5,1080.1 1934.6,1020.8 1939.8,1021.8 1946.1,1014.6 1951.3,1017.7 1956.5,1097.8 1967.9,1099.8 1972.1,1018.7 1980.4,1021.8 1990.8,1098.8 2002.2,1098.8 2019.9,1096.7 2026.2,1025 2031.4,1099.8 2035.5,1034.3 2041.8,1099.8 2053.2,1103.3 2095.9,1103.3 2096.6,1003 2097.2,1103 2101.5,1103 2101.8,1003 2102.3,1103 2110.3,1103 2110.6,1003 2111.2,1103 2115.8,1103 2117.9,1093.6 2121,1016.6 2126.2,1013 2134.5,1018.7 2139.7,1031.2 2146,1083.2 2149.1,1029.1 2155.3,1022.9 2159.5,1031.2 2163.6,1090.5 2169.9,1094.6 2174,1090.5 2178.2,1039.5 2183.4,1022.9 2188.6,1027 2199,1023.9 2205.2,1037.4 2209.4,1090.5 2214.6,1095.7 2224,1097.8 2230.2,1082.2 2236.4,1027 2241.6,1021.8 2250,1026 2254.1,1055.1 2259.3,1091.5 2266.6,1098.8 2273.9,1098.8 2280.1,1062.4 2283.2,1025 2292.6,1022.4 2299.9,1025 2305.1,1072.8 2308.2,1097.8 2313.4,1091.5 2317.6,1099.8 2323.8,1019.8 2330.1,1052 2334.2,1095.7 2336.3,1031.2 2338.4,1031.2 2343.6,1098.8 2349.8,1023.9 2352,1020" fill="none" stroke="#10e6f4" stroke-width="2.6" stroke-linejoin="round" stroke-linecap="round"/><polyline clip-path="url(#cp3)" points="1488.8,1003 1488.8,1056" fill="none" stroke="#10e6f4" stroke-width="2.6" stroke-linejoin="round" stroke-linecap="round"/><polyline clip-path="url(#cp4)" points="1221,1159.5 1272,1159.5 1278,1162.6 1336.5,1162.6 1338.6,1165.8 1448.8,1165.8 1450,1159.5 1840,1159.5 1851,1159.5 1852,1164 1880,1164 1881.5,1159.5 1933.6,1159.5 1936,1162.6 1969,1162.6 1972,1171 2095.8,1171 2103.3,1160 2315.5,1160 2318.6,1162.6 2352,1162.6" fill="none" stroke="#ff1414" stroke-width="2.6" stroke-linejoin="round" stroke-linecap="round"/><polyline clip-path="url(#cp4)" points="1221,1164.7 1243.9,1164.7 1251.2,1156.4 1253.3,1161.6 1272,1161.6 1275.1,1155.4 1278.2,1163.7 1299,1163.7 1302.2,1165.2 1336.5,1165.2 1338.6,1160.6 1448.8,1161.1 1450.9,1162.6 1840,1162.6 1850,1162.6 1851,1150 1852.5,1164 1863,1164 1864.5,1157 1866,1164 1937,1164 1940,1158.5 1945,1162 1950,1165 2095,1166 2100.2,1168.9 2103.3,1158.5 2315.5,1158.5 2317.6,1154.3 2319.6,1159.5 2342.5,1159.5 2345.7,1163.7 2352,1163.7" fill="none" stroke="#ff9414" stroke-width="2.6" stroke-linejoin="round" stroke-linecap="round"/><polyline clip-path="url(#cp4)" points="1221.0,1144.6 1223.1,1148.8 1225.2,1152.6 1226.9,1155.2 1228.7,1155.7 1230.4,1157.5 1232.0,1153.9 1233.5,1150.4 1235.0,1145.8 1236.6,1141.2 1238.4,1147.5 1240.2,1153.3 1242.1,1159.4 1243.9,1164.2 1245.8,1160.6 1247.6,1155.7 1250.2,1166.6 1252.2,1166.0 1254.3,1167.9 1255.9,1168.8 1257.4,1170.6 1259.0,1172.3 1260.6,1173.7 1262.1,1175.3 1263.7,1176.9 1265.8,1176.7 1267.8,1176.9 1269.5,1171.2 1271.2,1166.5 1272.8,1161.7 1274.5,1158.5 1276.2,1153.8 1278.2,1155.9 1280.3,1156.8 1282.4,1153.7 1284.5,1150.5 1286.2,1149.2 1287.8,1148.5 1289.5,1146.6 1291.1,1146.7 1292.8,1145.1 1294.3,1143.9 1295.9,1142.5 1297.5,1141.0 1299.0,1139.0 1301.1,1142.4 1303.2,1146.0 1304.9,1143.9 1306.7,1143.4 1308.4,1141.3 1310.1,1143.8 1311.9,1145.1 1313.6,1147.3 1315.1,1144.8 1316.7,1142.8 1318.2,1141.9 1319.8,1140.3 1321.4,1139.8 1322.9,1140.1 1324.5,1141.9 1326.1,1142.2 1327.6,1143.0 1329.2,1143.9 1330.8,1144.1 1332.3,1145.7 1334.0,1143.8 1335.8,1141.9 1337.5,1140.5 1339.1,1141.9 1340.6,1142.8 1342.2,1143.4 1343.8,1145.6 1345.3,1146.9 1346.9,1147.6 1348.4,1149.5 1350.0,1151.7 1352.1,1155.6 1353.6,1156.6 1355.2,1156.8 1356.8,1156.4 1358.3,1157.7 1360.1,1155.7 1361.9,1155.9 1363.8,1154.0 1365.6,1154.1 1367.7,1147.9 1369.8,1144.3 1371.3,1142.5 1372.9,1142.9 1374.5,1142.1 1376.0,1140.8 1377.7,1139.5 1379.5,1137.6 1381.2,1136.4 1383.0,1135.5 1384.8,1135.4 1386.7,1134.5 1388.5,1134.8 1390.5,1136.6 1392.6,1138.5 1394.2,1137.7 1395.8,1137.9 1397.3,1137.1 1398.9,1136.4 1399.9,1155.2 1400.5,1156.2 1402.0,1156.9 1403.5,1156.9 1405.0,1156.9 1406.5,1156.9 1408.0,1156.9 1409.5,1156.9 1411.0,1156.9 1412.5,1156.9 1414.0,1156.9 1415.5,1156.9 1417.0,1156.9 1418.5,1156.9 1420.0,1156.9 1421.6,1156.9 1423.1,1156.9 1424.6,1156.9 1426.1,1156.9 1427.6,1156.9 1429.1,1156.9 1430.6,1156.9 1432.1,1156.9 1433.6,1156.9 1435.1,1156.9 1436.6,1156.9 1438.1,1156.9 1439.6,1156.9 1441.1,1156.9 1442.6,1156.9 1444.1,1156.9 1445.6,1156.9 1447.1,1156.9 1448.6,1156.9 1450.1,1156.9 1451.6,1156.9 1453.1,1156.9 1454.6,1156.9 1456.1,1156.9 1457.6,1156.9 1459.1,1156.9 1460.6,1156.9 1462.1,1156.9 1463.7,1156.9 1465.2,1156.9 1466.7,1156.9 1468.2,1156.9 1469.7,1156.9 1471.2,1156.9 1472.7,1156.9 1474.2,1156.9 1475.7,1156.9 1477.2,1156.9 1478.7,1156.9 1480.2,1156.9 1481.7,1156.9 1483.2,1156.9 1484.7,1156.9 1486.2,1156.9 1487.7,1156.9 1489.2,1156.9 1490.7,1156.9 1492.2,1156.9 1493.7,1156.9 1495.2,1156.9 1496.7,1156.9 1498.2,1156.9 1499.7,1156.9 1501.2,1156.9 1502.7,1156.9 1504.3,1156.9 1505.8,1156.9 1507.3,1156.9 1508.8,1156.9 1510.3,1156.9 1511.8,1156.9 1513.3,1156.9 1514.8,1156.9 1516.3,1156.9 1517.8,1156.9 1519.3,1156.9 1520.8,1156.9 1522.3,1156.9 1523.8,1156.9 1525.3,1156.9 1526.8,1156.9 1528.3,1156.9 1529.8,1156.9 1531.3,1156.9 1532.8,1156.9 1534.3,1156.9 1535.8,1156.9 1537.3,1156.9 1538.8,1156.9 1540.3,1156.9 1541.8,1156.9 1543.3,1156.9 1544.8,1156.9 1546.4,1156.9 1547.9,1156.9 1549.4,1156.9 1550.9,1156.9 1552.4,1156.9 1553.9,1156.9 1555.4,1156.9 1556.9,1156.9 1558.4,1156.9 1559.9,1156.9 1561.4,1156.9 1562.9,1156.9 1564.4,1156.9 1565.9,1156.9 1567.4,1156.9 1568.9,1156.9 1570.4,1156.9 1571.9,1156.9 1573.4,1156.9 1574.9,1156.9 1576.4,1156.9 1577.9,1156.9 1579.4,1156.9 1580.9,1156.9 1582.4,1156.9 1583.9,1156.9 1585.4,1156.9 1587.0,1156.9 1588.5,1156.9 1590.0,1156.9 1591.5,1156.9 1593.0,1156.9 1594.5,1156.9 1596.0,1156.9 1597.5,1156.9 1599.0,1156.9 1600.5,1156.9 1602.0,1156.9 1603.5,1156.9 1605.0,1156.9 1606.5,1156.9 1608.0,1156.9 1609.5,1156.9 1611.0,1156.9 1612.5,1156.9 1614.0,1156.9 1615.5,1156.9 1617.0,1156.9 1618.5,1156.9 1620.0,1156.9 1621.5,1156.9 1623.0,1156.9 1624.5,1156.9 1626.0,1156.9 1627.5,1156.9 1629.1,1156.9 1630.6,1156.9 1632.1,1156.9 1633.6,1156.9 1635.1,1156.9 1636.6,1156.9 1638.1,1156.9 1639.6,1156.9 1641.1,1156.9 1642.6,1156.9 1644.1,1156.9 1645.6,1156.9 1647.1,1156.9 1648.6,1156.9 1650.1,1156.9 1651.6,1156.9 1653.1,1156.9 1654.6,1156.9 1656.1,1156.9 1657.6,1156.9 1659.1,1156.9 1660.6,1156.9 1662.1,1156.9 1663.6,1156.9 1665.1,1156.9 1666.6,1156.9 1668.1,1156.9 1669.7,1156.9 1671.2,1156.9 1672.7,1156.9 1674.2,1156.9 1675.7,1156.9 1677.2,1156.9 1678.7,1156.9 1680.2,1156.9 1681.7,1156.9 1683.2,1156.9 1684.7,1156.9 1686.2,1156.9 1687.7,1156.9 1689.2,1156.9 1690.7,1156.9 1692.2,1156.9 1693.7,1156.9 1695.2,1156.9 1696.7,1156.9 1698.2,1156.9 1699.7,1156.9 1701.2,1156.9 1702.7,1156.9 1704.2,1156.9 1705.7,1156.9 1707.2,1156.9 1708.7,1156.9 1710.3,1156.9 1711.8,1156.9 1713.3,1156.9 1714.8,1156.9 1716.3,1156.9 1717.8,1156.9 1719.3,1156.9 1720.8,1156.9 1722.3,1156.9 1723.8,1156.9 1725.3,1156.9 1726.8,1156.9 1728.3,1156.9 1729.8,1156.9 1731.3,1156.9 1732.8,1156.9 1734.3,1156.9 1735.8,1156.9 1737.3,1156.9 1738.8,1156.9 1740.3,1156.9 1741.8,1156.9 1743.3,1156.9 1744.8,1156.9 1746.3,1156.9 1747.8,1156.9 1749.3,1156.9 1750.8,1156.9 1752.4,1156.9 1753.9,1156.9 1755.4,1156.9 1756.9,1156.9 1758.4,1156.9 1759.9,1156.9 1761.4,1156.9 1762.9,1156.9 1764.4,1156.9 1765.9,1156.9 1767.4,1156.9 1768.9,1156.9 1770.4,1156.9 1771.9,1156.9 1773.4,1156.9 1774.9,1156.9 1776.4,1156.9 1777.9,1156.9 1779.4,1156.9 1780.9,1156.9 1782.4,1156.9 1783.9,1156.9 1785.4,1156.9 1786.9,1156.9 1788.4,1156.9 1789.9,1156.9 1791.4,1156.9 1793.0,1156.9 1794.5,1156.9 1796.0,1156.9 1797.5,1156.9 1799.0,1156.9 1800.5,1156.9 1802.0,1156.9 1803.5,1156.9 1805.0,1156.9 1806.5,1156.9 1808.0,1156.9 1809.5,1156.9 1811.0,1156.9 1812.5,1156.9 1814.0,1156.9 1815.5,1156.9 1817.0,1156.9 1818.5,1156.9 1820.0,1156.9 1821.5,1156.9 1823.0,1156.9 1824.5,1156.9 1826.0,1156.9 1827.5,1156.9 1829.0,1156.9 1830.5,1156.9 1832.0,1156.9 1833.5,1156.9 1835.1,1156.9 1836.6,1156.9 1838.1,1156.9 1839.6,1156.9 1841.1,1156.9 1842.6,1156.9 1844.1,1156.9 1845.6,1156.9 1847.1,1156.9 1848.6,1156.9 1850.1,1156.9 1851.6,1156.9 1853.1,1156.4 1854.6,1157.5 1856.2,1153.3 1857.7,1149.6 1859.5,1148.8 1861.3,1145.6 1863.2,1144.0 1865.0,1141.7 1866.7,1144.0 1868.5,1147.2 1870.2,1150.7 1872.2,1147.1 1874.3,1144.5 1876.0,1143.1 1877.8,1143.3 1879.5,1143.8 1881.6,1139.5 1883.7,1134.5 1885.8,1137.8 1887.8,1142.3 1889.9,1141.4 1892.0,1140.0 1893.5,1141.0 1895.1,1143.8 1896.8,1141.0 1898.6,1138.6 1900.3,1136.0 1902.4,1139.4 1904.5,1142.7 1906.5,1146.0 1908.6,1148.8 1910.3,1147.0 1912.0,1144.2 1913.6,1142.3 1915.3,1140.5 1917.0,1139.5 1918.5,1142.2 1920.1,1143.2 1921.7,1145.8 1923.2,1148.2 1925.3,1152.1 1927.4,1156.5 1929.1,1154.8 1930.9,1153.7 1932.6,1153.0 1934.3,1155.8 1936.1,1159.2 1937.8,1161.5 1939.5,1161.0 1941.3,1161.1 1943.0,1161.2 1944.7,1165.6 1946.3,1168.2 1948.0,1172.3 1949.6,1176.4 1951.3,1179.2 1953.0,1176.8 1954.6,1175.8 1956.3,1173.8 1957.9,1170.3 1959.6,1169.4 1961.3,1168.6 1963.1,1166.5 1964.8,1165.6 1966.9,1158.9 1969.0,1152.5 1971.0,1157.9 1973.1,1161.9 1974.8,1162.9 1976.6,1164.1 1978.3,1166.2 1980.0,1167.5 1981.8,1167.5 1983.5,1168.6 1985.1,1166.4 1986.7,1165.0 1988.2,1162.9 1989.8,1159.5 1991.5,1157.4 1993.1,1155.7 1994.8,1154.5 1996.4,1152.6 1998.1,1150.7 1999.8,1148.5 2001.6,1146.6 2003.3,1145.3 2005.0,1145.2 2006.8,1143.1 2008.5,1141.5 2010.2,1140.0 2011.8,1138.0 2013.5,1137.6 2015.1,1135.1 2016.8,1133.5 2018.4,1133.5 2019.9,1134.6 2021.5,1134.7 2023.1,1136.3 2024.6,1136.7 2026.2,1136.9 2027.9,1135.7 2029.7,1134.9 2031.4,1132.8 2033.2,1133.6 2035.0,1134.7 2036.8,1134.8 2038.6,1134.3 2040.7,1156.7 2042.2,1156.9 2043.8,1156.9 2045.3,1156.9 2046.8,1156.9 2048.4,1156.8 2049.9,1156.8 2051.4,1156.8 2052.9,1156.8 2054.5,1156.8 2056.0,1156.8 2057.5,1156.8 2059.1,1156.8 2060.6,1156.8 2062.1,1156.7 2063.7,1156.7 2065.2,1156.7 2066.7,1156.7 2068.3,1156.7 2069.8,1156.7 2071.3,1156.7 2072.9,1156.7 2074.4,1156.7 2075.9,1156.6 2077.4,1156.6 2079.0,1156.6 2080.5,1156.6 2082.0,1156.6 2083.6,1156.6 2085.1,1156.6 2086.6,1156.6 2088.2,1156.6 2089.7,1156.5 2091.2,1156.5 2092.8,1156.5 2094.3,1156.5 2095.8,1156.5 2097.4,1156.5 2098.9,1156.5 2100.4,1156.5 2101.9,1156.5 2103.5,1156.4 2105.0,1156.4 2106.5,1156.4 2108.1,1155.8 2109.6,1155.6 2111.6,1150.9 2113.2,1148.9 2114.8,1149.1 2116.3,1147.3 2117.9,1146.9 2119.7,1149.7 2121.6,1151.7 2123.4,1154.4 2125.2,1156.8 2126.8,1157.9 2128.3,1159.8 2129.9,1160.0 2131.4,1158.6 2132.9,1158.4 2134.5,1157.8 2136.1,1157.4 2137.6,1156.4 2139.2,1155.5 2140.8,1155.4 2142.3,1155.8 2143.9,1154.6 2145.4,1153.8 2147.0,1153.0 2148.7,1155.3 2150.5,1156.0 2152.2,1158.3 2153.9,1159.8 2155.7,1160.7 2157.4,1163.0 2159.1,1161.7 2160.9,1160.2 2162.6,1159.9 2164.3,1158.5 2166.1,1157.4 2167.8,1157.3 2169.5,1156.3 2171.3,1155.2 2173.0,1154.9 2174.7,1154.4 2176.5,1152.8 2178.2,1152.2 2179.9,1153.6 2181.7,1153.4 2183.4,1154.5 2185.1,1155.4 2186.9,1156.0 2188.6,1157.1 2190.2,1158.2 2191.7,1159.1 2193.2,1159.1 2194.8,1159.7 2196.4,1160.9 2197.9,1161.3 2199.5,1161.1 2201.1,1161.9 2202.6,1162.1 2204.2,1163.0 2205.8,1162.2 2207.3,1161.6 2208.9,1161.5 2210.4,1160.8 2212.0,1160.8 2213.6,1160.5 2215.1,1160.1 2216.7,1160.7 2218.3,1159.7 2219.8,1158.2 2221.4,1158.5 2222.9,1157.2 2224.5,1155.7 2226.1,1155.8 2227.6,1154.4 2229.2,1154.0 2230.7,1154.4 2232.3,1153.1 2234.0,1154.4 2235.6,1154.1 2237.3,1154.5 2238.9,1155.0 2240.6,1155.6 2242.4,1157.2 2244.2,1157.6 2246.1,1158.8 2247.9,1159.0 2249.5,1159.3 2251.0,1159.1 2252.6,1157.6 2254.2,1158.3 2255.7,1157.1 2257.3,1157.3 2258.8,1156.7 2260.4,1157.2 2262.1,1154.9 2263.9,1153.4 2265.6,1152.9 2267.3,1151.4 2269.1,1150.1 2270.8,1148.8 2272.4,1148.2 2274.0,1148.2 2275.6,1147.1 2277.2,1147.1 2278.9,1147.0 2280.5,1146.5 2282.1,1146.4 2283.7,1146.2 2285.3,1146.0 2286.9,1144.9 2288.4,1144.8 2290.0,1145.5 2291.6,1145.3 2293.1,1143.9 2294.7,1143.4 2296.2,1143.3 2297.8,1144.0 2299.4,1143.5 2301.1,1144.6 2302.7,1144.1 2304.4,1143.7 2306.0,1145.0 2307.7,1144.2 2309.3,1145.3 2311.0,1145.4 2312.7,1144.5 2314.4,1144.2 2316.2,1143.1 2317.9,1142.1 2319.6,1142.0 2321.2,1145.4 2322.8,1147.8 2324.3,1149.9 2325.9,1151.7 2327.5,1150.2 2329.2,1148.9 2330.8,1145.8 2332.4,1145.1 2334.0,1141.9 2335.7,1141.0 2337.3,1137.9 2339.1,1140.6 2340.9,1141.0 2342.8,1142.7 2344.6,1143.2 2346.4,1145.4 2348.3,1147.2 2350.2,1147.4 2352.0,1149.0" fill="none" stroke="#7c6cf0" stroke-width="2.6" stroke-linejoin="round" stroke-linecap="round"/><polyline clip-path="url(#cp4)" points="1221.0,1150.7 1222.8,1147.0 1224.7,1144.3 1226.6,1149.4 1228.5,1152.9 1230.4,1157.7 1232.0,1152.8 1233.5,1149.0 1235.0,1145.4 1236.6,1141.8 1238.4,1147.1 1240.2,1152.7 1242.1,1158.4 1243.9,1164.5 1245.8,1159.8 1247.6,1156.5 1250.2,1165.0 1252.2,1166.8 1254.3,1167.5 1255.9,1169.2 1257.4,1171.2 1259.0,1174.2 1260.6,1176.5 1262.4,1178.3 1264.2,1181.5 1266.0,1183.3 1267.8,1186.5 1269.5,1186.0 1271.3,1184.0 1273.0,1183.3 1274.6,1179.9 1276.2,1174.7 1277.8,1171.7 1279.3,1166.6 1280.9,1163.0 1282.4,1159.9 1284.1,1158.0 1285.9,1155.0 1287.6,1153.2 1289.4,1153.0 1291.2,1152.8 1293.1,1153.0 1294.9,1153.8 1296.6,1151.7 1298.4,1150.4 1300.1,1148.2 1302.2,1152.0 1304.2,1155.5 1305.9,1152.5 1307.7,1150.5 1309.4,1147.9 1311.5,1149.2 1313.6,1150.9 1315.4,1150.0 1317.2,1148.3 1319.1,1146.5 1320.9,1144.0 1322.7,1145.6 1324.6,1147.8 1326.4,1149.8 1328.2,1152.9 1330.2,1151.8 1332.3,1150.7 1334.4,1147.1 1336.5,1143.9 1338.2,1146.2 1339.8,1148.3 1341.5,1149.9 1343.1,1152.1 1344.8,1153.5 1346.5,1157.3 1348.3,1160.4 1350.0,1163.8 1351.6,1165.4 1353.1,1166.0 1354.7,1167.9 1356.3,1168.2 1357.8,1170.5 1359.4,1171.4 1361.0,1169.5 1362.5,1169.2 1364.0,1167.5 1365.6,1166.2 1367.4,1163.4 1369.2,1161.0 1371.1,1159.0 1372.9,1155.0 1374.6,1154.8 1376.4,1153.9 1378.1,1152.8 1379.8,1154.2 1381.4,1154.2 1383.1,1154.4 1384.7,1156.3 1386.4,1156.8 1388.0,1154.4 1389.5,1153.7 1391.0,1152.2 1392.6,1151.5 1394.2,1152.3 1395.8,1154.4 1397.3,1154.7 1398.9,1157.6 1400.4,1157.1 1401.9,1156.9 1403.4,1156.9 1404.9,1156.9 1406.4,1156.9 1407.9,1156.9 1409.4,1156.9 1410.9,1156.9 1412.4,1156.9 1413.9,1156.9 1415.4,1156.9 1416.9,1156.9 1418.5,1156.9 1420.0,1156.9 1421.5,1156.9 1423.0,1156.9 1424.5,1156.9 1426.0,1156.9 1427.5,1156.9 1429.0,1156.9 1430.5,1156.9 1432.0,1156.9 1433.5,1156.9 1435.0,1156.9 1436.5,1156.9 1438.0,1156.9 1439.5,1156.9 1441.0,1156.9 1442.5,1156.9 1444.0,1156.9 1445.5,1156.9 1447.0,1156.9 1448.5,1156.9 1450.0,1156.9 1451.5,1156.9 1453.0,1156.9 1454.5,1156.9 1456.1,1156.9 1457.6,1156.9 1459.1,1156.9 1460.6,1156.9 1462.1,1156.9 1463.6,1156.9 1465.1,1156.9 1466.6,1156.9 1468.1,1156.9 1469.6,1156.9 1471.1,1156.9 1472.6,1156.9 1474.1,1156.9 1475.6,1156.9 1477.1,1156.9 1478.6,1156.9 1480.1,1156.9 1481.6,1156.9 1483.1,1156.9 1484.6,1156.9 1486.1,1156.9 1487.6,1156.9 1489.1,1156.9 1490.6,1156.9 1492.1,1156.9 1493.6,1156.9 1495.2,1156.9 1496.7,1156.9 1498.2,1156.9 1499.7,1156.9 1501.2,1156.9 1502.7,1156.9 1504.2,1156.9 1505.7,1156.9 1507.2,1156.9 1508.7,1156.9 1510.2,1156.9 1511.7,1156.9 1513.2,1156.9 1514.7,1156.9 1516.2,1156.9 1517.7,1156.9 1519.2,1156.9 1520.7,1156.9 1522.2,1156.9 1523.7,1156.9 1525.2,1156.9 1526.7,1156.9 1528.2,1156.9 1529.7,1156.9 1531.2,1156.9 1532.8,1156.9 1534.3,1156.9 1535.8,1156.9 1537.3,1156.9 1538.8,1156.9 1540.3,1156.9 1541.8,1156.9 1543.3,1156.9 1544.8,1156.9 1546.3,1156.9 1547.8,1156.9 1549.3,1156.9 1550.8,1156.9 1552.3,1156.9 1553.8,1156.9 1555.3,1156.9 1556.8,1156.9 1558.3,1156.9 1559.8,1156.9 1561.3,1156.9 1562.8,1156.9 1564.3,1156.9 1565.8,1156.9 1567.3,1156.9 1568.8,1156.9 1570.4,1156.9 1571.9,1156.9 1573.4,1156.9 1574.9,1156.9 1576.4,1156.9 1577.9,1156.9 1579.4,1156.9 1580.9,1156.9 1582.4,1156.9 1583.9,1156.9 1585.4,1156.9 1586.9,1156.9 1588.4,1156.9 1589.9,1156.9 1591.4,1156.9 1592.9,1156.9 1594.4,1156.9 1595.9,1156.9 1597.4,1156.9 1598.9,1156.9 1600.4,1156.9 1601.9,1156.9 1603.4,1156.9 1604.9,1156.9 1606.4,1156.9 1608.0,1156.9 1609.5,1156.9 1611.0,1156.9 1612.5,1156.9 1614.0,1156.9 1615.5,1156.9 1617.0,1156.9 1618.5,1156.9 1620.0,1156.9 1621.5,1156.9 1623.0,1156.9 1624.5,1156.9 1626.0,1156.9 1627.5,1156.9 1629.0,1156.9 1630.5,1156.9 1632.0,1156.9 1633.5,1156.9 1635.0,1156.9 1636.5,1156.9 1638.0,1156.9 1639.5,1156.9 1641.0,1156.9 1642.5,1156.9 1644.0,1156.9 1645.5,1156.9 1647.1,1156.9 1648.6,1156.9 1650.1,1156.9 1651.6,1156.9 1653.1,1156.9 1654.6,1156.9 1656.1,1156.9 1657.6,1156.9 1659.1,1156.9 1660.6,1156.9 1662.1,1156.9 1663.6,1156.9 1665.1,1156.9 1666.6,1156.9 1668.1,1156.9 1669.6,1156.9 1671.1,1156.9 1672.6,1156.9 1674.1,1156.9 1675.6,1156.9 1677.1,1156.9 1678.6,1156.9 1680.1,1156.9 1681.6,1156.9 1683.1,1156.9 1684.7,1156.9 1686.2,1156.9 1687.7,1156.9 1689.2,1156.9 1690.7,1156.9 1692.2,1156.9 1693.7,1156.9 1695.2,1156.9 1696.7,1156.9 1698.2,1156.9 1699.7,1156.9 1701.2,1156.9 1702.7,1156.9 1704.2,1156.9 1705.7,1156.9 1707.2,1156.9 1708.7,1156.9 1710.2,1156.9 1711.7,1156.9 1713.2,1156.9 1714.7,1156.9 1716.2,1156.9 1717.7,1156.9 1719.2,1156.9 1720.7,1156.9 1722.3,1156.9 1723.8,1156.9 1725.3,1156.9 1726.8,1156.9 1728.3,1156.9 1729.8,1156.9 1731.3,1156.9 1732.8,1156.9 1734.3,1156.9 1735.8,1156.9 1737.3,1156.9 1738.8,1156.9 1740.3,1156.9 1741.8,1156.9 1743.3,1156.9 1744.8,1156.9 1746.3,1156.9 1747.8,1156.9 1749.3,1156.9 1750.8,1156.9 1752.3,1156.9 1753.8,1156.9 1755.3,1156.9 1756.8,1156.9 1758.3,1156.9 1759.9,1156.9 1761.4,1156.9 1762.9,1156.9 1764.4,1156.9 1765.9,1156.9 1767.4,1156.9 1768.9,1156.9 1770.4,1156.9 1771.9,1156.9 1773.4,1156.9 1774.9,1156.9 1776.4,1156.9 1777.9,1156.9 1779.4,1156.9 1780.9,1156.9 1782.4,1156.9 1783.9,1156.9 1785.4,1156.9 1786.9,1156.9 1788.4,1156.9 1789.9,1156.9 1791.4,1156.9 1792.9,1156.9 1794.4,1156.9 1795.9,1156.9 1797.4,1156.9 1799.0,1156.9 1800.5,1156.9 1802.0,1156.9 1803.5,1156.9 1805.0,1156.9 1806.5,1156.9 1808.0,1156.9 1809.5,1156.9 1811.0,1156.9 1812.5,1156.9 1814.0,1156.9 1815.5,1156.9 1817.0,1156.9 1818.5,1156.9 1820.0,1156.9 1821.5,1156.9 1823.0,1156.9 1824.5,1156.9 1826.0,1156.9 1827.5,1156.9 1829.0,1156.9 1830.5,1156.9 1832.0,1156.9 1833.5,1156.9 1835.0,1156.9 1836.6,1156.9 1838.1,1156.9 1839.6,1156.9 1841.1,1156.9 1842.6,1156.9 1844.1,1156.9 1845.6,1156.9 1847.1,1156.9 1848.6,1156.9 1850.1,1156.9 1851.6,1156.9 1853.1,1156.7 1854.6,1157.4 1856.2,1153.9 1857.7,1149.9 1859.2,1148.5 1860.8,1148.3 1862.9,1144.8 1865.0,1142.4 1866.7,1144.0 1868.5,1147.9 1870.2,1150.8 1872.2,1146.6 1874.3,1143.5 1876.0,1144.1 1877.8,1143.6 1879.5,1143.9 1881.6,1139.3 1883.7,1134.4 1885.8,1137.6 1887.8,1141.5 1889.9,1141.3 1892.0,1140.3 1893.5,1141.0 1895.1,1143.7 1896.8,1141.4 1898.6,1138.4 1900.3,1136.3 1902.4,1139.4 1904.5,1142.8 1906.5,1145.3 1908.6,1148.2 1910.3,1146.6 1912.0,1145.3 1913.6,1142.2 1915.3,1140.7 1917.0,1139.8 1918.5,1141.7 1920.1,1143.3 1921.7,1146.0 1923.2,1147.4 1925.3,1151.7 1927.4,1155.7 1929.1,1155.6 1930.9,1153.0 1932.6,1152.0 1934.3,1155.1 1936.1,1158.8 1937.8,1160.9 1939.5,1160.8 1941.3,1161.1 1943.0,1161.7 1944.7,1164.9 1946.3,1168.0 1948.0,1171.9 1949.6,1175.4 1951.3,1179.7 1953.0,1177.6 1954.6,1174.4 1956.3,1173.6 1957.9,1170.4 1959.6,1168.7 1961.3,1167.7 1963.1,1166.1 1964.8,1165.2 1966.9,1160.4 1969.0,1154.6 1971.0,1160.0 1973.1,1165.5 1974.8,1166.4 1976.6,1166.5 1978.3,1168.1 1980.0,1169.2 1981.8,1169.5 1983.5,1171.4 1985.1,1169.8 1986.7,1167.5 1988.2,1166.0 1989.8,1163.3 1991.5,1162.6 1993.1,1160.1 1994.8,1158.4 1996.4,1157.2 1998.1,1155.6 1999.8,1154.1 2001.6,1153.5 2003.3,1152.2 2005.0,1150.6 2006.8,1149.9 2008.5,1147.9 2010.1,1147.1 2011.6,1147.3 2013.2,1145.4 2014.8,1144.4 2016.3,1144.7 2017.9,1143.7 2019.4,1142.3 2021.0,1142.3 2022.8,1143.7 2024.6,1144.9 2026.4,1146.6 2028.2,1148.8 2029.9,1146.6 2031.7,1144.3 2033.4,1143.3 2035.1,1144.0 2036.9,1145.9 2038.6,1145.9 2040.2,1151.3 2041.8,1157.3 2043.3,1156.9 2044.8,1156.9 2046.3,1156.9 2047.8,1156.9 2049.3,1156.8 2050.8,1156.8 2052.3,1156.8 2053.9,1156.8 2055.4,1156.8 2056.9,1156.8 2058.4,1156.8 2059.9,1156.8 2061.4,1156.8 2062.9,1156.7 2064.4,1156.7 2065.9,1156.7 2067.4,1156.7 2068.9,1156.7 2070.4,1156.7 2071.9,1156.7 2073.4,1156.7 2074.9,1156.7 2076.5,1156.6 2078.0,1156.6 2079.5,1156.6 2081.0,1156.6 2082.5,1156.6 2084.0,1156.6 2085.5,1156.6 2087.0,1156.6 2088.5,1156.6 2090.0,1156.5 2091.5,1156.5 2093.0,1156.5 2094.5,1156.5 2096.0,1156.5 2097.5,1156.5 2099.1,1156.5 2100.6,1156.5 2102.1,1156.5 2103.6,1156.4 2105.1,1156.4 2106.6,1156.4 2108.1,1156.8 2109.6,1155.7 2111.6,1150.5 2113.2,1150.1 2114.8,1148.7 2116.3,1147.4 2117.9,1147.7 2119.7,1148.9 2121.6,1152.2 2123.4,1154.3 2125.2,1157.5 2126.8,1159.3 2128.3,1162.2 2129.9,1160.4 2131.4,1160.5 2132.9,1159.7 2134.5,1158.9 2136.6,1161.1 2138.7,1161.8 2140.4,1160.7 2142.0,1160.4 2143.7,1159.7 2145.3,1158.4 2147.0,1158.2 2149.1,1158.3 2151.2,1158.9 2152.8,1161.6 2154.3,1163.1 2155.8,1163.9 2157.4,1165.0 2159.1,1165.4 2160.9,1163.0 2162.6,1162.2 2164.3,1162.2 2166.1,1160.7 2167.8,1159.4 2169.4,1159.6 2170.9,1159.4 2172.5,1158.5 2174.1,1158.6 2175.6,1156.9 2177.2,1157.2 2178.7,1157.1 2180.3,1157.0 2182.0,1157.0 2183.6,1157.8 2185.3,1157.9 2186.9,1159.2 2188.6,1159.6 2190.2,1161.1 2191.7,1161.1 2193.2,1161.3 2194.8,1163.1 2196.4,1163.1 2197.9,1163.1 2199.5,1164.9 2201.1,1164.7 2202.6,1164.7 2204.2,1165.3 2205.8,1164.9 2207.3,1165.4 2208.9,1164.7 2210.4,1163.0 2212.0,1163.5 2213.6,1162.4 2215.1,1162.0 2216.7,1162.0 2218.4,1160.6 2220.0,1160.0 2221.7,1160.4 2223.3,1159.6 2225.0,1159.0 2226.8,1157.6 2228.7,1156.6 2230.5,1155.0 2232.3,1153.7 2234.0,1153.8 2235.6,1155.3 2237.3,1156.5 2238.9,1156.7 2240.6,1157.7 2242.4,1157.9 2244.2,1159.4 2246.1,1160.6 2247.9,1162.0 2249.6,1161.0 2251.2,1159.9 2252.9,1160.5 2254.5,1159.1 2256.2,1157.9 2258.3,1160.1 2260.4,1160.4 2262.2,1160.0 2264.0,1157.2 2265.8,1157.1 2267.6,1155.7 2269.2,1154.9 2270.8,1153.1 2272.3,1153.0 2273.9,1152.2 2275.7,1152.2 2277.6,1152.1 2279.4,1153.2 2281.2,1153.1 2282.8,1152.0 2284.3,1148.7 2286.0,1150.2 2287.6,1151.9 2289.3,1152.3 2290.9,1153.6 2292.6,1154.7 2294.4,1156.2 2296.2,1156.4 2298.1,1155.5 2299.9,1156.0 2301.7,1155.9 2303.6,1154.1 2305.4,1153.4 2307.2,1152.8 2308.8,1154.0 2310.3,1153.4 2311.8,1154.4 2313.4,1153.8 2315.1,1152.1 2316.9,1149.7 2318.6,1147.2 2320.7,1150.1 2322.8,1154.2 2324.4,1153.1 2325.9,1152.5 2327.4,1151.7 2329.0,1151.9 2330.6,1147.6 2332.1,1144.8 2333.7,1147.0 2335.2,1147.4 2336.8,1150.1 2338.4,1151.8 2339.9,1149.3 2341.5,1147.7 2343.1,1144.9 2344.6,1143.3 2346.4,1145.2 2348.3,1145.9 2350.2,1147.4 2352.0,1149.0" fill="none" stroke="#10e6f4" stroke-width="2.6" stroke-linejoin="round" stroke-linecap="round"/><polyline clip-path="url(#cp5)" points="1221,1292.5 1230.4,1292 1235.6,1293.5 1240,1295 1246,1298.7 1249.1,1304 1252.2,1311" fill="none" stroke="#f0f0f0" stroke-width="2.4" stroke-linejoin="round" stroke-linecap="round"/><polyline clip-path="url(#cp5)" points="1272,1311 1274.1,1308 1278.2,1305 1288.6,1303.9 1301.1,1305 1306.3,1307.6 1326,1307.6 1339.6,1309.1 1341,1311" fill="none" stroke="#f0f0f0" stroke-width="2.4" stroke-linejoin="round" stroke-linecap="round"/><polyline clip-path="url(#cp5)" points="1846,1311 1848.3,1308.5 1852.5,1305.4 1860.8,1303.3 1867,1299.1 1881.6,1296 1923.2,1296 1931.5,1299.1 1952.3,1308.5 1958,1311" fill="none" stroke="#f0f0f0" stroke-width="2.4" stroke-linejoin="round" stroke-linecap="round"/><polyline clip-path="url(#cp5)" points="2313,1311 2316.3,1308.5 2322.5,1305.4 2328.8,1307 2352,1307" fill="none" stroke="#f0f0f0" stroke-width="2.4" stroke-linejoin="round" stroke-linecap="round"/><path d="M1861.8,692 V1309" stroke="#f4f4f4" stroke-width="1.4"/></svg></body></html>
